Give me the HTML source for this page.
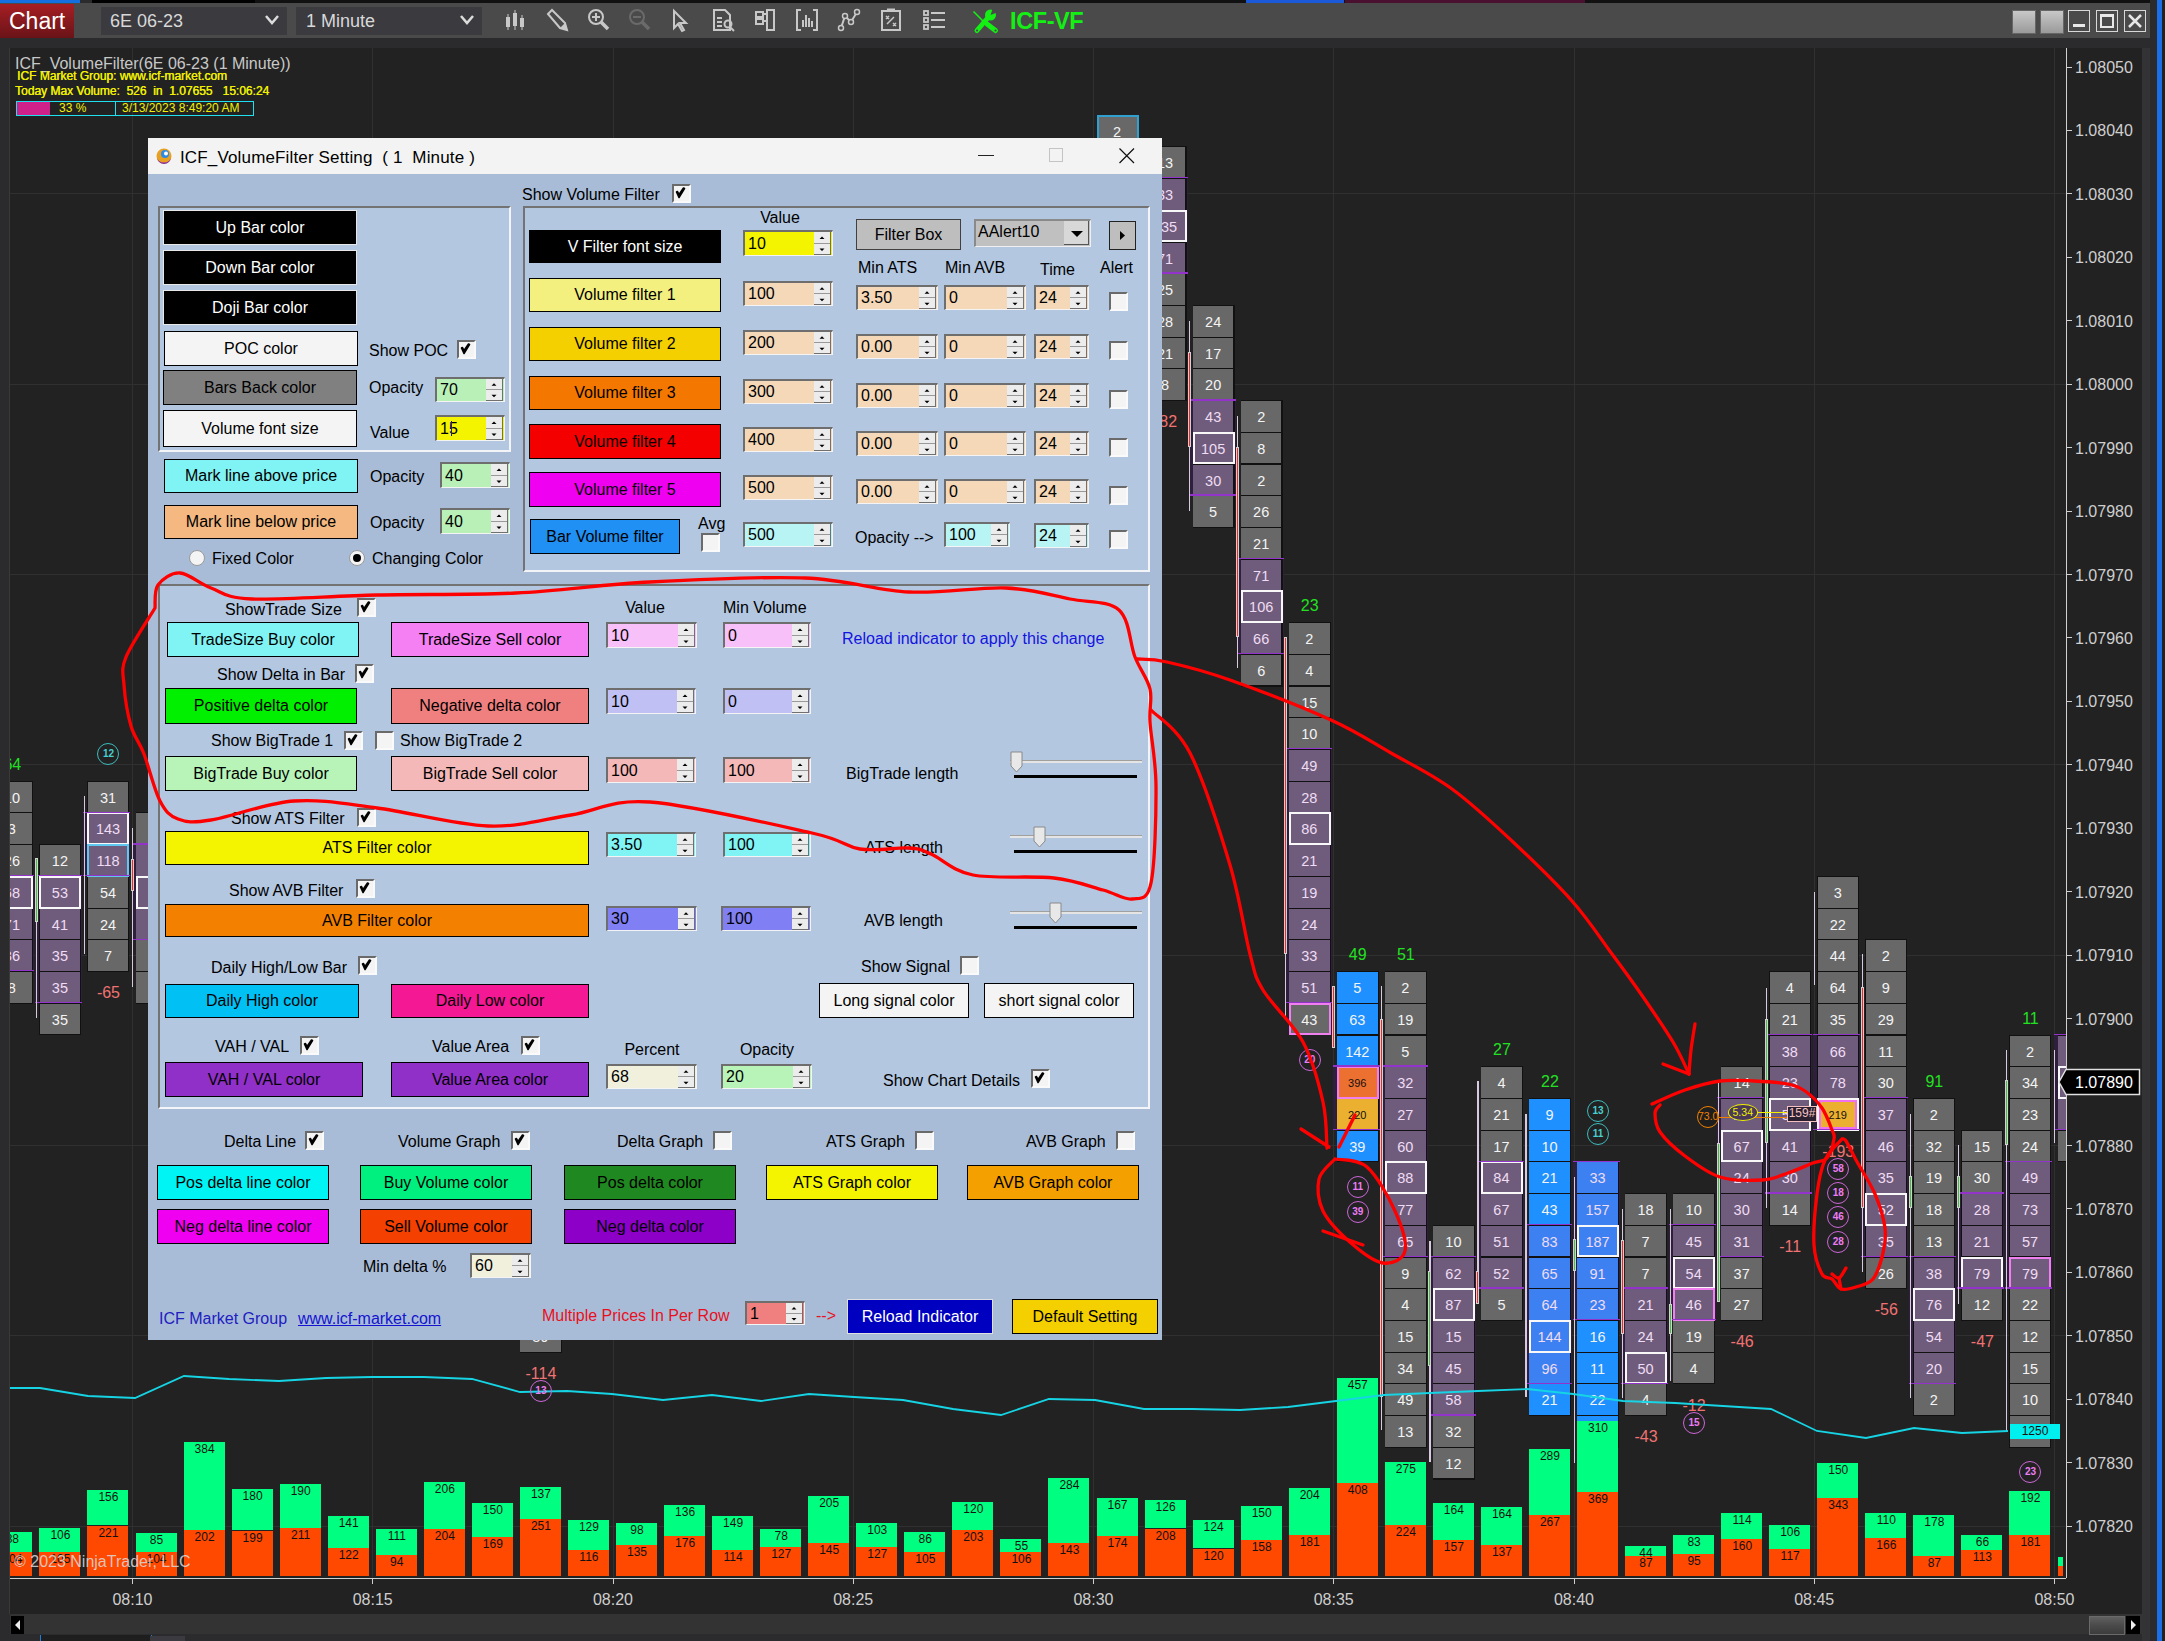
<!DOCTYPE html>
<html><head><meta charset="utf-8"><style>
html,body{margin:0;padding:0;width:2165px;height:1641px;overflow:hidden;background:#2b2b2d}
body{position:relative;font-family:"Liberation Sans", sans-serif}
div,svg{font-family:"Liberation Sans", sans-serif}
</style></head><body>
<div style="position:absolute;left:0px;top:0px;width:2165px;height:1641px;background:#2b2b2d"></div>
<div style="position:absolute;left:0px;top:0px;width:80px;height:3px;background:#1470e0"></div>
<div style="position:absolute;left:92px;top:0px;width:163px;height:3px;background:#000"></div>
<div style="position:absolute;left:255px;top:0px;width:1900px;height:3px;background:#111"></div>
<div style="position:absolute;left:1246px;top:0px;width:98px;height:3px;background:#1a5ad8"></div>
<div style="position:absolute;left:1345px;top:0px;width:240px;height:3px;background:#4a1030"></div>
<div style="position:absolute;left:0px;top:3px;width:2165px;height:35px;background:#4a4a4a"></div>
<div style="position:absolute;left:0px;top:4px;width:74px;height:34px;background:linear-gradient(#a61e24,#6a1418)"></div>
<div style="position:absolute;left:9px;top:6.5px;line-height:29px;font-size:23px;color:#fff;white-space:pre;">Chart</div>
<div style="position:absolute;left:101px;top:7px;width:186px;height:28px;background:#3a3a3f"></div>
<div style="position:absolute;left:110px;top:10.0px;line-height:22px;font-size:18px;color:#d8d8d8;white-space:pre;">6E 06-23</div>
<div style="position:absolute;left:296px;top:7px;width:186px;height:28px;background:#3a3a3f"></div>
<div style="position:absolute;left:306px;top:10.0px;line-height:22px;font-size:18px;color:#d8d8d8;white-space:pre;">1 Minute</div>
<svg style="position:absolute;left:264px;top:14px" width="16" height="12"><polyline points="2,2 8,9 14,2" fill="none" stroke="#dcdcdc" stroke-width="2.5"/></svg>
<svg style="position:absolute;left:459px;top:14px" width="16" height="12"><polyline points="2,2 8,9 14,2" fill="none" stroke="#dcdcdc" stroke-width="2.5"/></svg>
<svg style="position:absolute;left:503px;top:8px" width="25" height="25" viewBox="0 0 25 25"><rect x="3" y="9" width="4" height="10" fill="#c8c8c8"/><rect x="4.5" y="6" width="1" height="16" fill="#c8c8c8"/><rect x="10" y="5" width="4" height="13" fill="#c8c8c8"/><rect x="11.5" y="2" width="1" height="20" fill="#c8c8c8"/><rect x="17" y="10" width="4" height="9" fill="#c8c8c8"/><rect x="18.5" y="7" width="1" height="15" fill="#c8c8c8"/></svg>
<svg style="position:absolute;left:544px;top:8px" width="25" height="25" viewBox="0 0 25 25"><path d="M4 6 L8 2 L21 15 L23 22 L16 20 Z" fill="none" stroke="#c8c8c8" stroke-width="2"/><path d="M16 20 L23 22 L21 15 Z" fill="#c8c8c8"/></svg>
<svg style="position:absolute;left:586px;top:8px" width="25" height="25" viewBox="0 0 25 25"><circle cx="10" cy="9" r="7" fill="none" stroke="#c8c8c8" stroke-width="2"/><path d="M10 5 V13 M6 9 H14" stroke="#c8c8c8" stroke-width="2"/><path d="M15 14 L22 21" stroke="#c8c8c8" stroke-width="3.5"/></svg>
<svg style="position:absolute;left:627px;top:8px" width="25" height="25" viewBox="0 0 25 25"><circle cx="10" cy="9" r="7" fill="none" stroke="#6a6a6a" stroke-width="2"/><path d="M6 9 H14" stroke="#6a6a6a" stroke-width="2"/><path d="M15 14 L22 21" stroke="#6a6a6a" stroke-width="3.5"/></svg>
<svg style="position:absolute;left:668px;top:8px" width="25" height="25" viewBox="0 0 25 25"><path d="M6 3 L6 20 L10 16 L14 23 L16 22 L12 15 L18 15 Z" fill="none" stroke="#c8c8c8" stroke-width="2"/></svg>
<svg style="position:absolute;left:711px;top:8px" width="25" height="25" viewBox="0 0 25 25"><path d="M3 2 H14 L19 7 V22 H3 Z" fill="none" stroke="#c8c8c8" stroke-width="2"/><path d="M6 10 H11 M6 14 H11 M6 18 H11" stroke="#c8c8c8" stroke-width="2"/><circle cx="17" cy="16" r="3.5" fill="none" stroke="#c8c8c8" stroke-width="2"/><path d="M19 19 L23 23" stroke="#c8c8c8" stroke-width="2"/></svg>
<svg style="position:absolute;left:754px;top:8px" width="25" height="25" viewBox="0 0 25 25"><rect x="13" y="2" width="7" height="20" fill="none" stroke="#c8c8c8" stroke-width="2"/><rect x="2" y="4" width="7" height="5" fill="none" stroke="#c8c8c8" stroke-width="2"/><rect x="2" y="11" width="7" height="5" fill="none" stroke="#c8c8c8" stroke-width="2"/><path d="M9 6 H13 M9 13 H13" stroke="#c8c8c8" stroke-width="2"/></svg>
<svg style="position:absolute;left:795px;top:8px" width="25" height="25" viewBox="0 0 25 25"><path d="M6 2 H2 V22 H6 M18 2 H22 V22 H18" fill="none" stroke="#c8c8c8" stroke-width="2"/><path d="M8 12 V19 M11 7 V19 M14 10 V19 M17 13 V19" stroke="#c8c8c8" stroke-width="2"/></svg>
<svg style="position:absolute;left:837px;top:8px" width="25" height="25" viewBox="0 0 25 25"><path d="M4 20 L8 8 L14 14 L20 4" fill="none" stroke="#c8c8c8" stroke-width="2"/><circle cx="4" cy="20" r="2.5" fill="#4a4a4a" stroke="#c8c8c8" stroke-width="1.5"/><circle cx="8" cy="8" r="2.5" fill="#4a4a4a" stroke="#c8c8c8" stroke-width="1.5"/><circle cx="14" cy="14" r="2.5" fill="#4a4a4a" stroke="#c8c8c8" stroke-width="1.5"/><circle cx="20" cy="4" r="2.5" fill="#4a4a4a" stroke="#c8c8c8" stroke-width="1.5"/></svg>
<svg style="position:absolute;left:879px;top:8px" width="25" height="25" viewBox="0 0 25 25"><rect x="3" y="3" width="18" height="19" fill="none" stroke="#c8c8c8" stroke-width="2"/><path d="M8 2 H16" stroke="#c8c8c8" stroke-width="3"/><path d="M7 8 L10 11 M10 8 L7 11 M14 15 L17 18 M17 15 L14 18 M8 16 L15 9" stroke="#c8c8c8" stroke-width="1.5"/></svg>
<svg style="position:absolute;left:922px;top:8px" width="25" height="25" viewBox="0 0 25 25"><rect x="2" y="3" width="4" height="4" fill="none" stroke="#c8c8c8" stroke-width="1.8"/><rect x="2" y="10" width="4" height="4" fill="none" stroke="#c8c8c8" stroke-width="1.8"/><rect x="2" y="17" width="4" height="4" fill="none" stroke="#c8c8c8" stroke-width="1.8"/><path d="M9 5 H23 M9 12 H23 M9 19 H23" stroke="#c8c8c8" stroke-width="2"/></svg>
<svg style="position:absolute;left:970px;top:8px" width="30" height="28" viewBox="0 0 30 28"><path d="M3.5 3.5 L13 13" stroke="#14f014" stroke-width="1.6"/><path d="M17 16 L25.5 22.5" stroke="#14f014" stroke-width="5" stroke-linecap="round"/><path d="M7 22.5 L18.5 9" stroke="#14f014" stroke-width="5" stroke-linecap="round"/><circle cx="20.5" cy="7" r="5.5" fill="#14f014"/><path d="M20.5 7 L23 0 L28.5 4 Z" fill="#4a4a4a"/><circle cx="7" cy="22.5" r="1.1" fill="#4a4a4a"/><circle cx="25.5" cy="22.5" r="1.1" fill="#4a4a4a"/></svg>
<div style="position:absolute;left:1010px;top:6.5px;line-height:29px;font-size:23.5px;color:#14f014;white-space:pre;font-weight:bold;letter-spacing:-0.4px">ICF-VF</div>
<div style="position:absolute;left:2012px;top:10px;width:22px;height:22px;background:linear-gradient(#c8c8c8,#9a9a9a);border:1px solid #666"></div>
<div style="position:absolute;left:2040px;top:10px;width:22px;height:22px;background:linear-gradient(#c8c8c8,#9a9a9a);border:1px solid #666"></div>
<div style="position:absolute;left:2068px;top:10px;width:22px;height:22px;border:1.5px solid #d8d8d8;box-sizing:border-box"></div>
<div style="position:absolute;left:2096px;top:10px;width:22px;height:22px;border:1.5px solid #d8d8d8;box-sizing:border-box"></div>
<div style="position:absolute;left:2124px;top:10px;width:22px;height:22px;border:1.5px solid #d8d8d8;box-sizing:border-box"></div>
<div style="position:absolute;left:2073px;top:24px;width:12px;height:2.5px;background:#e8e8e8"></div>
<div style="position:absolute;left:2100px;top:14px;width:14px;height:14px;border:2px solid #e8e8e8;border-top-width:3px;box-sizing:border-box"></div>
<svg style="position:absolute;left:2124px;top:10px" width="22" height="22"><path d="M5 5 L17 17 M17 5 L5 17" stroke="#e8e8e8" stroke-width="2.5"/></svg>
<div style="position:absolute;left:10px;top:48px;width:2132px;height:1566px;background:#222222"></div>
<div style="position:absolute;left:9px;top:48px;width:1px;height:1566px;background:#3a3a3a"></div>
<div style="position:absolute;left:2142px;top:48px;width:8px;height:1593px;background:#333335"></div>
<div style="position:absolute;left:2157px;top:0px;width:5px;height:1641px;background:#1a6ee8"></div>
<div style="position:absolute;left:2150px;top:0px;width:7px;height:1641px;background:#2b2b2d"></div>
<div style="position:absolute;left:2162px;top:0px;width:3px;height:1641px;background:#222"></div>
<div style="position:absolute;left:0;top:0;width:2165px;height:1641px;clip-path:inset(48px 99px 63px 10px)">
<div style="position:absolute;left:10px;top:193.4px;width:2056px;height:1px;background:#303030"></div>
<div style="position:absolute;left:10px;top:383.7px;width:2056px;height:1px;background:#303030"></div>
<div style="position:absolute;left:10px;top:574.0px;width:2056px;height:1px;background:#303030"></div>
<div style="position:absolute;left:10px;top:764.3px;width:2056px;height:1px;background:#303030"></div>
<div style="position:absolute;left:10px;top:954.7px;width:2056px;height:1px;background:#303030"></div>
<div style="position:absolute;left:10px;top:1145.0px;width:2056px;height:1px;background:#303030"></div>
<div style="position:absolute;left:10px;top:1335.3px;width:2056px;height:1px;background:#303030"></div>
<div style="position:absolute;left:10px;top:1525.6px;width:2056px;height:1px;background:#303030"></div>
<div style="position:absolute;left:132.0px;top:48px;width:1px;height:1530px;background:#303030"></div>
<div style="position:absolute;left:372.25px;top:48px;width:1px;height:1530px;background:#303030"></div>
<div style="position:absolute;left:612.5px;top:48px;width:1px;height:1530px;background:#303030"></div>
<div style="position:absolute;left:852.75px;top:48px;width:1px;height:1530px;background:#303030"></div>
<div style="position:absolute;left:1093.0px;top:48px;width:1px;height:1530px;background:#303030"></div>
<div style="position:absolute;left:1333.25px;top:48px;width:1px;height:1530px;background:#303030"></div>
<div style="position:absolute;left:1573.5px;top:48px;width:1px;height:1530px;background:#303030"></div>
<div style="position:absolute;left:1813.75px;top:48px;width:1px;height:1530px;background:#303030"></div>
<div style="position:absolute;left:2054.0px;top:48px;width:1px;height:1530px;background:#303030"></div>
<div style="position:absolute;left:-12.65px;top:875.9px;width:47px;height:95.2px;background:#2e1f3c"></div>
<div style="position:absolute;left:-8.65px;top:780.7px;width:42px;height:223.0px;background:#111"></div>
<div style="position:absolute;left:-8.35px;top:781.7px;width:40.5px;height:30.7px;background:#686868;color:#f4f4f4;font-size:14.5px;line-height:32.7px;text-align:center">10</div>
<div style="position:absolute;left:-8.35px;top:813.4px;width:40.5px;height:30.7px;background:#686868;color:#f4f4f4;font-size:14.5px;line-height:32.7px;text-align:center">3</div>
<div style="position:absolute;left:-8.35px;top:845.1px;width:40.5px;height:30.7px;background:#686868;color:#f4f4f4;font-size:14.5px;line-height:32.7px;text-align:center">26</div>
<div style="position:absolute;left:-8.35px;top:876.9px;width:40.5px;height:30.7px;background:#6f5c7c;color:#f0dcf4;font-size:14.5px;line-height:32.7px;text-align:center">68</div>
<div style="position:absolute;left:-8.65px;top:875.9px;width:42px;height:32.7px;border:2px solid #f8f8f8;box-sizing:border-box"></div>
<div style="position:absolute;left:-8.35px;top:908.6px;width:40.5px;height:30.7px;background:#6f5c7c;color:#f0dcf4;font-size:14.5px;line-height:32.7px;text-align:center">71</div>
<div style="position:absolute;left:-8.35px;top:940.3px;width:40.5px;height:30.7px;background:#6f5c7c;color:#f0dcf4;font-size:14.5px;line-height:32.7px;text-align:center">36</div>
<div style="position:absolute;left:-8.35px;top:972.0px;width:40.5px;height:30.7px;background:#686868;color:#f4f4f4;font-size:14.5px;line-height:32.7px;text-align:center">8</div>
<div style="position:absolute;left:-12.65px;top:875.1px;width:47px;height:1.3px;background:#9432cc"></div>
<div style="position:absolute;left:-12.65px;top:970.2px;width:47px;height:1.3px;background:#9432cc"></div>
<div style="position:absolute;left:-7.65px;top:754.8px;width:40px;height:20px;line-height:20px;text-align:center;font-size:16px;color:#22e022">64</div>
<div style="position:absolute;left:35.4px;top:875.9px;width:47px;height:126.9px;background:#2e1f3c"></div>
<div style="position:absolute;left:39.4px;top:844.1px;width:42px;height:191.3px;background:#111"></div>
<div style="position:absolute;left:39.70px;top:845.1px;width:40.5px;height:30.7px;background:#686868;color:#f4f4f4;font-size:14.5px;line-height:32.7px;text-align:center">12</div>
<div style="position:absolute;left:39.70px;top:876.9px;width:40.5px;height:30.7px;background:#6f5c7c;color:#f0dcf4;font-size:14.5px;line-height:32.7px;text-align:center">53</div>
<div style="position:absolute;left:39.4px;top:875.9px;width:42px;height:32.7px;border:2px solid #f8f8f8;box-sizing:border-box"></div>
<div style="position:absolute;left:39.70px;top:908.6px;width:40.5px;height:30.7px;background:#6f5c7c;color:#f0dcf4;font-size:14.5px;line-height:32.7px;text-align:center">41</div>
<div style="position:absolute;left:39.70px;top:940.3px;width:40.5px;height:30.7px;background:#6f5c7c;color:#f0dcf4;font-size:14.5px;line-height:32.7px;text-align:center">35</div>
<div style="position:absolute;left:39.70px;top:972.0px;width:40.5px;height:30.7px;background:#6f5c7c;color:#f0dcf4;font-size:14.5px;line-height:32.7px;text-align:center">35</div>
<div style="position:absolute;left:39.70px;top:1003.7px;width:40.5px;height:30.7px;background:#686868;color:#f4f4f4;font-size:14.5px;line-height:32.7px;text-align:center">35</div>
<div style="position:absolute;left:35.4px;top:875.1px;width:47px;height:1.3px;background:#9432cc"></div>
<div style="position:absolute;left:35.4px;top:1001.9px;width:47px;height:1.3px;background:#9432cc"></div>
<div style="position:absolute;left:35.9px;top:858px;width:1.2px;height:160px;background:#d8c8e0"></div>
<div style="position:absolute;left:34.9px;top:858px;width:3px;height:64px;background:#d4d0d4"></div>
<div style="position:absolute;left:35.9px;top:859px;width:1px;height:62px;background:#40c040"></div>
<div style="position:absolute;left:83.45px;top:812.4px;width:47px;height:63.4px;background:#2e1f3c"></div>
<div style="position:absolute;left:87.45px;top:780.7px;width:42px;height:191.3px;background:#111"></div>
<div style="position:absolute;left:87.75px;top:781.7px;width:40.5px;height:30.7px;background:#686868;color:#f4f4f4;font-size:14.5px;line-height:32.7px;text-align:center">31</div>
<div style="position:absolute;left:87.75px;top:813.4px;width:40.5px;height:30.7px;background:#6f5c7c;color:#f0dcf4;font-size:14.5px;line-height:32.7px;text-align:center">143</div>
<div style="position:absolute;left:87.45px;top:812.4px;width:42px;height:32.7px;border:2px solid #f8f8f8;box-sizing:border-box"></div>
<div style="position:absolute;left:87.75px;top:845.1px;width:40.5px;height:30.7px;background:#6f5c7c;color:#f0dcf4;font-size:14.5px;line-height:32.7px;text-align:center">118</div>
<div style="position:absolute;left:87.45px;top:844.1px;width:42px;height:32.7px;border:2px solid #60c8f0;box-sizing:border-box"></div>
<div style="position:absolute;left:87.75px;top:876.9px;width:40.5px;height:30.7px;background:#686868;color:#f4f4f4;font-size:14.5px;line-height:32.7px;text-align:center">54</div>
<div style="position:absolute;left:87.75px;top:908.6px;width:40.5px;height:30.7px;background:#686868;color:#f4f4f4;font-size:14.5px;line-height:32.7px;text-align:center">24</div>
<div style="position:absolute;left:87.75px;top:940.3px;width:40.5px;height:30.7px;background:#686868;color:#f4f4f4;font-size:14.5px;line-height:32.7px;text-align:center">7</div>
<div style="position:absolute;left:83.45px;top:811.6px;width:47px;height:1.3px;background:#9432cc"></div>
<div style="position:absolute;left:83.45px;top:875.1px;width:47px;height:1.3px;background:#9432cc"></div>
<div style="position:absolute;left:83.95px;top:796px;width:1.2px;height:158px;background:#d8c8e0"></div>
<div style="position:absolute;left:88.45px;top:983.2px;width:40px;height:20px;line-height:20px;text-align:center;font-size:16px;color:#f07272">-65</div>
<div style="position:absolute;left:131.5px;top:844.1px;width:47px;height:95.2px;background:#2e1f3c"></div>
<div style="position:absolute;left:135.5px;top:812.4px;width:42px;height:191.3px;background:#111"></div>
<div style="position:absolute;left:135.80px;top:813.4px;width:40.5px;height:30.7px;background:#686868;color:#f4f4f4;font-size:14.5px;line-height:32.7px;text-align:center">75</div>
<div style="position:absolute;left:135.80px;top:845.1px;width:40.5px;height:30.7px;background:#6f5c7c;color:#f0dcf4;font-size:14.5px;line-height:32.7px;text-align:center">35</div>
<div style="position:absolute;left:135.80px;top:876.9px;width:40.5px;height:30.7px;background:#6f5c7c;color:#f0dcf4;font-size:14.5px;line-height:32.7px;text-align:center">65</div>
<div style="position:absolute;left:135.5px;top:875.9px;width:42px;height:32.7px;border:2px solid #f8f8f8;box-sizing:border-box"></div>
<div style="position:absolute;left:135.80px;top:908.6px;width:40.5px;height:30.7px;background:#6f5c7c;color:#f0dcf4;font-size:14.5px;line-height:32.7px;text-align:center">55</div>
<div style="position:absolute;left:135.80px;top:940.3px;width:40.5px;height:30.7px;background:#686868;color:#f4f4f4;font-size:14.5px;line-height:32.7px;text-align:center">24</div>
<div style="position:absolute;left:135.80px;top:972.0px;width:40.5px;height:30.7px;background:#686868;color:#f4f4f4;font-size:14.5px;line-height:32.7px;text-align:center">9</div>
<div style="position:absolute;left:131.5px;top:843.3px;width:47px;height:1.3px;background:#9432cc"></div>
<div style="position:absolute;left:131.5px;top:938.5px;width:47px;height:1.3px;background:#9432cc"></div>
<div style="position:absolute;left:132.0px;top:828px;width:1.2px;height:159px;background:#d8c8e0"></div>
<div style="position:absolute;left:131.0px;top:859px;width:3px;height:32px;background:#d4d0d4"></div>
<div style="position:absolute;left:132.0px;top:860px;width:1px;height:30px;background:#f02828"></div>
<div style="position:absolute;left:519.9px;top:1319.9px;width:42px;height:32.7px;background:#111"></div>
<div style="position:absolute;left:520.20px;top:1320.9px;width:40.5px;height:30.7px;background:#686868;color:#f4f4f4;font-size:14.5px;line-height:32.7px;text-align:center">39</div>
<div style="position:absolute;left:520.9px;top:1363.9px;width:40px;height:20px;line-height:20px;text-align:center;font-size:16px;color:#f07272">-114</div>
<div style="position:absolute;left:1096.5px;top:114.6px;width:42px;height:159.6px;background:#111"></div>
<div style="position:absolute;left:1096.80px;top:115.6px;width:40.5px;height:30.7px;background:#686868;color:#f4f4f4;font-size:14.5px;line-height:32.7px;text-align:center">2</div>
<div style="position:absolute;left:1096.5px;top:114.6px;width:42px;height:32.7px;border:2px solid #30a0d0;box-sizing:border-box"></div>
<div style="position:absolute;left:1096.80px;top:147.3px;width:40.5px;height:30.7px;background:#686868;color:#f4f4f4;font-size:14.5px;line-height:32.7px;text-align:center">44</div>
<div style="position:absolute;left:1096.80px;top:179.0px;width:40.5px;height:30.7px;background:#686868;color:#f4f4f4;font-size:14.5px;line-height:32.7px;text-align:center">74</div>
<div style="position:absolute;left:1096.80px;top:210.7px;width:40.5px;height:30.7px;background:#686868;color:#f4f4f4;font-size:14.5px;line-height:32.7px;text-align:center">75</div>
<div style="position:absolute;left:1096.80px;top:242.5px;width:40.5px;height:30.7px;background:#686868;color:#f4f4f4;font-size:14.5px;line-height:32.7px;text-align:center">90</div>
<div style="position:absolute;left:1140.55px;top:178.0px;width:47px;height:95.2px;background:#2e1f3c"></div>
<div style="position:absolute;left:1144.55px;top:146.3px;width:42px;height:254.8px;background:#111"></div>
<div style="position:absolute;left:1144.85px;top:147.3px;width:40.5px;height:30.7px;background:#686868;color:#f4f4f4;font-size:14.5px;line-height:32.7px;text-align:center">13</div>
<div style="position:absolute;left:1144.85px;top:179.0px;width:40.5px;height:30.7px;background:#6f5c7c;color:#f0dcf4;font-size:14.5px;line-height:32.7px;text-align:center">33</div>
<div style="position:absolute;left:1144.85px;top:210.7px;width:40.5px;height:30.7px;background:#6f5c7c;color:#f0dcf4;font-size:14.5px;line-height:32.7px;text-align:center">135</div>
<div style="position:absolute;left:1144.55px;top:209.7px;width:42px;height:32.7px;border:2px solid #f8f8f8;box-sizing:border-box"></div>
<div style="position:absolute;left:1144.85px;top:242.5px;width:40.5px;height:30.7px;background:#6f5c7c;color:#f0dcf4;font-size:14.5px;line-height:32.7px;text-align:center">71</div>
<div style="position:absolute;left:1144.85px;top:274.2px;width:40.5px;height:30.7px;background:#686868;color:#f4f4f4;font-size:14.5px;line-height:32.7px;text-align:center">25</div>
<div style="position:absolute;left:1144.85px;top:305.9px;width:40.5px;height:30.7px;background:#686868;color:#f4f4f4;font-size:14.5px;line-height:32.7px;text-align:center">28</div>
<div style="position:absolute;left:1144.85px;top:337.6px;width:40.5px;height:30.7px;background:#686868;color:#f4f4f4;font-size:14.5px;line-height:32.7px;text-align:center">21</div>
<div style="position:absolute;left:1144.85px;top:369.3px;width:40.5px;height:30.7px;background:#686868;color:#f4f4f4;font-size:14.5px;line-height:32.7px;text-align:center">8</div>
<div style="position:absolute;left:1140.55px;top:177.2px;width:47px;height:1.3px;background:#9432cc"></div>
<div style="position:absolute;left:1140.55px;top:272.4px;width:47px;height:1.3px;background:#9432cc"></div>
<div style="position:absolute;left:1145.55px;top:412.3px;width:40px;height:20px;line-height:20px;text-align:center;font-size:16px;color:#f07272">-82</div>
<div style="position:absolute;left:1188.6px;top:400.1px;width:47px;height:95.2px;background:#2e1f3c"></div>
<div style="position:absolute;left:1192.6px;top:304.9px;width:42px;height:223.0px;background:#111"></div>
<div style="position:absolute;left:1192.90px;top:305.9px;width:40.5px;height:30.7px;background:#686868;color:#f4f4f4;font-size:14.5px;line-height:32.7px;text-align:center">24</div>
<div style="position:absolute;left:1192.90px;top:337.6px;width:40.5px;height:30.7px;background:#686868;color:#f4f4f4;font-size:14.5px;line-height:32.7px;text-align:center">17</div>
<div style="position:absolute;left:1192.90px;top:369.3px;width:40.5px;height:30.7px;background:#686868;color:#f4f4f4;font-size:14.5px;line-height:32.7px;text-align:center">20</div>
<div style="position:absolute;left:1192.90px;top:401.1px;width:40.5px;height:30.7px;background:#6f5c7c;color:#f0dcf4;font-size:14.5px;line-height:32.7px;text-align:center">43</div>
<div style="position:absolute;left:1192.90px;top:432.8px;width:40.5px;height:30.7px;background:#6f5c7c;color:#f0dcf4;font-size:14.5px;line-height:32.7px;text-align:center">105</div>
<div style="position:absolute;left:1192.6px;top:431.8px;width:42px;height:32.7px;border:2px solid #f8f8f8;box-sizing:border-box"></div>
<div style="position:absolute;left:1192.90px;top:464.5px;width:40.5px;height:30.7px;background:#6f5c7c;color:#f0dcf4;font-size:14.5px;line-height:32.7px;text-align:center">30</div>
<div style="position:absolute;left:1192.90px;top:496.2px;width:40.5px;height:30.7px;background:#686868;color:#f4f4f4;font-size:14.5px;line-height:32.7px;text-align:center">5</div>
<div style="position:absolute;left:1188.6px;top:399.3px;width:47px;height:1.3px;background:#9432cc"></div>
<div style="position:absolute;left:1188.6px;top:494.4px;width:47px;height:1.3px;background:#9432cc"></div>
<div style="position:absolute;left:1189.1px;top:321px;width:1.2px;height:190px;background:#d8c8e0"></div>
<div style="position:absolute;left:1188.1px;top:352px;width:3px;height:95px;background:#d4d0d4"></div>
<div style="position:absolute;left:1189.1px;top:353px;width:1px;height:93px;background:#f02828"></div>
<div style="position:absolute;left:1236.65px;top:558.7px;width:47px;height:95.2px;background:#2e1f3c"></div>
<div style="position:absolute;left:1240.65px;top:400.1px;width:42px;height:286.5px;background:#111"></div>
<div style="position:absolute;left:1240.95px;top:401.1px;width:40.5px;height:30.7px;background:#686868;color:#f4f4f4;font-size:14.5px;line-height:32.7px;text-align:center">2</div>
<div style="position:absolute;left:1240.95px;top:432.8px;width:40.5px;height:30.7px;background:#686868;color:#f4f4f4;font-size:14.5px;line-height:32.7px;text-align:center">8</div>
<div style="position:absolute;left:1240.95px;top:464.5px;width:40.5px;height:30.7px;background:#686868;color:#f4f4f4;font-size:14.5px;line-height:32.7px;text-align:center">2</div>
<div style="position:absolute;left:1240.95px;top:496.2px;width:40.5px;height:30.7px;background:#686868;color:#f4f4f4;font-size:14.5px;line-height:32.7px;text-align:center">26</div>
<div style="position:absolute;left:1240.95px;top:527.9px;width:40.5px;height:30.7px;background:#686868;color:#f4f4f4;font-size:14.5px;line-height:32.7px;text-align:center">21</div>
<div style="position:absolute;left:1240.95px;top:559.7px;width:40.5px;height:30.7px;background:#6f5c7c;color:#f0dcf4;font-size:14.5px;line-height:32.7px;text-align:center">71</div>
<div style="position:absolute;left:1240.95px;top:591.4px;width:40.5px;height:30.7px;background:#6f5c7c;color:#f0dcf4;font-size:14.5px;line-height:32.7px;text-align:center">106</div>
<div style="position:absolute;left:1240.65px;top:590.4px;width:42px;height:32.7px;border:2px solid #f8f8f8;box-sizing:border-box"></div>
<div style="position:absolute;left:1240.95px;top:623.1px;width:40.5px;height:30.7px;background:#6f5c7c;color:#f0dcf4;font-size:14.5px;line-height:32.7px;text-align:center">66</div>
<div style="position:absolute;left:1240.95px;top:654.8px;width:40.5px;height:30.7px;background:#686868;color:#f4f4f4;font-size:14.5px;line-height:32.7px;text-align:center">6</div>
<div style="position:absolute;left:1236.65px;top:557.9px;width:47px;height:1.3px;background:#9432cc"></div>
<div style="position:absolute;left:1236.65px;top:653.0px;width:47px;height:1.3px;background:#9432cc"></div>
<div style="position:absolute;left:1237.15px;top:416px;width:1.2px;height:252px;background:#d8c8e0"></div>
<div style="position:absolute;left:1236.15px;top:447px;width:3px;height:190px;background:#d4d0d4"></div>
<div style="position:absolute;left:1237.15px;top:448px;width:1px;height:188px;background:#f02828"></div>
<div style="position:absolute;left:1284.7px;top:749.0px;width:47px;height:253.8px;background:#2e1f3c"></div>
<div style="position:absolute;left:1288.7px;top:622.1px;width:42px;height:413.4px;background:#111"></div>
<div style="position:absolute;left:1289.00px;top:623.1px;width:40.5px;height:30.7px;background:#686868;color:#f4f4f4;font-size:14.5px;line-height:32.7px;text-align:center">2</div>
<div style="position:absolute;left:1289.00px;top:654.8px;width:40.5px;height:30.7px;background:#686868;color:#f4f4f4;font-size:14.5px;line-height:32.7px;text-align:center">4</div>
<div style="position:absolute;left:1289.00px;top:686.5px;width:40.5px;height:30.7px;background:#686868;color:#f4f4f4;font-size:14.5px;line-height:32.7px;text-align:center">15</div>
<div style="position:absolute;left:1289.00px;top:718.3px;width:40.5px;height:30.7px;background:#686868;color:#f4f4f4;font-size:14.5px;line-height:32.7px;text-align:center">10</div>
<div style="position:absolute;left:1289.00px;top:750.0px;width:40.5px;height:30.7px;background:#6f5c7c;color:#f0dcf4;font-size:14.5px;line-height:32.7px;text-align:center">49</div>
<div style="position:absolute;left:1289.00px;top:781.7px;width:40.5px;height:30.7px;background:#6f5c7c;color:#f0dcf4;font-size:14.5px;line-height:32.7px;text-align:center">28</div>
<div style="position:absolute;left:1289.00px;top:813.4px;width:40.5px;height:30.7px;background:#6f5c7c;color:#f0dcf4;font-size:14.5px;line-height:32.7px;text-align:center">86</div>
<div style="position:absolute;left:1288.7px;top:812.4px;width:42px;height:32.7px;border:2px solid #f8f8f8;box-sizing:border-box"></div>
<div style="position:absolute;left:1289.00px;top:845.1px;width:40.5px;height:30.7px;background:#6f5c7c;color:#f0dcf4;font-size:14.5px;line-height:32.7px;text-align:center">21</div>
<div style="position:absolute;left:1289.00px;top:876.9px;width:40.5px;height:30.7px;background:#6f5c7c;color:#f0dcf4;font-size:14.5px;line-height:32.7px;text-align:center">19</div>
<div style="position:absolute;left:1289.00px;top:908.6px;width:40.5px;height:30.7px;background:#6f5c7c;color:#f0dcf4;font-size:14.5px;line-height:32.7px;text-align:center">24</div>
<div style="position:absolute;left:1289.00px;top:940.3px;width:40.5px;height:30.7px;background:#6f5c7c;color:#f0dcf4;font-size:14.5px;line-height:32.7px;text-align:center">33</div>
<div style="position:absolute;left:1289.00px;top:972.0px;width:40.5px;height:30.7px;background:#6f5c7c;color:#f0dcf4;font-size:14.5px;line-height:32.7px;text-align:center">51</div>
<div style="position:absolute;left:1289.00px;top:1003.7px;width:40.5px;height:30.7px;background:#686868;color:#f4f4f4;font-size:14.5px;line-height:32.7px;text-align:center">43</div>
<div style="position:absolute;left:1288.7px;top:1002.7px;width:42px;height:32.7px;border:2px solid #f080f0;box-sizing:border-box"></div>
<div style="position:absolute;left:1284.7px;top:748.2px;width:47px;height:1.3px;background:#9432cc"></div>
<div style="position:absolute;left:1284.7px;top:1001.9px;width:47px;height:1.3px;background:#9432cc"></div>
<div style="position:absolute;left:1285.2px;top:637px;width:1.2px;height:380px;background:#d8c8e0"></div>
<div style="position:absolute;left:1284.2px;top:637px;width:3px;height:317px;background:#d4d0d4"></div>
<div style="position:absolute;left:1285.2px;top:638px;width:1px;height:315px;background:#f02828"></div>
<div style="position:absolute;left:1289.7px;top:596.2px;width:40px;height:20px;line-height:20px;text-align:center;font-size:16px;color:#22e022">23</div>
<div style="position:absolute;left:1332.75px;top:1066.2px;width:47px;height:63.4px;background:#2e1f3c"></div>
<div style="position:absolute;left:1336.75px;top:971.0px;width:42px;height:191.3px;background:#111"></div>
<div style="position:absolute;left:1337.05px;top:972.0px;width:40.5px;height:30.7px;background:#1e90ff;color:#f4f4f4;font-size:14.5px;line-height:32.7px;text-align:center">5</div>
<div style="position:absolute;left:1337.05px;top:1003.7px;width:40.5px;height:30.7px;background:#1e90ff;color:#f4f4f4;font-size:14.5px;line-height:32.7px;text-align:center">63</div>
<div style="position:absolute;left:1337.05px;top:1035.5px;width:40.5px;height:30.7px;background:#1e90ff;color:#f4f4f4;font-size:14.5px;line-height:32.7px;text-align:center">142</div>
<div style="position:absolute;left:1337.05px;top:1067.2px;width:40.5px;height:30.7px;background:#ec7030;color:#111;font-size:11px;line-height:32.7px;text-align:center">396</div>
<div style="position:absolute;left:1336.75px;top:1066.2px;width:42px;height:32.7px;border:2px solid #f080f0;box-sizing:border-box"></div>
<div style="position:absolute;left:1337.05px;top:1098.9px;width:40.5px;height:30.7px;background:#ecb030;color:#111;font-size:11px;line-height:32.7px;text-align:center">220</div>
<div style="position:absolute;left:1337.05px;top:1130.6px;width:40.5px;height:30.7px;background:#1e90ff;color:#f4f4f4;font-size:14.5px;line-height:32.7px;text-align:center">39</div>
<div style="position:absolute;left:1332.75px;top:1065.4px;width:47px;height:1.3px;background:#9432cc"></div>
<div style="position:absolute;left:1332.75px;top:1128.8px;width:47px;height:1.3px;background:#9432cc"></div>
<div style="position:absolute;left:1333.25px;top:986px;width:1.2px;height:62px;background:#d8c8e0"></div>
<div style="position:absolute;left:1332.25px;top:986px;width:3px;height:62px;background:#d4d0d4"></div>
<div style="position:absolute;left:1333.25px;top:987px;width:1px;height:60px;background:#f02828"></div>
<div style="position:absolute;left:1337.75px;top:945.2px;width:40px;height:20px;line-height:20px;text-align:center;font-size:16px;color:#22e022">49</div>
<div style="position:absolute;left:1380.8px;top:1066.2px;width:47px;height:190.3px;background:#2e1f3c"></div>
<div style="position:absolute;left:1384.8px;top:971.0px;width:42px;height:476.8px;background:#111"></div>
<div style="position:absolute;left:1385.10px;top:972.0px;width:40.5px;height:30.7px;background:#686868;color:#f4f4f4;font-size:14.5px;line-height:32.7px;text-align:center">2</div>
<div style="position:absolute;left:1385.10px;top:1003.7px;width:40.5px;height:30.7px;background:#686868;color:#f4f4f4;font-size:14.5px;line-height:32.7px;text-align:center">19</div>
<div style="position:absolute;left:1385.10px;top:1035.5px;width:40.5px;height:30.7px;background:#686868;color:#f4f4f4;font-size:14.5px;line-height:32.7px;text-align:center">5</div>
<div style="position:absolute;left:1385.10px;top:1067.2px;width:40.5px;height:30.7px;background:#6f5c7c;color:#f0dcf4;font-size:14.5px;line-height:32.7px;text-align:center">32</div>
<div style="position:absolute;left:1385.10px;top:1098.9px;width:40.5px;height:30.7px;background:#6f5c7c;color:#f0dcf4;font-size:14.5px;line-height:32.7px;text-align:center">27</div>
<div style="position:absolute;left:1385.10px;top:1130.6px;width:40.5px;height:30.7px;background:#6f5c7c;color:#f0dcf4;font-size:14.5px;line-height:32.7px;text-align:center">60</div>
<div style="position:absolute;left:1385.10px;top:1162.3px;width:40.5px;height:30.7px;background:#6f5c7c;color:#f0dcf4;font-size:14.5px;line-height:32.7px;text-align:center">88</div>
<div style="position:absolute;left:1384.8px;top:1161.3px;width:42px;height:32.7px;border:2px solid #f8f8f8;box-sizing:border-box"></div>
<div style="position:absolute;left:1385.10px;top:1194.1px;width:40.5px;height:30.7px;background:#6f5c7c;color:#f0dcf4;font-size:14.5px;line-height:32.7px;text-align:center">77</div>
<div style="position:absolute;left:1385.10px;top:1225.8px;width:40.5px;height:30.7px;background:#6f5c7c;color:#f0dcf4;font-size:14.5px;line-height:32.7px;text-align:center">65</div>
<div style="position:absolute;left:1385.10px;top:1257.5px;width:40.5px;height:30.7px;background:#686868;color:#f4f4f4;font-size:14.5px;line-height:32.7px;text-align:center">9</div>
<div style="position:absolute;left:1385.10px;top:1289.2px;width:40.5px;height:30.7px;background:#686868;color:#f4f4f4;font-size:14.5px;line-height:32.7px;text-align:center">4</div>
<div style="position:absolute;left:1385.10px;top:1320.9px;width:40.5px;height:30.7px;background:#686868;color:#f4f4f4;font-size:14.5px;line-height:32.7px;text-align:center">15</div>
<div style="position:absolute;left:1385.10px;top:1352.7px;width:40.5px;height:30.7px;background:#686868;color:#f4f4f4;font-size:14.5px;line-height:32.7px;text-align:center">34</div>
<div style="position:absolute;left:1385.10px;top:1384.4px;width:40.5px;height:30.7px;background:#686868;color:#f4f4f4;font-size:14.5px;line-height:32.7px;text-align:center">49</div>
<div style="position:absolute;left:1385.10px;top:1416.1px;width:40.5px;height:30.7px;background:#686868;color:#f4f4f4;font-size:14.5px;line-height:32.7px;text-align:center">13</div>
<div style="position:absolute;left:1380.8px;top:1065.4px;width:47px;height:1.3px;background:#9432cc"></div>
<div style="position:absolute;left:1380.8px;top:1255.7px;width:47px;height:1.3px;background:#9432cc"></div>
<div style="position:absolute;left:1381.3px;top:986px;width:1.2px;height:444px;background:#d8c8e0"></div>
<div style="position:absolute;left:1380.3px;top:1019px;width:3px;height:378px;background:#d4d0d4"></div>
<div style="position:absolute;left:1381.3px;top:1020px;width:1px;height:376px;background:#f02828"></div>
<div style="position:absolute;left:1385.8px;top:945.2px;width:40px;height:20px;line-height:20px;text-align:center;font-size:16px;color:#22e022">51</div>
<div style="position:absolute;left:1428.85px;top:1256.5px;width:47px;height:158.6px;background:#2e1f3c"></div>
<div style="position:absolute;left:1432.85px;top:1224.8px;width:42px;height:254.8px;background:#111"></div>
<div style="position:absolute;left:1433.15px;top:1225.8px;width:40.5px;height:30.7px;background:#686868;color:#f4f4f4;font-size:14.5px;line-height:32.7px;text-align:center">10</div>
<div style="position:absolute;left:1433.15px;top:1257.5px;width:40.5px;height:30.7px;background:#6f5c7c;color:#f0dcf4;font-size:14.5px;line-height:32.7px;text-align:center">62</div>
<div style="position:absolute;left:1433.15px;top:1289.2px;width:40.5px;height:30.7px;background:#6f5c7c;color:#f0dcf4;font-size:14.5px;line-height:32.7px;text-align:center">87</div>
<div style="position:absolute;left:1432.85px;top:1288.2px;width:42px;height:32.7px;border:2px solid #f8f8f8;box-sizing:border-box"></div>
<div style="position:absolute;left:1433.15px;top:1320.9px;width:40.5px;height:30.7px;background:#6f5c7c;color:#f0dcf4;font-size:14.5px;line-height:32.7px;text-align:center">15</div>
<div style="position:absolute;left:1433.15px;top:1352.7px;width:40.5px;height:30.7px;background:#6f5c7c;color:#f0dcf4;font-size:14.5px;line-height:32.7px;text-align:center">45</div>
<div style="position:absolute;left:1433.15px;top:1384.4px;width:40.5px;height:30.7px;background:#6f5c7c;color:#f0dcf4;font-size:14.5px;line-height:32.7px;text-align:center">58</div>
<div style="position:absolute;left:1433.15px;top:1416.1px;width:40.5px;height:30.7px;background:#686868;color:#f4f4f4;font-size:14.5px;line-height:32.7px;text-align:center">32</div>
<div style="position:absolute;left:1433.15px;top:1447.8px;width:40.5px;height:30.7px;background:#686868;color:#f4f4f4;font-size:14.5px;line-height:32.7px;text-align:center">12</div>
<div style="position:absolute;left:1428.85px;top:1255.7px;width:47px;height:1.3px;background:#9432cc"></div>
<div style="position:absolute;left:1428.85px;top:1414.3px;width:47px;height:1.3px;background:#9432cc"></div>
<div style="position:absolute;left:1429.35px;top:1241px;width:1.2px;height:221px;background:#d8c8e0"></div>
<div style="position:absolute;left:1428.35px;top:1271px;width:3px;height:95px;background:#d4d0d4"></div>
<div style="position:absolute;left:1429.35px;top:1272px;width:1px;height:93px;background:#40c040"></div>
<div style="position:absolute;left:1476.9px;top:1161.3px;width:47px;height:126.9px;background:#2e1f3c"></div>
<div style="position:absolute;left:1480.9px;top:1066.2px;width:42px;height:254.8px;background:#111"></div>
<div style="position:absolute;left:1481.20px;top:1067.2px;width:40.5px;height:30.7px;background:#686868;color:#f4f4f4;font-size:14.5px;line-height:32.7px;text-align:center">4</div>
<div style="position:absolute;left:1481.20px;top:1098.9px;width:40.5px;height:30.7px;background:#686868;color:#f4f4f4;font-size:14.5px;line-height:32.7px;text-align:center">21</div>
<div style="position:absolute;left:1481.20px;top:1130.6px;width:40.5px;height:30.7px;background:#686868;color:#f4f4f4;font-size:14.5px;line-height:32.7px;text-align:center">17</div>
<div style="position:absolute;left:1481.20px;top:1162.3px;width:40.5px;height:30.7px;background:#6f5c7c;color:#f0dcf4;font-size:14.5px;line-height:32.7px;text-align:center">84</div>
<div style="position:absolute;left:1480.9px;top:1161.3px;width:42px;height:32.7px;border:2px solid #f8f8f8;box-sizing:border-box"></div>
<div style="position:absolute;left:1481.20px;top:1194.1px;width:40.5px;height:30.7px;background:#6f5c7c;color:#f0dcf4;font-size:14.5px;line-height:32.7px;text-align:center">67</div>
<div style="position:absolute;left:1481.20px;top:1225.8px;width:40.5px;height:30.7px;background:#6f5c7c;color:#f0dcf4;font-size:14.5px;line-height:32.7px;text-align:center">51</div>
<div style="position:absolute;left:1481.20px;top:1257.5px;width:40.5px;height:30.7px;background:#6f5c7c;color:#f0dcf4;font-size:14.5px;line-height:32.7px;text-align:center">52</div>
<div style="position:absolute;left:1481.20px;top:1289.2px;width:40.5px;height:30.7px;background:#686868;color:#f4f4f4;font-size:14.5px;line-height:32.7px;text-align:center">5</div>
<div style="position:absolute;left:1476.9px;top:1160.5px;width:47px;height:1.3px;background:#9432cc"></div>
<div style="position:absolute;left:1476.9px;top:1287.4px;width:47px;height:1.3px;background:#9432cc"></div>
<div style="position:absolute;left:1477.4px;top:1081px;width:1.2px;height:223px;background:#d8c8e0"></div>
<div style="position:absolute;left:1476.4px;top:1271px;width:3px;height:33px;background:#d4d0d4"></div>
<div style="position:absolute;left:1477.4px;top:1272px;width:1px;height:31px;background:#f02828"></div>
<div style="position:absolute;left:1481.9px;top:1040.3px;width:40px;height:20px;line-height:20px;text-align:center;font-size:16px;color:#22e022">27</div>
<div style="position:absolute;left:1524.95px;top:1224.8px;width:47px;height:158.6px;background:#2e1f3c"></div>
<div style="position:absolute;left:1528.95px;top:1097.9px;width:42px;height:318.2px;background:#111"></div>
<div style="position:absolute;left:1529.25px;top:1098.9px;width:40.5px;height:30.7px;background:#1e90ff;color:#f4f4f4;font-size:14.5px;line-height:32.7px;text-align:center">9</div>
<div style="position:absolute;left:1529.25px;top:1130.6px;width:40.5px;height:30.7px;background:#1e90ff;color:#f4f4f4;font-size:14.5px;line-height:32.7px;text-align:center">10</div>
<div style="position:absolute;left:1529.25px;top:1162.3px;width:40.5px;height:30.7px;background:#1e90ff;color:#f4f4f4;font-size:14.5px;line-height:32.7px;text-align:center">21</div>
<div style="position:absolute;left:1529.25px;top:1194.1px;width:40.5px;height:30.7px;background:#1e90ff;color:#f4f4f4;font-size:14.5px;line-height:32.7px;text-align:center">43</div>
<div style="position:absolute;left:1529.25px;top:1225.8px;width:40.5px;height:30.7px;background:#3c80f2;color:#f0dcf4;font-size:14.5px;line-height:32.7px;text-align:center">83</div>
<div style="position:absolute;left:1529.25px;top:1257.5px;width:40.5px;height:30.7px;background:#3c80f2;color:#f0dcf4;font-size:14.5px;line-height:32.7px;text-align:center">65</div>
<div style="position:absolute;left:1529.25px;top:1289.2px;width:40.5px;height:30.7px;background:#3c80f2;color:#f0dcf4;font-size:14.5px;line-height:32.7px;text-align:center">64</div>
<div style="position:absolute;left:1529.25px;top:1320.9px;width:40.5px;height:30.7px;background:#3c80f2;color:#f0dcf4;font-size:14.5px;line-height:32.7px;text-align:center">144</div>
<div style="position:absolute;left:1528.95px;top:1319.9px;width:42px;height:32.7px;border:2px solid #f8f8f8;box-sizing:border-box"></div>
<div style="position:absolute;left:1529.25px;top:1352.7px;width:40.5px;height:30.7px;background:#3c80f2;color:#f0dcf4;font-size:14.5px;line-height:32.7px;text-align:center">96</div>
<div style="position:absolute;left:1529.25px;top:1384.4px;width:40.5px;height:30.7px;background:#1e90ff;color:#f4f4f4;font-size:14.5px;line-height:32.7px;text-align:center">21</div>
<div style="position:absolute;left:1524.95px;top:1224.0px;width:47px;height:1.3px;background:#9432cc"></div>
<div style="position:absolute;left:1524.95px;top:1382.6px;width:47px;height:1.3px;background:#9432cc"></div>
<div style="position:absolute;left:1525.45px;top:1114px;width:1.2px;height:283px;background:#d8c8e0"></div>
<div style="position:absolute;left:1529.95px;top:1072.0px;width:40px;height:20px;line-height:20px;text-align:center;font-size:16px;color:#22e022">22</div>
<div style="position:absolute;left:1573.0px;top:1161.3px;width:47px;height:158.6px;background:#2e1f3c"></div>
<div style="position:absolute;left:1577.0px;top:1161.3px;width:42px;height:286.5px;background:#111"></div>
<div style="position:absolute;left:1577.30px;top:1162.3px;width:40.5px;height:30.7px;background:#3c80f2;color:#f0dcf4;font-size:14.5px;line-height:32.7px;text-align:center">33</div>
<div style="position:absolute;left:1577.30px;top:1194.1px;width:40.5px;height:30.7px;background:#3c80f2;color:#f0dcf4;font-size:14.5px;line-height:32.7px;text-align:center">157</div>
<div style="position:absolute;left:1577.30px;top:1225.8px;width:40.5px;height:30.7px;background:#3c80f2;color:#f0dcf4;font-size:14.5px;line-height:32.7px;text-align:center">187</div>
<div style="position:absolute;left:1577.0px;top:1224.8px;width:42px;height:32.7px;border:2px solid #f8f8f8;box-sizing:border-box"></div>
<div style="position:absolute;left:1577.30px;top:1257.5px;width:40.5px;height:30.7px;background:#3c80f2;color:#f0dcf4;font-size:14.5px;line-height:32.7px;text-align:center">91</div>
<div style="position:absolute;left:1577.30px;top:1289.2px;width:40.5px;height:30.7px;background:#3c80f2;color:#f0dcf4;font-size:14.5px;line-height:32.7px;text-align:center">23</div>
<div style="position:absolute;left:1577.30px;top:1320.9px;width:40.5px;height:30.7px;background:#1e90ff;color:#f4f4f4;font-size:14.5px;line-height:32.7px;text-align:center">16</div>
<div style="position:absolute;left:1577.30px;top:1352.7px;width:40.5px;height:30.7px;background:#1e90ff;color:#f4f4f4;font-size:14.5px;line-height:32.7px;text-align:center">11</div>
<div style="position:absolute;left:1577.30px;top:1384.4px;width:40.5px;height:30.7px;background:#1e90ff;color:#f4f4f4;font-size:14.5px;line-height:32.7px;text-align:center">22</div>
<div style="position:absolute;left:1577.30px;top:1416.1px;width:40.5px;height:30.7px;background:#1e90ff;color:#f4f4f4;font-size:14.5px;line-height:32.7px;text-align:center">5</div>
<div style="position:absolute;left:1573.0px;top:1160.5px;width:47px;height:1.3px;background:#9432cc"></div>
<div style="position:absolute;left:1573.0px;top:1319.1px;width:47px;height:1.3px;background:#9432cc"></div>
<div style="position:absolute;left:1573.5px;top:1177px;width:1.2px;height:286px;background:#d8c8e0"></div>
<div style="position:absolute;left:1572.5px;top:1239px;width:3px;height:32px;background:#d4d0d4"></div>
<div style="position:absolute;left:1573.5px;top:1240px;width:1px;height:30px;background:#40c040"></div>
<div style="position:absolute;left:1621.05px;top:1288.2px;width:47px;height:95.2px;background:#2e1f3c"></div>
<div style="position:absolute;left:1625.05px;top:1193.1px;width:42px;height:223.0px;background:#111"></div>
<div style="position:absolute;left:1625.35px;top:1194.1px;width:40.5px;height:30.7px;background:#686868;color:#f4f4f4;font-size:14.5px;line-height:32.7px;text-align:center">18</div>
<div style="position:absolute;left:1625.35px;top:1225.8px;width:40.5px;height:30.7px;background:#686868;color:#f4f4f4;font-size:14.5px;line-height:32.7px;text-align:center">7</div>
<div style="position:absolute;left:1625.35px;top:1257.5px;width:40.5px;height:30.7px;background:#686868;color:#f4f4f4;font-size:14.5px;line-height:32.7px;text-align:center">7</div>
<div style="position:absolute;left:1625.35px;top:1289.2px;width:40.5px;height:30.7px;background:#6f5c7c;color:#f0dcf4;font-size:14.5px;line-height:32.7px;text-align:center">21</div>
<div style="position:absolute;left:1625.35px;top:1320.9px;width:40.5px;height:30.7px;background:#6f5c7c;color:#f0dcf4;font-size:14.5px;line-height:32.7px;text-align:center">24</div>
<div style="position:absolute;left:1625.35px;top:1352.7px;width:40.5px;height:30.7px;background:#6f5c7c;color:#f0dcf4;font-size:14.5px;line-height:32.7px;text-align:center">50</div>
<div style="position:absolute;left:1625.05px;top:1351.7px;width:42px;height:32.7px;border:2px solid #f8f8f8;box-sizing:border-box"></div>
<div style="position:absolute;left:1625.35px;top:1384.4px;width:40.5px;height:30.7px;background:#686868;color:#f4f4f4;font-size:14.5px;line-height:32.7px;text-align:center">4</div>
<div style="position:absolute;left:1621.05px;top:1287.4px;width:47px;height:1.3px;background:#9432cc"></div>
<div style="position:absolute;left:1621.05px;top:1382.6px;width:47px;height:1.3px;background:#9432cc"></div>
<div style="position:absolute;left:1621.55px;top:1209px;width:1.2px;height:189px;background:#d8c8e0"></div>
<div style="position:absolute;left:1620.55px;top:1240px;width:3px;height:94px;background:#d4d0d4"></div>
<div style="position:absolute;left:1621.55px;top:1241px;width:1px;height:92px;background:#f02828"></div>
<div style="position:absolute;left:1626.05px;top:1427.3px;width:40px;height:20px;line-height:20px;text-align:center;font-size:16px;color:#f07272">-43</div>
<div style="position:absolute;left:1669.1px;top:1224.8px;width:47px;height:95.2px;background:#2e1f3c"></div>
<div style="position:absolute;left:1673.1px;top:1193.1px;width:42px;height:191.3px;background:#111"></div>
<div style="position:absolute;left:1673.40px;top:1194.1px;width:40.5px;height:30.7px;background:#686868;color:#f4f4f4;font-size:14.5px;line-height:32.7px;text-align:center">10</div>
<div style="position:absolute;left:1673.40px;top:1225.8px;width:40.5px;height:30.7px;background:#6f5c7c;color:#f0dcf4;font-size:14.5px;line-height:32.7px;text-align:center">45</div>
<div style="position:absolute;left:1673.40px;top:1257.5px;width:40.5px;height:30.7px;background:#6f5c7c;color:#f0dcf4;font-size:14.5px;line-height:32.7px;text-align:center">54</div>
<div style="position:absolute;left:1673.1px;top:1256.5px;width:42px;height:32.7px;border:2px solid #f8f8f8;box-sizing:border-box"></div>
<div style="position:absolute;left:1673.40px;top:1289.2px;width:40.5px;height:30.7px;background:#6f5c7c;color:#f0dcf4;font-size:14.5px;line-height:32.7px;text-align:center">46</div>
<div style="position:absolute;left:1673.1px;top:1288.2px;width:42px;height:32.7px;border:2px solid #f080f0;box-sizing:border-box"></div>
<div style="position:absolute;left:1673.40px;top:1320.9px;width:40.5px;height:30.7px;background:#686868;color:#f4f4f4;font-size:14.5px;line-height:32.7px;text-align:center">19</div>
<div style="position:absolute;left:1673.40px;top:1352.7px;width:40.5px;height:30.7px;background:#686868;color:#f4f4f4;font-size:14.5px;line-height:32.7px;text-align:center">4</div>
<div style="position:absolute;left:1669.1px;top:1224.0px;width:47px;height:1.3px;background:#9432cc"></div>
<div style="position:absolute;left:1669.1px;top:1319.1px;width:47px;height:1.3px;background:#9432cc"></div>
<div style="position:absolute;left:1669.6px;top:1209px;width:1.2px;height:172px;background:#d8c8e0"></div>
<div style="position:absolute;left:1668.6px;top:1304px;width:3px;height:30px;background:#d4d0d4"></div>
<div style="position:absolute;left:1669.6px;top:1305px;width:1px;height:28px;background:#40c040"></div>
<div style="position:absolute;left:1674.1px;top:1395.6px;width:40px;height:20px;line-height:20px;text-align:center;font-size:16px;color:#f07272">-12</div>
<div style="position:absolute;left:1717.15px;top:1097.9px;width:47px;height:158.6px;background:#2e1f3c"></div>
<div style="position:absolute;left:1721.15px;top:1066.2px;width:42px;height:254.8px;background:#111"></div>
<div style="position:absolute;left:1721.45px;top:1067.2px;width:40.5px;height:30.7px;background:#686868;color:#f4f4f4;font-size:14.5px;line-height:32.7px;text-align:center">14</div>
<div style="position:absolute;left:1721.45px;top:1098.9px;width:40.5px;height:30.7px;background:#6f5c7c;color:#f0dcf4;font-size:14.5px;line-height:32.7px;text-align:center">23</div>
<div style="position:absolute;left:1721.45px;top:1130.6px;width:40.5px;height:30.7px;background:#6f5c7c;color:#f0dcf4;font-size:14.5px;line-height:32.7px;text-align:center">67</div>
<div style="position:absolute;left:1721.15px;top:1129.6px;width:42px;height:32.7px;border:2px solid #f8f8f8;box-sizing:border-box"></div>
<div style="position:absolute;left:1721.45px;top:1162.3px;width:40.5px;height:30.7px;background:#6f5c7c;color:#f0dcf4;font-size:14.5px;line-height:32.7px;text-align:center">24</div>
<div style="position:absolute;left:1721.45px;top:1194.1px;width:40.5px;height:30.7px;background:#6f5c7c;color:#f0dcf4;font-size:14.5px;line-height:32.7px;text-align:center">30</div>
<div style="position:absolute;left:1721.45px;top:1225.8px;width:40.5px;height:30.7px;background:#6f5c7c;color:#f0dcf4;font-size:14.5px;line-height:32.7px;text-align:center">31</div>
<div style="position:absolute;left:1721.45px;top:1257.5px;width:40.5px;height:30.7px;background:#686868;color:#f4f4f4;font-size:14.5px;line-height:32.7px;text-align:center">37</div>
<div style="position:absolute;left:1721.45px;top:1289.2px;width:40.5px;height:30.7px;background:#686868;color:#f4f4f4;font-size:14.5px;line-height:32.7px;text-align:center">27</div>
<div style="position:absolute;left:1717.15px;top:1097.1px;width:47px;height:1.3px;background:#9432cc"></div>
<div style="position:absolute;left:1717.15px;top:1255.7px;width:47px;height:1.3px;background:#9432cc"></div>
<div style="position:absolute;left:1717.65px;top:1083px;width:1.2px;height:219px;background:#d8c8e0"></div>
<div style="position:absolute;left:1716.65px;top:1143px;width:3px;height:159px;background:#d4d0d4"></div>
<div style="position:absolute;left:1717.65px;top:1144px;width:1px;height:157px;background:#40c040"></div>
<div style="position:absolute;left:1722.15px;top:1332.1px;width:40px;height:20px;line-height:20px;text-align:center;font-size:16px;color:#f07272">-46</div>
<div style="position:absolute;left:1765.2px;top:1034.5px;width:47px;height:158.6px;background:#2e1f3c"></div>
<div style="position:absolute;left:1769.2px;top:971.0px;width:42px;height:254.8px;background:#111"></div>
<div style="position:absolute;left:1769.50px;top:972.0px;width:40.5px;height:30.7px;background:#686868;color:#f4f4f4;font-size:14.5px;line-height:32.7px;text-align:center">4</div>
<div style="position:absolute;left:1769.50px;top:1003.7px;width:40.5px;height:30.7px;background:#686868;color:#f4f4f4;font-size:14.5px;line-height:32.7px;text-align:center">21</div>
<div style="position:absolute;left:1769.50px;top:1035.5px;width:40.5px;height:30.7px;background:#6f5c7c;color:#f0dcf4;font-size:14.5px;line-height:32.7px;text-align:center">38</div>
<div style="position:absolute;left:1769.50px;top:1067.2px;width:40.5px;height:30.7px;background:#6f5c7c;color:#f0dcf4;font-size:14.5px;line-height:32.7px;text-align:center">23</div>
<div style="position:absolute;left:1769.50px;top:1098.9px;width:40.5px;height:30.7px;background:#6f5c7c;color:#f0dcf4;font-size:14.5px;line-height:32.7px;text-align:center">50</div>
<div style="position:absolute;left:1769.2px;top:1097.9px;width:42px;height:32.7px;border:2px solid #f8f8f8;box-sizing:border-box"></div>
<div style="position:absolute;left:1769.50px;top:1130.6px;width:40.5px;height:30.7px;background:#6f5c7c;color:#f0dcf4;font-size:14.5px;line-height:32.7px;text-align:center">41</div>
<div style="position:absolute;left:1769.50px;top:1162.3px;width:40.5px;height:30.7px;background:#6f5c7c;color:#f0dcf4;font-size:14.5px;line-height:32.7px;text-align:center">30</div>
<div style="position:absolute;left:1769.50px;top:1194.1px;width:40.5px;height:30.7px;background:#686868;color:#f4f4f4;font-size:14.5px;line-height:32.7px;text-align:center">14</div>
<div style="position:absolute;left:1765.2px;top:1033.7px;width:47px;height:1.3px;background:#9432cc"></div>
<div style="position:absolute;left:1765.2px;top:1192.3px;width:47px;height:1.3px;background:#9432cc"></div>
<div style="position:absolute;left:1765.7px;top:988px;width:1.2px;height:220px;background:#d8c8e0"></div>
<div style="position:absolute;left:1764.7px;top:1019px;width:3px;height:124px;background:#d4d0d4"></div>
<div style="position:absolute;left:1765.7px;top:1020px;width:1px;height:122px;background:#40c040"></div>
<div style="position:absolute;left:1770.2px;top:1237.0px;width:40px;height:20px;line-height:20px;text-align:center;font-size:16px;color:#f07272">-11</div>
<div style="position:absolute;left:1813.25px;top:1034.5px;width:47px;height:95.2px;background:#2e1f3c"></div>
<div style="position:absolute;left:1817.25px;top:875.9px;width:42px;height:254.8px;background:#111"></div>
<div style="position:absolute;left:1817.55px;top:876.9px;width:40.5px;height:30.7px;background:#686868;color:#f4f4f4;font-size:14.5px;line-height:32.7px;text-align:center">3</div>
<div style="position:absolute;left:1817.55px;top:908.6px;width:40.5px;height:30.7px;background:#686868;color:#f4f4f4;font-size:14.5px;line-height:32.7px;text-align:center">22</div>
<div style="position:absolute;left:1817.55px;top:940.3px;width:40.5px;height:30.7px;background:#686868;color:#f4f4f4;font-size:14.5px;line-height:32.7px;text-align:center">44</div>
<div style="position:absolute;left:1817.55px;top:972.0px;width:40.5px;height:30.7px;background:#686868;color:#f4f4f4;font-size:14.5px;line-height:32.7px;text-align:center">64</div>
<div style="position:absolute;left:1817.55px;top:1003.7px;width:40.5px;height:30.7px;background:#686868;color:#f4f4f4;font-size:14.5px;line-height:32.7px;text-align:center">35</div>
<div style="position:absolute;left:1817.55px;top:1035.5px;width:40.5px;height:30.7px;background:#6f5c7c;color:#f0dcf4;font-size:14.5px;line-height:32.7px;text-align:center">66</div>
<div style="position:absolute;left:1817.55px;top:1067.2px;width:40.5px;height:30.7px;background:#6f5c7c;color:#f0dcf4;font-size:14.5px;line-height:32.7px;text-align:center">78</div>
<div style="position:absolute;left:1817.55px;top:1098.9px;width:40.5px;height:30.7px;background:#ecb030;color:#111;font-size:11px;line-height:32.7px;text-align:center">219</div>
<div style="position:absolute;left:1817.25px;top:1097.9px;width:42px;height:32.7px;border:2px solid #f8f8f8;box-sizing:border-box"></div>
<div style="position:absolute;left:1819.25px;top:1099.9px;width:38px;height:28.7px;border:2px solid #f070f0;box-sizing:border-box"></div>
<div style="position:absolute;left:1813.25px;top:1033.7px;width:47px;height:1.3px;background:#9432cc"></div>
<div style="position:absolute;left:1813.25px;top:1128.8px;width:47px;height:1.3px;background:#9432cc"></div>
<div style="position:absolute;left:1813.75px;top:892px;width:1.2px;height:93px;background:#d8c8e0"></div>
<div style="position:absolute;left:1818.25px;top:1141.8px;width:40px;height:20px;line-height:20px;text-align:center;font-size:16px;color:#f07272">-193</div>
<div style="position:absolute;left:1861.3px;top:1097.9px;width:47px;height:158.6px;background:#2e1f3c"></div>
<div style="position:absolute;left:1865.3px;top:939.3px;width:42px;height:349.9px;background:#111"></div>
<div style="position:absolute;left:1865.60px;top:940.3px;width:40.5px;height:30.7px;background:#686868;color:#f4f4f4;font-size:14.5px;line-height:32.7px;text-align:center">2</div>
<div style="position:absolute;left:1865.60px;top:972.0px;width:40.5px;height:30.7px;background:#686868;color:#f4f4f4;font-size:14.5px;line-height:32.7px;text-align:center">9</div>
<div style="position:absolute;left:1865.60px;top:1003.7px;width:40.5px;height:30.7px;background:#686868;color:#f4f4f4;font-size:14.5px;line-height:32.7px;text-align:center">29</div>
<div style="position:absolute;left:1865.60px;top:1035.5px;width:40.5px;height:30.7px;background:#686868;color:#f4f4f4;font-size:14.5px;line-height:32.7px;text-align:center">11</div>
<div style="position:absolute;left:1865.60px;top:1067.2px;width:40.5px;height:30.7px;background:#686868;color:#f4f4f4;font-size:14.5px;line-height:32.7px;text-align:center">30</div>
<div style="position:absolute;left:1865.60px;top:1098.9px;width:40.5px;height:30.7px;background:#6f5c7c;color:#f0dcf4;font-size:14.5px;line-height:32.7px;text-align:center">37</div>
<div style="position:absolute;left:1865.60px;top:1130.6px;width:40.5px;height:30.7px;background:#6f5c7c;color:#f0dcf4;font-size:14.5px;line-height:32.7px;text-align:center">46</div>
<div style="position:absolute;left:1865.60px;top:1162.3px;width:40.5px;height:30.7px;background:#6f5c7c;color:#f0dcf4;font-size:14.5px;line-height:32.7px;text-align:center">35</div>
<div style="position:absolute;left:1865.60px;top:1194.1px;width:40.5px;height:30.7px;background:#6f5c7c;color:#f0dcf4;font-size:14.5px;line-height:32.7px;text-align:center">52</div>
<div style="position:absolute;left:1865.3px;top:1193.1px;width:42px;height:32.7px;border:2px solid #f8f8f8;box-sizing:border-box"></div>
<div style="position:absolute;left:1865.60px;top:1225.8px;width:40.5px;height:30.7px;background:#6f5c7c;color:#f0dcf4;font-size:14.5px;line-height:32.7px;text-align:center">35</div>
<div style="position:absolute;left:1865.60px;top:1257.5px;width:40.5px;height:30.7px;background:#686868;color:#f4f4f4;font-size:14.5px;line-height:32.7px;text-align:center">26</div>
<div style="position:absolute;left:1861.3px;top:1097.1px;width:47px;height:1.3px;background:#9432cc"></div>
<div style="position:absolute;left:1861.3px;top:1255.7px;width:47px;height:1.3px;background:#9432cc"></div>
<div style="position:absolute;left:1861.8px;top:954px;width:1.2px;height:318px;background:#d8c8e0"></div>
<div style="position:absolute;left:1860.8px;top:987px;width:3px;height:221px;background:#d4d0d4"></div>
<div style="position:absolute;left:1861.8px;top:988px;width:1px;height:219px;background:#f02828"></div>
<div style="position:absolute;left:1866.3px;top:1300.4px;width:40px;height:20px;line-height:20px;text-align:center;font-size:16px;color:#f07272">-56</div>
<div style="position:absolute;left:1909.35px;top:1256.5px;width:47px;height:126.9px;background:#2e1f3c"></div>
<div style="position:absolute;left:1913.35px;top:1097.9px;width:42px;height:318.2px;background:#111"></div>
<div style="position:absolute;left:1913.65px;top:1098.9px;width:40.5px;height:30.7px;background:#686868;color:#f4f4f4;font-size:14.5px;line-height:32.7px;text-align:center">2</div>
<div style="position:absolute;left:1913.65px;top:1130.6px;width:40.5px;height:30.7px;background:#686868;color:#f4f4f4;font-size:14.5px;line-height:32.7px;text-align:center">32</div>
<div style="position:absolute;left:1913.65px;top:1162.3px;width:40.5px;height:30.7px;background:#686868;color:#f4f4f4;font-size:14.5px;line-height:32.7px;text-align:center">19</div>
<div style="position:absolute;left:1913.65px;top:1194.1px;width:40.5px;height:30.7px;background:#686868;color:#f4f4f4;font-size:14.5px;line-height:32.7px;text-align:center">18</div>
<div style="position:absolute;left:1913.65px;top:1225.8px;width:40.5px;height:30.7px;background:#686868;color:#f4f4f4;font-size:14.5px;line-height:32.7px;text-align:center">13</div>
<div style="position:absolute;left:1913.65px;top:1257.5px;width:40.5px;height:30.7px;background:#6f5c7c;color:#f0dcf4;font-size:14.5px;line-height:32.7px;text-align:center">38</div>
<div style="position:absolute;left:1913.65px;top:1289.2px;width:40.5px;height:30.7px;background:#6f5c7c;color:#f0dcf4;font-size:14.5px;line-height:32.7px;text-align:center">76</div>
<div style="position:absolute;left:1913.35px;top:1288.2px;width:42px;height:32.7px;border:2px solid #f8f8f8;box-sizing:border-box"></div>
<div style="position:absolute;left:1913.65px;top:1320.9px;width:40.5px;height:30.7px;background:#6f5c7c;color:#f0dcf4;font-size:14.5px;line-height:32.7px;text-align:center">54</div>
<div style="position:absolute;left:1913.65px;top:1352.7px;width:40.5px;height:30.7px;background:#6f5c7c;color:#f0dcf4;font-size:14.5px;line-height:32.7px;text-align:center">20</div>
<div style="position:absolute;left:1913.65px;top:1384.4px;width:40.5px;height:30.7px;background:#686868;color:#f4f4f4;font-size:14.5px;line-height:32.7px;text-align:center">2</div>
<div style="position:absolute;left:1909.35px;top:1255.7px;width:47px;height:1.3px;background:#9432cc"></div>
<div style="position:absolute;left:1909.35px;top:1382.6px;width:47px;height:1.3px;background:#9432cc"></div>
<div style="position:absolute;left:1909.85px;top:1114px;width:1.2px;height:284px;background:#d8c8e0"></div>
<div style="position:absolute;left:1908.85px;top:1176px;width:3px;height:32px;background:#d4d0d4"></div>
<div style="position:absolute;left:1909.85px;top:1177px;width:1px;height:30px;background:#40c040"></div>
<div style="position:absolute;left:1914.35px;top:1072.0px;width:40px;height:20px;line-height:20px;text-align:center;font-size:16px;color:#22e022">91</div>
<div style="position:absolute;left:1957.4px;top:1193.1px;width:47px;height:95.2px;background:#2e1f3c"></div>
<div style="position:absolute;left:1961.4px;top:1129.6px;width:42px;height:191.3px;background:#111"></div>
<div style="position:absolute;left:1961.70px;top:1130.6px;width:40.5px;height:30.7px;background:#686868;color:#f4f4f4;font-size:14.5px;line-height:32.7px;text-align:center">15</div>
<div style="position:absolute;left:1961.70px;top:1162.3px;width:40.5px;height:30.7px;background:#686868;color:#f4f4f4;font-size:14.5px;line-height:32.7px;text-align:center">30</div>
<div style="position:absolute;left:1961.70px;top:1194.1px;width:40.5px;height:30.7px;background:#6f5c7c;color:#f0dcf4;font-size:14.5px;line-height:32.7px;text-align:center">28</div>
<div style="position:absolute;left:1961.70px;top:1225.8px;width:40.5px;height:30.7px;background:#6f5c7c;color:#f0dcf4;font-size:14.5px;line-height:32.7px;text-align:center">21</div>
<div style="position:absolute;left:1961.70px;top:1257.5px;width:40.5px;height:30.7px;background:#6f5c7c;color:#f0dcf4;font-size:14.5px;line-height:32.7px;text-align:center">79</div>
<div style="position:absolute;left:1961.4px;top:1256.5px;width:42px;height:32.7px;border:2px solid #f8f8f8;box-sizing:border-box"></div>
<div style="position:absolute;left:1961.70px;top:1289.2px;width:40.5px;height:30.7px;background:#686868;color:#f4f4f4;font-size:14.5px;line-height:32.7px;text-align:center">12</div>
<div style="position:absolute;left:1957.4px;top:1192.3px;width:47px;height:1.3px;background:#9432cc"></div>
<div style="position:absolute;left:1957.4px;top:1287.4px;width:47px;height:1.3px;background:#9432cc"></div>
<div style="position:absolute;left:1957.9px;top:1145px;width:1.2px;height:159px;background:#d8c8e0"></div>
<div style="position:absolute;left:1956.9px;top:1176px;width:3px;height:32px;background:#d4d0d4"></div>
<div style="position:absolute;left:1957.9px;top:1177px;width:1px;height:30px;background:#40c040"></div>
<div style="position:absolute;left:1962.4px;top:1332.1px;width:40px;height:20px;line-height:20px;text-align:center;font-size:16px;color:#f07272">-47</div>
<div style="position:absolute;left:2005.45px;top:1161.3px;width:47px;height:126.9px;background:#2e1f3c"></div>
<div style="position:absolute;left:2009.45px;top:1034.5px;width:42px;height:413.4px;background:#111"></div>
<div style="position:absolute;left:2009.75px;top:1035.5px;width:40.5px;height:30.7px;background:#686868;color:#f4f4f4;font-size:14.5px;line-height:32.7px;text-align:center">2</div>
<div style="position:absolute;left:2009.75px;top:1067.2px;width:40.5px;height:30.7px;background:#686868;color:#f4f4f4;font-size:14.5px;line-height:32.7px;text-align:center">34</div>
<div style="position:absolute;left:2009.75px;top:1098.9px;width:40.5px;height:30.7px;background:#686868;color:#f4f4f4;font-size:14.5px;line-height:32.7px;text-align:center">23</div>
<div style="position:absolute;left:2009.75px;top:1130.6px;width:40.5px;height:30.7px;background:#686868;color:#f4f4f4;font-size:14.5px;line-height:32.7px;text-align:center">24</div>
<div style="position:absolute;left:2009.75px;top:1162.3px;width:40.5px;height:30.7px;background:#6f5c7c;color:#f0dcf4;font-size:14.5px;line-height:32.7px;text-align:center">49</div>
<div style="position:absolute;left:2009.75px;top:1194.1px;width:40.5px;height:30.7px;background:#6f5c7c;color:#f0dcf4;font-size:14.5px;line-height:32.7px;text-align:center">73</div>
<div style="position:absolute;left:2009.75px;top:1225.8px;width:40.5px;height:30.7px;background:#6f5c7c;color:#f0dcf4;font-size:14.5px;line-height:32.7px;text-align:center">57</div>
<div style="position:absolute;left:2009.75px;top:1257.5px;width:40.5px;height:30.7px;background:#6f5c7c;color:#f0dcf4;font-size:14.5px;line-height:32.7px;text-align:center">79</div>
<div style="position:absolute;left:2009.45px;top:1256.5px;width:42px;height:32.7px;border:2px solid #f080f0;box-sizing:border-box"></div>
<div style="position:absolute;left:2009.75px;top:1289.2px;width:40.5px;height:30.7px;background:#686868;color:#f4f4f4;font-size:14.5px;line-height:32.7px;text-align:center">22</div>
<div style="position:absolute;left:2009.75px;top:1320.9px;width:40.5px;height:30.7px;background:#686868;color:#f4f4f4;font-size:14.5px;line-height:32.7px;text-align:center">12</div>
<div style="position:absolute;left:2009.75px;top:1352.7px;width:40.5px;height:30.7px;background:#686868;color:#f4f4f4;font-size:14.5px;line-height:32.7px;text-align:center">15</div>
<div style="position:absolute;left:2009.75px;top:1384.4px;width:40.5px;height:30.7px;background:#686868;color:#f4f4f4;font-size:14.5px;line-height:32.7px;text-align:center">10</div>
<div style="position:absolute;left:2009.75px;top:1416.1px;width:40.5px;height:30.7px;background:#686868;color:#f4f4f4;font-size:14.5px;line-height:32.7px;text-align:center">8</div>
<div style="position:absolute;left:2005.45px;top:1160.5px;width:47px;height:1.3px;background:#9432cc"></div>
<div style="position:absolute;left:2005.45px;top:1287.4px;width:47px;height:1.3px;background:#9432cc"></div>
<div style="position:absolute;left:2005.95px;top:1050px;width:1.2px;height:382px;background:#d8c8e0"></div>
<div style="position:absolute;left:2004.95px;top:1080px;width:3px;height:65px;background:#d4d0d4"></div>
<div style="position:absolute;left:2005.95px;top:1081px;width:1px;height:63px;background:#40c040"></div>
<div style="position:absolute;left:2010.45px;top:1008.6px;width:40px;height:20px;line-height:20px;text-align:center;font-size:16px;color:#22e022">11</div>
<div style="position:absolute;left:2053.5px;top:1034.5px;width:47px;height:95.2px;background:#2e1f3c"></div>
<div style="position:absolute;left:2057.5px;top:1034.5px;width:42px;height:127.9px;background:#111"></div>
<div style="position:absolute;left:2057.80px;top:1035.5px;width:40.5px;height:30.7px;background:#6f5c7c;color:#f0dcf4;font-size:14.5px;line-height:32.7px;text-align:center">5</div>
<div style="position:absolute;left:2057.80px;top:1067.2px;width:40.5px;height:30.7px;background:#6f5c7c;color:#f0dcf4;font-size:14.5px;line-height:32.7px;text-align:center">8</div>
<div style="position:absolute;left:2057.5px;top:1066.2px;width:42px;height:32.7px;border:2px solid #f8f8f8;box-sizing:border-box"></div>
<div style="position:absolute;left:2057.80px;top:1098.9px;width:40.5px;height:30.7px;background:#6f5c7c;color:#f0dcf4;font-size:14.5px;line-height:32.7px;text-align:center">3</div>
<div style="position:absolute;left:2057.80px;top:1130.6px;width:40.5px;height:30.7px;background:#686868;color:#f4f4f4;font-size:14.5px;line-height:32.7px;text-align:center">1</div>
<div style="position:absolute;left:2053.5px;top:1033.7px;width:47px;height:1.3px;background:#9432cc"></div>
<div style="position:absolute;left:2053.5px;top:1128.8px;width:47px;height:1.3px;background:#9432cc"></div>
<div style="position:absolute;left:2054.0px;top:1050px;width:1.2px;height:93px;background:#d8c8e0"></div>
<div style="position:absolute;left:1718px;top:1116.5px;width:99px;height:1.3px;background:#f08000"></div>
<div style="position:absolute;left:1758px;top:1111.7px;width:59px;height:1.3px;background:#f0f000"></div>
<div style="position:absolute;left:1697px;top:1106px;width:22px;height:22px;border:1.5px solid #f08000;border-radius:50%;box-sizing:border-box;background:#1e1e1e;color:#f08000;font-size:10.5px;line-height:19px;text-align:center">73.0</div>
<div style="position:absolute;left:1727.5px;top:1104.3px;width:30.5px;height:16.6px;border:1.5px solid #f0f000;border-radius:50%;box-sizing:border-box;background:#4a3a58;color:#f0f000;font-size:10.5px;line-height:14px;text-align:center">5.34</div>
<div style="position:absolute;left:1787px;top:1106px;width:30px;height:15.5px;border:1px solid #f4c0c0;box-sizing:border-box;background:#2a2030;color:#f4c4c4;font-size:12px;line-height:13.5px;text-align:center">159#</div>
<div style="position:absolute;left:-8.65px;top:1552.2px;width:41px;height:23.8px;background:#ff4800"></div>
<div style="position:absolute;left:-8.65px;top:1532.1px;width:41px;height:20.1px;background:#00ff80"></div>
<div style="position:absolute;left:-7.65px;top:1531.1px;width:40px;height:16px;line-height:16px;text-align:center;font-size:12px;color:#111">88</div>
<div style="position:absolute;left:-7.65px;top:1551.2px;width:40px;height:16px;line-height:16px;text-align:center;font-size:12px;color:#111">104</div>
<div style="position:absolute;left:39.4px;top:1552.0px;width:41px;height:24.0px;background:#ff4800"></div>
<div style="position:absolute;left:39.4px;top:1527.8px;width:41px;height:24.2px;background:#00ff80"></div>
<div style="position:absolute;left:40.4px;top:1526.8px;width:40px;height:16px;line-height:16px;text-align:center;font-size:12px;color:#111">106</div>
<div style="position:absolute;left:40.4px;top:1551.0px;width:40px;height:16px;line-height:16px;text-align:center;font-size:12px;color:#111">105</div>
<div style="position:absolute;left:87.45px;top:1525.5px;width:41px;height:50.5px;background:#ff4800"></div>
<div style="position:absolute;left:87.45px;top:1489.9px;width:41px;height:35.6px;background:#00ff80"></div>
<div style="position:absolute;left:88.45px;top:1488.9px;width:40px;height:16px;line-height:16px;text-align:center;font-size:12px;color:#111">156</div>
<div style="position:absolute;left:88.45px;top:1524.5px;width:40px;height:16px;line-height:16px;text-align:center;font-size:12px;color:#111">221</div>
<div style="position:absolute;left:135.5px;top:1552.2px;width:41px;height:23.8px;background:#ff4800"></div>
<div style="position:absolute;left:135.5px;top:1532.8px;width:41px;height:19.4px;background:#00ff80"></div>
<div style="position:absolute;left:136.5px;top:1531.8px;width:40px;height:16px;line-height:16px;text-align:center;font-size:12px;color:#111">85</div>
<div style="position:absolute;left:136.5px;top:1551.2px;width:40px;height:16px;line-height:16px;text-align:center;font-size:12px;color:#111">104</div>
<div style="position:absolute;left:183.55px;top:1529.8px;width:41px;height:46.2px;background:#ff4800"></div>
<div style="position:absolute;left:183.55px;top:1442.1px;width:41px;height:87.7px;background:#00ff80"></div>
<div style="position:absolute;left:184.55px;top:1441.1px;width:40px;height:16px;line-height:16px;text-align:center;font-size:12px;color:#111">384</div>
<div style="position:absolute;left:184.55px;top:1528.8px;width:40px;height:16px;line-height:16px;text-align:center;font-size:12px;color:#111">202</div>
<div style="position:absolute;left:231.6px;top:1530.5px;width:41px;height:45.5px;background:#ff4800"></div>
<div style="position:absolute;left:231.6px;top:1489.4px;width:41px;height:41.1px;background:#00ff80"></div>
<div style="position:absolute;left:232.6px;top:1488.4px;width:40px;height:16px;line-height:16px;text-align:center;font-size:12px;color:#111">180</div>
<div style="position:absolute;left:232.6px;top:1529.5px;width:40px;height:16px;line-height:16px;text-align:center;font-size:12px;color:#111">199</div>
<div style="position:absolute;left:279.65px;top:1527.8px;width:41px;height:48.2px;background:#ff4800"></div>
<div style="position:absolute;left:279.65px;top:1484.4px;width:41px;height:43.4px;background:#00ff80"></div>
<div style="position:absolute;left:280.65px;top:1483.4px;width:40px;height:16px;line-height:16px;text-align:center;font-size:12px;color:#111">190</div>
<div style="position:absolute;left:280.65px;top:1526.8px;width:40px;height:16px;line-height:16px;text-align:center;font-size:12px;color:#111">211</div>
<div style="position:absolute;left:327.7px;top:1548.1px;width:41px;height:27.9px;background:#ff4800"></div>
<div style="position:absolute;left:327.7px;top:1515.9px;width:41px;height:32.2px;background:#00ff80"></div>
<div style="position:absolute;left:328.7px;top:1514.9px;width:40px;height:16px;line-height:16px;text-align:center;font-size:12px;color:#111">141</div>
<div style="position:absolute;left:328.7px;top:1547.1px;width:40px;height:16px;line-height:16px;text-align:center;font-size:12px;color:#111">122</div>
<div style="position:absolute;left:375.75px;top:1554.5px;width:41px;height:21.5px;background:#ff4800"></div>
<div style="position:absolute;left:375.75px;top:1529.2px;width:41px;height:25.4px;background:#00ff80"></div>
<div style="position:absolute;left:376.75px;top:1528.2px;width:40px;height:16px;line-height:16px;text-align:center;font-size:12px;color:#111">111</div>
<div style="position:absolute;left:376.75px;top:1553.5px;width:40px;height:16px;line-height:16px;text-align:center;font-size:12px;color:#111">94</div>
<div style="position:absolute;left:423.8px;top:1529.4px;width:41px;height:46.6px;background:#ff4800"></div>
<div style="position:absolute;left:423.8px;top:1482.3px;width:41px;height:47.1px;background:#00ff80"></div>
<div style="position:absolute;left:424.8px;top:1481.3px;width:40px;height:16px;line-height:16px;text-align:center;font-size:12px;color:#111">206</div>
<div style="position:absolute;left:424.8px;top:1528.4px;width:40px;height:16px;line-height:16px;text-align:center;font-size:12px;color:#111">204</div>
<div style="position:absolute;left:471.85px;top:1537.4px;width:41px;height:38.6px;background:#ff4800"></div>
<div style="position:absolute;left:471.85px;top:1503.1px;width:41px;height:34.3px;background:#00ff80"></div>
<div style="position:absolute;left:472.85px;top:1502.1px;width:40px;height:16px;line-height:16px;text-align:center;font-size:12px;color:#111">150</div>
<div style="position:absolute;left:472.85px;top:1536.4px;width:40px;height:16px;line-height:16px;text-align:center;font-size:12px;color:#111">169</div>
<div style="position:absolute;left:519.9px;top:1518.6px;width:41px;height:57.4px;background:#ff4800"></div>
<div style="position:absolute;left:519.9px;top:1487.3px;width:41px;height:31.3px;background:#00ff80"></div>
<div style="position:absolute;left:520.9px;top:1486.3px;width:40px;height:16px;line-height:16px;text-align:center;font-size:12px;color:#111">137</div>
<div style="position:absolute;left:520.9px;top:1517.6px;width:40px;height:16px;line-height:16px;text-align:center;font-size:12px;color:#111">251</div>
<div style="position:absolute;left:567.95px;top:1549.5px;width:41px;height:26.5px;background:#ff4800"></div>
<div style="position:absolute;left:567.95px;top:1520.0px;width:41px;height:29.5px;background:#00ff80"></div>
<div style="position:absolute;left:568.95px;top:1519.0px;width:40px;height:16px;line-height:16px;text-align:center;font-size:12px;color:#111">129</div>
<div style="position:absolute;left:568.95px;top:1548.5px;width:40px;height:16px;line-height:16px;text-align:center;font-size:12px;color:#111">116</div>
<div style="position:absolute;left:616.0px;top:1545.2px;width:41px;height:30.8px;background:#ff4800"></div>
<div style="position:absolute;left:616.0px;top:1522.8px;width:41px;height:22.4px;background:#00ff80"></div>
<div style="position:absolute;left:617.0px;top:1521.8px;width:40px;height:16px;line-height:16px;text-align:center;font-size:12px;color:#111">98</div>
<div style="position:absolute;left:617.0px;top:1544.2px;width:40px;height:16px;line-height:16px;text-align:center;font-size:12px;color:#111">135</div>
<div style="position:absolute;left:664.05px;top:1535.8px;width:41px;height:40.2px;background:#ff4800"></div>
<div style="position:absolute;left:664.05px;top:1504.7px;width:41px;height:31.1px;background:#00ff80"></div>
<div style="position:absolute;left:665.05px;top:1503.7px;width:40px;height:16px;line-height:16px;text-align:center;font-size:12px;color:#111">136</div>
<div style="position:absolute;left:665.05px;top:1534.8px;width:40px;height:16px;line-height:16px;text-align:center;font-size:12px;color:#111">176</div>
<div style="position:absolute;left:712.1px;top:1550.0px;width:41px;height:26.0px;background:#ff4800"></div>
<div style="position:absolute;left:712.1px;top:1515.9px;width:41px;height:34.0px;background:#00ff80"></div>
<div style="position:absolute;left:713.1px;top:1514.9px;width:40px;height:16px;line-height:16px;text-align:center;font-size:12px;color:#111">149</div>
<div style="position:absolute;left:713.1px;top:1549.0px;width:40px;height:16px;line-height:16px;text-align:center;font-size:12px;color:#111">114</div>
<div style="position:absolute;left:760.15px;top:1547.0px;width:41px;height:29.0px;background:#ff4800"></div>
<div style="position:absolute;left:760.15px;top:1529.2px;width:41px;height:17.8px;background:#00ff80"></div>
<div style="position:absolute;left:761.15px;top:1528.2px;width:40px;height:16px;line-height:16px;text-align:center;font-size:12px;color:#111">78</div>
<div style="position:absolute;left:761.15px;top:1546.0px;width:40px;height:16px;line-height:16px;text-align:center;font-size:12px;color:#111">127</div>
<div style="position:absolute;left:808.2px;top:1542.9px;width:41px;height:33.1px;background:#ff4800"></div>
<div style="position:absolute;left:808.2px;top:1496.0px;width:41px;height:46.8px;background:#00ff80"></div>
<div style="position:absolute;left:809.2px;top:1495.0px;width:40px;height:16px;line-height:16px;text-align:center;font-size:12px;color:#111">205</div>
<div style="position:absolute;left:809.2px;top:1541.9px;width:40px;height:16px;line-height:16px;text-align:center;font-size:12px;color:#111">145</div>
<div style="position:absolute;left:856.25px;top:1547.0px;width:41px;height:29.0px;background:#ff4800"></div>
<div style="position:absolute;left:856.25px;top:1523.4px;width:41px;height:23.5px;background:#00ff80"></div>
<div style="position:absolute;left:857.25px;top:1522.4px;width:40px;height:16px;line-height:16px;text-align:center;font-size:12px;color:#111">103</div>
<div style="position:absolute;left:857.25px;top:1546.0px;width:40px;height:16px;line-height:16px;text-align:center;font-size:12px;color:#111">127</div>
<div style="position:absolute;left:904.3px;top:1552.0px;width:41px;height:24.0px;background:#ff4800"></div>
<div style="position:absolute;left:904.3px;top:1532.4px;width:41px;height:19.7px;background:#00ff80"></div>
<div style="position:absolute;left:905.3px;top:1531.4px;width:40px;height:16px;line-height:16px;text-align:center;font-size:12px;color:#111">86</div>
<div style="position:absolute;left:905.3px;top:1551.0px;width:40px;height:16px;line-height:16px;text-align:center;font-size:12px;color:#111">105</div>
<div style="position:absolute;left:952.35px;top:1529.6px;width:41px;height:46.4px;background:#ff4800"></div>
<div style="position:absolute;left:952.35px;top:1502.2px;width:41px;height:27.4px;background:#00ff80"></div>
<div style="position:absolute;left:953.35px;top:1501.2px;width:40px;height:16px;line-height:16px;text-align:center;font-size:12px;color:#111">120</div>
<div style="position:absolute;left:953.35px;top:1528.6px;width:40px;height:16px;line-height:16px;text-align:center;font-size:12px;color:#111">203</div>
<div style="position:absolute;left:1000.4px;top:1551.8px;width:41px;height:24.2px;background:#ff4800"></div>
<div style="position:absolute;left:1000.4px;top:1539.2px;width:41px;height:12.6px;background:#00ff80"></div>
<div style="position:absolute;left:1001.4px;top:1538.2px;width:40px;height:16px;line-height:16px;text-align:center;font-size:12px;color:#111">55</div>
<div style="position:absolute;left:1001.4px;top:1550.8px;width:40px;height:16px;line-height:16px;text-align:center;font-size:12px;color:#111">106</div>
<div style="position:absolute;left:1048.45px;top:1543.3px;width:41px;height:32.7px;background:#ff4800"></div>
<div style="position:absolute;left:1048.45px;top:1478.4px;width:41px;height:64.9px;background:#00ff80"></div>
<div style="position:absolute;left:1049.45px;top:1477.4px;width:40px;height:16px;line-height:16px;text-align:center;font-size:12px;color:#111">284</div>
<div style="position:absolute;left:1049.45px;top:1542.3px;width:40px;height:16px;line-height:16px;text-align:center;font-size:12px;color:#111">143</div>
<div style="position:absolute;left:1096.5px;top:1536.2px;width:41px;height:39.8px;background:#ff4800"></div>
<div style="position:absolute;left:1096.5px;top:1498.1px;width:41px;height:38.2px;background:#00ff80"></div>
<div style="position:absolute;left:1097.5px;top:1497.1px;width:40px;height:16px;line-height:16px;text-align:center;font-size:12px;color:#111">167</div>
<div style="position:absolute;left:1097.5px;top:1535.2px;width:40px;height:16px;line-height:16px;text-align:center;font-size:12px;color:#111">174</div>
<div style="position:absolute;left:1144.55px;top:1528.5px;width:41px;height:47.5px;background:#ff4800"></div>
<div style="position:absolute;left:1144.55px;top:1499.7px;width:41px;height:28.8px;background:#00ff80"></div>
<div style="position:absolute;left:1145.55px;top:1498.7px;width:40px;height:16px;line-height:16px;text-align:center;font-size:12px;color:#111">126</div>
<div style="position:absolute;left:1145.55px;top:1527.5px;width:40px;height:16px;line-height:16px;text-align:center;font-size:12px;color:#111">208</div>
<div style="position:absolute;left:1192.6px;top:1548.6px;width:41px;height:27.4px;background:#ff4800"></div>
<div style="position:absolute;left:1192.6px;top:1520.2px;width:41px;height:28.3px;background:#00ff80"></div>
<div style="position:absolute;left:1193.6px;top:1519.2px;width:40px;height:16px;line-height:16px;text-align:center;font-size:12px;color:#111">124</div>
<div style="position:absolute;left:1193.6px;top:1547.6px;width:40px;height:16px;line-height:16px;text-align:center;font-size:12px;color:#111">120</div>
<div style="position:absolute;left:1240.65px;top:1539.9px;width:41px;height:36.1px;background:#ff4800"></div>
<div style="position:absolute;left:1240.65px;top:1505.6px;width:41px;height:34.3px;background:#00ff80"></div>
<div style="position:absolute;left:1241.65px;top:1504.6px;width:40px;height:16px;line-height:16px;text-align:center;font-size:12px;color:#111">150</div>
<div style="position:absolute;left:1241.65px;top:1538.9px;width:40px;height:16px;line-height:16px;text-align:center;font-size:12px;color:#111">158</div>
<div style="position:absolute;left:1288.7px;top:1534.6px;width:41px;height:41.4px;background:#ff4800"></div>
<div style="position:absolute;left:1288.7px;top:1488.0px;width:41px;height:46.6px;background:#00ff80"></div>
<div style="position:absolute;left:1289.7px;top:1487.0px;width:40px;height:16px;line-height:16px;text-align:center;font-size:12px;color:#111">204</div>
<div style="position:absolute;left:1289.7px;top:1533.6px;width:40px;height:16px;line-height:16px;text-align:center;font-size:12px;color:#111">181</div>
<div style="position:absolute;left:1336.75px;top:1482.8px;width:41px;height:93.2px;background:#ff4800"></div>
<div style="position:absolute;left:1336.75px;top:1378.3px;width:41px;height:104.4px;background:#00ff80"></div>
<div style="position:absolute;left:1337.75px;top:1377.3px;width:40px;height:16px;line-height:16px;text-align:center;font-size:12px;color:#111">457</div>
<div style="position:absolute;left:1337.75px;top:1481.8px;width:40px;height:16px;line-height:16px;text-align:center;font-size:12px;color:#111">408</div>
<div style="position:absolute;left:1384.8px;top:1524.8px;width:41px;height:51.2px;background:#ff4800"></div>
<div style="position:absolute;left:1384.8px;top:1462.0px;width:41px;height:62.8px;background:#00ff80"></div>
<div style="position:absolute;left:1385.8px;top:1461.0px;width:40px;height:16px;line-height:16px;text-align:center;font-size:12px;color:#111">275</div>
<div style="position:absolute;left:1385.8px;top:1523.8px;width:40px;height:16px;line-height:16px;text-align:center;font-size:12px;color:#111">224</div>
<div style="position:absolute;left:1432.85px;top:1540.1px;width:41px;height:35.9px;background:#ff4800"></div>
<div style="position:absolute;left:1432.85px;top:1502.7px;width:41px;height:37.5px;background:#00ff80"></div>
<div style="position:absolute;left:1433.85px;top:1501.7px;width:40px;height:16px;line-height:16px;text-align:center;font-size:12px;color:#111">164</div>
<div style="position:absolute;left:1433.85px;top:1539.1px;width:40px;height:16px;line-height:16px;text-align:center;font-size:12px;color:#111">157</div>
<div style="position:absolute;left:1480.9px;top:1544.7px;width:41px;height:31.3px;background:#ff4800"></div>
<div style="position:absolute;left:1480.9px;top:1507.2px;width:41px;height:37.5px;background:#00ff80"></div>
<div style="position:absolute;left:1481.9px;top:1506.2px;width:40px;height:16px;line-height:16px;text-align:center;font-size:12px;color:#111">164</div>
<div style="position:absolute;left:1481.9px;top:1543.7px;width:40px;height:16px;line-height:16px;text-align:center;font-size:12px;color:#111">137</div>
<div style="position:absolute;left:1528.95px;top:1515.0px;width:41px;height:61.0px;background:#ff4800"></div>
<div style="position:absolute;left:1528.95px;top:1449.0px;width:41px;height:66.0px;background:#00ff80"></div>
<div style="position:absolute;left:1529.95px;top:1448.0px;width:40px;height:16px;line-height:16px;text-align:center;font-size:12px;color:#111">289</div>
<div style="position:absolute;left:1529.95px;top:1514.0px;width:40px;height:16px;line-height:16px;text-align:center;font-size:12px;color:#111">267</div>
<div style="position:absolute;left:1577.0px;top:1491.7px;width:41px;height:84.3px;background:#ff4800"></div>
<div style="position:absolute;left:1577.0px;top:1420.8px;width:41px;height:70.8px;background:#00ff80"></div>
<div style="position:absolute;left:1578.0px;top:1419.8px;width:40px;height:16px;line-height:16px;text-align:center;font-size:12px;color:#111">310</div>
<div style="position:absolute;left:1578.0px;top:1490.7px;width:40px;height:16px;line-height:16px;text-align:center;font-size:12px;color:#111">369</div>
<div style="position:absolute;left:1625.05px;top:1556.1px;width:41px;height:19.9px;background:#ff4800"></div>
<div style="position:absolute;left:1625.05px;top:1546.1px;width:41px;height:10.1px;background:#00ff80"></div>
<div style="position:absolute;left:1626.05px;top:1545.1px;width:40px;height:16px;line-height:16px;text-align:center;font-size:12px;color:#111">44</div>
<div style="position:absolute;left:1626.05px;top:1555.1px;width:40px;height:16px;line-height:16px;text-align:center;font-size:12px;color:#111">87</div>
<div style="position:absolute;left:1673.1px;top:1554.3px;width:41px;height:21.7px;background:#ff4800"></div>
<div style="position:absolute;left:1673.1px;top:1535.3px;width:41px;height:19.0px;background:#00ff80"></div>
<div style="position:absolute;left:1674.1px;top:1534.3px;width:40px;height:16px;line-height:16px;text-align:center;font-size:12px;color:#111">83</div>
<div style="position:absolute;left:1674.1px;top:1553.3px;width:40px;height:16px;line-height:16px;text-align:center;font-size:12px;color:#111">95</div>
<div style="position:absolute;left:1721.15px;top:1539.4px;width:41px;height:36.6px;background:#ff4800"></div>
<div style="position:absolute;left:1721.15px;top:1513.4px;width:41px;height:26.0px;background:#00ff80"></div>
<div style="position:absolute;left:1722.15px;top:1512.4px;width:40px;height:16px;line-height:16px;text-align:center;font-size:12px;color:#111">114</div>
<div style="position:absolute;left:1722.15px;top:1538.4px;width:40px;height:16px;line-height:16px;text-align:center;font-size:12px;color:#111">160</div>
<div style="position:absolute;left:1769.2px;top:1549.3px;width:41px;height:26.7px;background:#ff4800"></div>
<div style="position:absolute;left:1769.2px;top:1525.0px;width:41px;height:24.2px;background:#00ff80"></div>
<div style="position:absolute;left:1770.2px;top:1524.0px;width:40px;height:16px;line-height:16px;text-align:center;font-size:12px;color:#111">106</div>
<div style="position:absolute;left:1770.2px;top:1548.3px;width:40px;height:16px;line-height:16px;text-align:center;font-size:12px;color:#111">117</div>
<div style="position:absolute;left:1817.25px;top:1497.6px;width:41px;height:78.4px;background:#ff4800"></div>
<div style="position:absolute;left:1817.25px;top:1463.3px;width:41px;height:34.3px;background:#00ff80"></div>
<div style="position:absolute;left:1818.25px;top:1462.3px;width:40px;height:16px;line-height:16px;text-align:center;font-size:12px;color:#111">150</div>
<div style="position:absolute;left:1818.25px;top:1496.6px;width:40px;height:16px;line-height:16px;text-align:center;font-size:12px;color:#111">343</div>
<div style="position:absolute;left:1865.3px;top:1538.1px;width:41px;height:37.9px;background:#ff4800"></div>
<div style="position:absolute;left:1865.3px;top:1512.9px;width:41px;height:25.1px;background:#00ff80"></div>
<div style="position:absolute;left:1866.3px;top:1511.9px;width:40px;height:16px;line-height:16px;text-align:center;font-size:12px;color:#111">110</div>
<div style="position:absolute;left:1866.3px;top:1537.1px;width:40px;height:16px;line-height:16px;text-align:center;font-size:12px;color:#111">166</div>
<div style="position:absolute;left:1913.35px;top:1556.1px;width:41px;height:19.9px;background:#ff4800"></div>
<div style="position:absolute;left:1913.35px;top:1515.4px;width:41px;height:40.7px;background:#00ff80"></div>
<div style="position:absolute;left:1914.35px;top:1514.4px;width:40px;height:16px;line-height:16px;text-align:center;font-size:12px;color:#111">178</div>
<div style="position:absolute;left:1914.35px;top:1555.1px;width:40px;height:16px;line-height:16px;text-align:center;font-size:12px;color:#111">87</div>
<div style="position:absolute;left:1961.4px;top:1550.2px;width:41px;height:25.8px;background:#ff4800"></div>
<div style="position:absolute;left:1961.4px;top:1535.1px;width:41px;height:15.1px;background:#00ff80"></div>
<div style="position:absolute;left:1962.4px;top:1534.1px;width:40px;height:16px;line-height:16px;text-align:center;font-size:12px;color:#111">66</div>
<div style="position:absolute;left:1962.4px;top:1549.2px;width:40px;height:16px;line-height:16px;text-align:center;font-size:12px;color:#111">113</div>
<div style="position:absolute;left:2009.45px;top:1534.6px;width:41px;height:41.4px;background:#ff4800"></div>
<div style="position:absolute;left:2009.45px;top:1490.8px;width:41px;height:43.9px;background:#00ff80"></div>
<div style="position:absolute;left:2010.45px;top:1489.8px;width:40px;height:16px;line-height:16px;text-align:center;font-size:12px;color:#111">192</div>
<div style="position:absolute;left:2010.45px;top:1533.6px;width:40px;height:16px;line-height:16px;text-align:center;font-size:12px;color:#111">181</div>
<div style="position:absolute;left:2058px;top:1557px;width:5px;height:9px;background:#00ff80"></div>
<div style="position:absolute;left:2058px;top:1566px;width:5px;height:10px;background:#ff4800"></div>
<div style="position:absolute;left:2010px;top:1424px;width:50px;height:15px;background:#00f0f0;color:#111;font-size:12px;line-height:15px;text-align:center">1250</div>
<svg style="position:absolute;left:0;top:0" width="2165" height="1641"><polyline points="10,1388 40,1388 88,1396 135,1398 184,1376 229,1379 279,1381 326,1378 372,1377 424,1377 472,1379 520,1392 567,1391 612,1394 663,1400 712,1395 761,1401 809,1394 854,1397 903,1400 953,1409 1001,1415 1049,1399 1095,1400 1144,1409 1192,1409 1240,1410 1288,1407 1336,1401 1384,1395 1430,1393 1478,1391 1527,1389 1573,1394 1623,1401 1675,1403 1723,1406 1771,1409 1817,1431 1866,1438 1914,1428 1962,1433 2008,1431" fill="none" stroke="#16d4e4" stroke-width="1.8"/></svg>
<div style="position:absolute;left:97.45px;top:743.4px;width:22px;height:22px;border:1.5px solid #3cbcbc;border-radius:50%;box-sizing:border-box;color:#48d0d0;font-size:10px;font-weight:bold;line-height:19px;text-align:center">12</div>
<div style="position:absolute;left:529.9px;top:1380.3px;width:22px;height:22px;border:1.5px solid #cc66d8;border-radius:50%;box-sizing:border-box;color:#ec7cf4;font-size:10px;font-weight:bold;line-height:19px;text-align:center">13</div>
<div style="position:absolute;left:1298.7px;top:1048.8px;width:22px;height:22px;border:1.5px solid #cc66d8;border-radius:50%;box-sizing:border-box;color:#ec7cf4;font-size:10px;font-weight:bold;line-height:19px;text-align:center">20</div>
<div style="position:absolute;left:1346.75px;top:1175.7px;width:22px;height:22px;border:1.5px solid #cc66d8;border-radius:50%;box-sizing:border-box;color:#ec7cf4;font-size:10px;font-weight:bold;line-height:19px;text-align:center">11</div>
<div style="position:absolute;left:1346.75px;top:1200.5px;width:22px;height:22px;border:1.5px solid #cc66d8;border-radius:50%;box-sizing:border-box;color:#ec7cf4;font-size:10px;font-weight:bold;line-height:19px;text-align:center">39</div>
<div style="position:absolute;left:1587.0px;top:1099.6px;width:22px;height:22px;border:1.5px solid #3cbcbc;border-radius:50%;box-sizing:border-box;color:#48d0d0;font-size:10px;font-weight:bold;line-height:19px;text-align:center">13</div>
<div style="position:absolute;left:1587.0px;top:1123.4px;width:22px;height:22px;border:1.5px solid #3cbcbc;border-radius:50%;box-sizing:border-box;color:#48d0d0;font-size:10px;font-weight:bold;line-height:19px;text-align:center">11</div>
<div style="position:absolute;left:1683.1px;top:1412.0px;width:22px;height:22px;border:1.5px solid #cc66d8;border-radius:50%;box-sizing:border-box;color:#ec7cf4;font-size:10px;font-weight:bold;line-height:19px;text-align:center">15</div>
<div style="position:absolute;left:1827.25px;top:1158.3px;width:22px;height:22px;border:1.5px solid #cc66d8;border-radius:50%;box-sizing:border-box;color:#ec7cf4;font-size:10px;font-weight:bold;line-height:19px;text-align:center">58</div>
<div style="position:absolute;left:1827.25px;top:1182.1px;width:22px;height:22px;border:1.5px solid #cc66d8;border-radius:50%;box-sizing:border-box;color:#ec7cf4;font-size:10px;font-weight:bold;line-height:19px;text-align:center">18</div>
<div style="position:absolute;left:1827.25px;top:1205.8px;width:22px;height:22px;border:1.5px solid #cc66d8;border-radius:50%;box-sizing:border-box;color:#ec7cf4;font-size:10px;font-weight:bold;line-height:19px;text-align:center">46</div>
<div style="position:absolute;left:1827.25px;top:1230.6px;width:22px;height:22px;border:1.5px solid #cc66d8;border-radius:50%;box-sizing:border-box;color:#ec7cf4;font-size:10px;font-weight:bold;line-height:19px;text-align:center">28</div>
<div style="position:absolute;left:2019.45px;top:1461.2px;width:22px;height:22px;border:1.5px solid #cc66d8;border-radius:50%;box-sizing:border-box;color:#ec7cf4;font-size:10px;font-weight:bold;line-height:19px;text-align:center">23</div>
</div>
<div style="position:absolute;left:2066px;top:48px;width:1px;height:1530px;background:#d0d0d0"></div>
<div style="position:absolute;left:2066px;top:66.5px;width:6px;height:1px;background:#d0d0d0"></div>
<div style="position:absolute;left:2075px;top:58.0px;line-height:20px;font-size:16px;color:#cfcfcf;white-space:pre;">1.08050</div>
<div style="position:absolute;left:2066px;top:129.94px;width:6px;height:1px;background:#d0d0d0"></div>
<div style="position:absolute;left:2075px;top:121.4px;line-height:20px;font-size:16px;color:#cfcfcf;white-space:pre;">1.08040</div>
<div style="position:absolute;left:2066px;top:193.38px;width:6px;height:1px;background:#d0d0d0"></div>
<div style="position:absolute;left:2075px;top:184.9px;line-height:20px;font-size:16px;color:#cfcfcf;white-space:pre;">1.08030</div>
<div style="position:absolute;left:2066px;top:256.82px;width:6px;height:1px;background:#d0d0d0"></div>
<div style="position:absolute;left:2075px;top:248.3px;line-height:20px;font-size:16px;color:#cfcfcf;white-space:pre;">1.08020</div>
<div style="position:absolute;left:2066px;top:320.26px;width:6px;height:1px;background:#d0d0d0"></div>
<div style="position:absolute;left:2075px;top:311.8px;line-height:20px;font-size:16px;color:#cfcfcf;white-space:pre;">1.08010</div>
<div style="position:absolute;left:2066px;top:383.7px;width:6px;height:1px;background:#d0d0d0"></div>
<div style="position:absolute;left:2075px;top:375.2px;line-height:20px;font-size:16px;color:#cfcfcf;white-space:pre;">1.08000</div>
<div style="position:absolute;left:2066px;top:447.14px;width:6px;height:1px;background:#d0d0d0"></div>
<div style="position:absolute;left:2075px;top:438.6px;line-height:20px;font-size:16px;color:#cfcfcf;white-space:pre;">1.07990</div>
<div style="position:absolute;left:2066px;top:510.58px;width:6px;height:1px;background:#d0d0d0"></div>
<div style="position:absolute;left:2075px;top:502.1px;line-height:20px;font-size:16px;color:#cfcfcf;white-space:pre;">1.07980</div>
<div style="position:absolute;left:2066px;top:574.02px;width:6px;height:1px;background:#d0d0d0"></div>
<div style="position:absolute;left:2075px;top:565.5px;line-height:20px;font-size:16px;color:#cfcfcf;white-space:pre;">1.07970</div>
<div style="position:absolute;left:2066px;top:637.46px;width:6px;height:1px;background:#d0d0d0"></div>
<div style="position:absolute;left:2075px;top:629.0px;line-height:20px;font-size:16px;color:#cfcfcf;white-space:pre;">1.07960</div>
<div style="position:absolute;left:2066px;top:700.9px;width:6px;height:1px;background:#d0d0d0"></div>
<div style="position:absolute;left:2075px;top:692.4px;line-height:20px;font-size:16px;color:#cfcfcf;white-space:pre;">1.07950</div>
<div style="position:absolute;left:2066px;top:764.3399999999999px;width:6px;height:1px;background:#d0d0d0"></div>
<div style="position:absolute;left:2075px;top:755.8px;line-height:20px;font-size:16px;color:#cfcfcf;white-space:pre;">1.07940</div>
<div style="position:absolute;left:2066px;top:827.78px;width:6px;height:1px;background:#d0d0d0"></div>
<div style="position:absolute;left:2075px;top:819.3px;line-height:20px;font-size:16px;color:#cfcfcf;white-space:pre;">1.07930</div>
<div style="position:absolute;left:2066px;top:891.22px;width:6px;height:1px;background:#d0d0d0"></div>
<div style="position:absolute;left:2075px;top:882.7px;line-height:20px;font-size:16px;color:#cfcfcf;white-space:pre;">1.07920</div>
<div style="position:absolute;left:2066px;top:954.66px;width:6px;height:1px;background:#d0d0d0"></div>
<div style="position:absolute;left:2075px;top:946.2px;line-height:20px;font-size:16px;color:#cfcfcf;white-space:pre;">1.07910</div>
<div style="position:absolute;left:2066px;top:1018.0999999999999px;width:6px;height:1px;background:#d0d0d0"></div>
<div style="position:absolute;left:2075px;top:1009.6px;line-height:20px;font-size:16px;color:#cfcfcf;white-space:pre;">1.07900</div>
<div style="position:absolute;left:2066px;top:1081.54px;width:6px;height:1px;background:#d0d0d0"></div>
<div style="position:absolute;left:2066px;top:1144.98px;width:6px;height:1px;background:#d0d0d0"></div>
<div style="position:absolute;left:2075px;top:1136.5px;line-height:20px;font-size:16px;color:#cfcfcf;white-space:pre;">1.07880</div>
<div style="position:absolute;left:2066px;top:1208.42px;width:6px;height:1px;background:#d0d0d0"></div>
<div style="position:absolute;left:2075px;top:1199.9px;line-height:20px;font-size:16px;color:#cfcfcf;white-space:pre;">1.07870</div>
<div style="position:absolute;left:2066px;top:1271.86px;width:6px;height:1px;background:#d0d0d0"></div>
<div style="position:absolute;left:2075px;top:1263.4px;line-height:20px;font-size:16px;color:#cfcfcf;white-space:pre;">1.07860</div>
<div style="position:absolute;left:2066px;top:1335.3px;width:6px;height:1px;background:#d0d0d0"></div>
<div style="position:absolute;left:2075px;top:1326.8px;line-height:20px;font-size:16px;color:#cfcfcf;white-space:pre;">1.07850</div>
<div style="position:absolute;left:2066px;top:1398.74px;width:6px;height:1px;background:#d0d0d0"></div>
<div style="position:absolute;left:2075px;top:1390.2px;line-height:20px;font-size:16px;color:#cfcfcf;white-space:pre;">1.07840</div>
<div style="position:absolute;left:2066px;top:1462.1799999999998px;width:6px;height:1px;background:#d0d0d0"></div>
<div style="position:absolute;left:2075px;top:1453.7px;line-height:20px;font-size:16px;color:#cfcfcf;white-space:pre;">1.07830</div>
<div style="position:absolute;left:2066px;top:1525.62px;width:6px;height:1px;background:#d0d0d0"></div>
<div style="position:absolute;left:2075px;top:1517.1px;line-height:20px;font-size:16px;color:#cfcfcf;white-space:pre;">1.07820</div>
<svg style="position:absolute;left:2055px;top:1068px" width="90" height="28"><path d="M11 1.5 H84.5 V26.5 H11 L4 14 Z" fill="#000" stroke="#e0e0e0" stroke-width="1.5"/></svg>
<div style="position:absolute;left:2075px;top:1073.0px;line-height:20px;font-size:16px;color:#fff;white-space:pre;">1.07890</div>
<div style="position:absolute;left:10px;top:1578px;width:2056px;height:1px;background:#d0d0d0"></div>
<div style="position:absolute;left:132.0px;top:1578px;width:1px;height:6px;background:#d0d0d0"></div>
<div style="position:absolute;left:-67.5px;width:400px;text-align:center;top:1590.0px;line-height:20px;font-size:16px;color:#cfcfcf;white-space:pre;">08:10</div>
<div style="position:absolute;left:372.25px;top:1578px;width:1px;height:6px;background:#d0d0d0"></div>
<div style="position:absolute;left:172.75px;width:400px;text-align:center;top:1590.0px;line-height:20px;font-size:16px;color:#cfcfcf;white-space:pre;">08:15</div>
<div style="position:absolute;left:612.5px;top:1578px;width:1px;height:6px;background:#d0d0d0"></div>
<div style="position:absolute;left:413.0px;width:400px;text-align:center;top:1590.0px;line-height:20px;font-size:16px;color:#cfcfcf;white-space:pre;">08:20</div>
<div style="position:absolute;left:852.75px;top:1578px;width:1px;height:6px;background:#d0d0d0"></div>
<div style="position:absolute;left:653.25px;width:400px;text-align:center;top:1590.0px;line-height:20px;font-size:16px;color:#cfcfcf;white-space:pre;">08:25</div>
<div style="position:absolute;left:1093.0px;top:1578px;width:1px;height:6px;background:#d0d0d0"></div>
<div style="position:absolute;left:893.5px;width:400px;text-align:center;top:1590.0px;line-height:20px;font-size:16px;color:#cfcfcf;white-space:pre;">08:30</div>
<div style="position:absolute;left:1333.25px;top:1578px;width:1px;height:6px;background:#d0d0d0"></div>
<div style="position:absolute;left:1133.75px;width:400px;text-align:center;top:1590.0px;line-height:20px;font-size:16px;color:#cfcfcf;white-space:pre;">08:35</div>
<div style="position:absolute;left:1573.5px;top:1578px;width:1px;height:6px;background:#d0d0d0"></div>
<div style="position:absolute;left:1374.0px;width:400px;text-align:center;top:1590.0px;line-height:20px;font-size:16px;color:#cfcfcf;white-space:pre;">08:40</div>
<div style="position:absolute;left:1813.75px;top:1578px;width:1px;height:6px;background:#d0d0d0"></div>
<div style="position:absolute;left:1614.25px;width:400px;text-align:center;top:1590.0px;line-height:20px;font-size:16px;color:#cfcfcf;white-space:pre;">08:45</div>
<div style="position:absolute;left:2054.0px;top:1578px;width:1px;height:6px;background:#d0d0d0"></div>
<div style="position:absolute;left:1854.5px;width:400px;text-align:center;top:1590.0px;line-height:20px;font-size:16px;color:#cfcfcf;white-space:pre;">08:50</div>
<div style="position:absolute;left:10px;top:1614px;width:2132px;height:20px;background:#333333"></div>
<div style="position:absolute;left:11px;top:1616px;width:13px;height:18px;background:#000"></div>
<svg style="position:absolute;left:11px;top:1616px" width="13" height="18"><path d="M9 4 L4 9 L9 14 Z" fill="#eee"/></svg>
<div style="position:absolute;left:2089px;top:1616px;width:36px;height:19px;background:linear-gradient(#606060,#4a4a4a 50%,#3c3c3c);border:1px solid #6a6a6a;box-sizing:border-box"></div>
<div style="position:absolute;left:2126px;top:1616px;width:14px;height:18px;background:#000"></div>
<svg style="position:absolute;left:2126px;top:1616px" width="14" height="18"><path d="M5 4 L10 9 L5 14 Z" fill="#eee"/></svg>
<div style="position:absolute;left:40px;top:1635px;width:110px;height:6px;background:#1e1e1e;border-left:1px solid #1a80e0;border-right:1px solid #1a80e0"></div>
<div style="position:absolute;left:150px;top:1636px;width:35px;height:5px;background:#3a3a40"></div>
<div style="position:absolute;left:14px;top:1552.0px;line-height:20px;font-size:16px;color:rgba(220,220,220,0.85);white-space:pre;">© 2023 NinjaTrader, LLC</div>
<div style="position:absolute;left:15px;top:54.0px;line-height:20px;font-size:16px;color:#c8c8c8;white-space:pre;">ICF_VolumeFilter(6E 06-23 (1 Minute))</div>
<div style="position:absolute;left:17px;top:68.5px;line-height:15px;font-size:12px;color:#f0f000;white-space:pre;text-shadow:0.3px 0 0 #f0f000">ICF Market Group: www.icf-market.com</div>
<div style="position:absolute;left:15px;top:83.5px;line-height:15px;font-size:12px;color:#f0f000;white-space:pre;text-shadow:0.3px 0 0 #f0f000">Today Max Volume:  526  in  1.07655   15:06:24</div>
<div style="position:absolute;left:16px;top:101px;width:238px;height:15px;border:1px solid #20e0f0;box-sizing:border-box"></div>
<div style="position:absolute;left:17px;top:102px;width:33px;height:13px;background:#d0208a"></div>
<div style="position:absolute;left:115px;top:101px;width:1px;height:15px;background:#20e0f0"></div>
<div style="position:absolute;left:59px;top:101.0px;line-height:15px;font-size:12px;color:#f0f000;white-space:pre;">33 %</div>
<div style="position:absolute;left:122px;top:101.0px;line-height:15px;font-size:12px;color:#f0f000;white-space:pre;">3/13/2023 8:49:20 AM</div>
<div style="position:absolute;left:148px;top:138px;width:1014px;height:1202px;background:#a9bcd7"></div>
<div style="position:absolute;left:148px;top:138px;width:1014px;height:36px;background:#f3f3f3"></div>
<svg style="position:absolute;left:155px;top:147px" width="18" height="18"><circle cx="9" cy="9" r="7.5" fill="#e8a020"/><path d="M2 10 A7 7 0 0 0 16 10 A5 4 0 0 1 2 10 Z" fill="#8a2aa0"/><circle cx="10" cy="7" r="4" fill="#2a8ae8"/><circle cx="11" cy="6.5" r="2" fill="#fff"/></svg>
<div style="position:absolute;left:180px;top:146.5px;line-height:21px;font-size:17px;color:#000;white-space:pre;letter-spacing:0.15px">ICF_VolumeFilter Setting  ( 1  Minute )</div>
<div style="position:absolute;left:978px;top:155px;width:16px;height:1.3px;background:#222"></div>
<div style="position:absolute;left:1049px;top:148px;width:14px;height:14px;border:1px solid #c4c4c4;box-sizing:border-box"></div>
<svg style="position:absolute;left:1117px;top:146px" width="20" height="20"><path d="M2.5 2.5 L17 17 M17 2.5 L2.5 17" stroke="#111" stroke-width="1.2"/></svg>
<div style="position:absolute;left:158px;top:206px;width:353px;height:246px;box-sizing:border-box;background:#b3c7e1;border-top:2px solid #737373;border-left:2px solid #737373;border-bottom:2px solid #f2f4f8;border-right:2px solid #f2f4f8"></div>
<div style="position:absolute;left:163px;top:210px;width:194px;height:35px;background:#000;border:1px solid #e8e8e8;box-sizing:border-box;color:#fff;font-size:16px;display:flex;align-items:center;justify-content:center;white-space:pre">Up Bar color</div>
<div style="position:absolute;left:163px;top:250px;width:194px;height:35px;background:#000;border:1px solid #e8e8e8;box-sizing:border-box;color:#fff;font-size:16px;display:flex;align-items:center;justify-content:center;white-space:pre">Down Bar color</div>
<div style="position:absolute;left:163px;top:290px;width:194px;height:35px;background:#000;border:1px solid #e8e8e8;box-sizing:border-box;color:#fff;font-size:16px;display:flex;align-items:center;justify-content:center;white-space:pre">Doji Bar color</div>
<div style="position:absolute;left:164px;top:331px;width:194px;height:35px;background:#f4f4f4;border:1px solid #000;box-sizing:border-box;color:#000;font-size:16px;display:flex;align-items:center;justify-content:center;white-space:pre">POC color</div>
<div style="position:absolute;left:369px;top:341.0px;line-height:20px;font-size:16px;color:#000;white-space:pre;">Show POC</div>
<div style="position:absolute;left:457px;top:340px;width:19px;height:19px;box-sizing:border-box;background:#f4f4f4;border-top:2px solid #6a6a6a;border-left:2px solid #6a6a6a;border-bottom:2px solid #fafafa;border-right:2px solid #fafafa"></div><svg style="position:absolute;left:457px;top:340px" width="19" height="19"><path d="M4.5 8 L7 13.5 L12.5 4.5 L11.5 4 L7 10.5 L5.5 7.5 Z" fill="#000" stroke="#000" stroke-width="1.6" stroke-linejoin="round"/></svg>
<div style="position:absolute;left:163px;top:370px;width:194px;height:35px;background:#808080;border:1px solid #000;box-sizing:border-box;color:#000;font-size:16px;display:flex;align-items:center;justify-content:center;white-space:pre">Bars Back color</div>
<div style="position:absolute;left:369px;top:378.0px;line-height:20px;font-size:16px;color:#000;white-space:pre;">Opacity</div>
<div style="position:absolute;left:435px;top:377px;width:70px;height:25px;box-sizing:border-box;border-top:2px solid #6e6e6e;border-left:2px solid #6e6e6e;border-bottom:1.5px solid #f4f4f4;border-right:1.5px solid #f4f4f4;background:#b8f0b8"><div style="position:absolute;left:3px;top:0;bottom:0;display:flex;align-items:center;font-size:16px;color:#000">70</div><div style="position:absolute;right:1px;top:0px;width:17px;bottom:0;background:#707070"><div style="position:absolute;left:0;top:0;right:1px;height:calc(50% - 1px);background:#ececec;border-bottom:1px solid #999"></div><div style="position:absolute;left:0;bottom:1px;right:1px;height:calc(50% - 1px);background:#ececec"></div><svg style="position:absolute;left:0;top:0" width="16" height="21"><path d="M5.5 6.8 L8 4.2 L10.5 6.8 Z M5.5 15.8 L8 18.2 L10.5 15.8 Z" fill="#000"/></svg></div></div>
<div style="position:absolute;left:163px;top:410px;width:194px;height:37px;background:#f4f4f4;border:1px solid #000;box-sizing:border-box;color:#000;font-size:16px;display:flex;align-items:center;justify-content:center;white-space:pre">Volume font size</div>
<div style="position:absolute;left:370px;top:423.0px;line-height:20px;font-size:16px;color:#000;white-space:pre;">Value</div>
<div style="position:absolute;left:435px;top:415px;width:70px;height:26px;box-sizing:border-box;border-top:2px solid #6e6e6e;border-left:2px solid #6e6e6e;border-bottom:1.5px solid #f4f4f4;border-right:1.5px solid #f4f4f4;background:#f4f400"><div style="position:absolute;left:3px;top:0;bottom:0;display:flex;align-items:center;font-size:16px;color:#000">15</div><div style="position:absolute;right:1px;top:0px;width:17px;bottom:0;background:#707070"><div style="position:absolute;left:0;top:0;right:1px;height:calc(50% - 1px);background:#ececec;border-bottom:1px solid #999"></div><div style="position:absolute;left:0;bottom:1px;right:1px;height:calc(50% - 1px);background:#ececec"></div><svg style="position:absolute;left:0;top:0" width="16" height="22"><path d="M5.5 7.0 L8 4.5 L10.5 7.0 Z M5.5 16.4 L8 18.9 L10.5 16.4 Z" fill="#000"/></svg></div></div>
<div style="position:absolute;left:451px;top:421px;width:1.2px;height:15px;background:#1020c0"></div>
<div style="position:absolute;left:164px;top:459px;width:194px;height:34px;background:#80f4f4;border:1px solid #000;box-sizing:border-box;color:#000;font-size:16px;display:flex;align-items:center;justify-content:center;white-space:pre">Mark line above price</div>
<div style="position:absolute;left:370px;top:467.0px;line-height:20px;font-size:16px;color:#000;white-space:pre;">Opacity</div>
<div style="position:absolute;left:440px;top:462px;width:70px;height:26px;box-sizing:border-box;border-top:2px solid #6e6e6e;border-left:2px solid #6e6e6e;border-bottom:1.5px solid #f4f4f4;border-right:1.5px solid #f4f4f4;background:#b8f0b8"><div style="position:absolute;left:3px;top:0;bottom:0;display:flex;align-items:center;font-size:16px;color:#000">40</div><div style="position:absolute;right:1px;top:0px;width:17px;bottom:0;background:#707070"><div style="position:absolute;left:0;top:0;right:1px;height:calc(50% - 1px);background:#ececec;border-bottom:1px solid #999"></div><div style="position:absolute;left:0;bottom:1px;right:1px;height:calc(50% - 1px);background:#ececec"></div><svg style="position:absolute;left:0;top:0" width="16" height="22"><path d="M5.5 7.0 L8 4.5 L10.5 7.0 Z M5.5 16.4 L8 18.9 L10.5 16.4 Z" fill="#000"/></svg></div></div>
<div style="position:absolute;left:164px;top:505px;width:194px;height:34px;background:#f4b880;border:1px solid #000;box-sizing:border-box;color:#000;font-size:16px;display:flex;align-items:center;justify-content:center;white-space:pre">Mark line below price</div>
<div style="position:absolute;left:370px;top:513.0px;line-height:20px;font-size:16px;color:#000;white-space:pre;">Opacity</div>
<div style="position:absolute;left:440px;top:508px;width:70px;height:26px;box-sizing:border-box;border-top:2px solid #6e6e6e;border-left:2px solid #6e6e6e;border-bottom:1.5px solid #f4f4f4;border-right:1.5px solid #f4f4f4;background:#b8f0b8"><div style="position:absolute;left:3px;top:0;bottom:0;display:flex;align-items:center;font-size:16px;color:#000">40</div><div style="position:absolute;right:1px;top:0px;width:17px;bottom:0;background:#707070"><div style="position:absolute;left:0;top:0;right:1px;height:calc(50% - 1px);background:#ececec;border-bottom:1px solid #999"></div><div style="position:absolute;left:0;bottom:1px;right:1px;height:calc(50% - 1px);background:#ececec"></div><svg style="position:absolute;left:0;top:0" width="16" height="22"><path d="M5.5 7.0 L8 4.5 L10.5 7.0 Z M5.5 16.4 L8 18.9 L10.5 16.4 Z" fill="#000"/></svg></div></div>
<svg style="position:absolute;left:188px;top:549px" width="18" height="18"><circle cx="9" cy="9" r="7.5" fill="#f4f4f4" stroke="#9a9a9a" stroke-width="1"/></svg>
<div style="position:absolute;left:212px;top:549.0px;line-height:20px;font-size:16px;color:#000;white-space:pre;">Fixed Color</div>
<svg style="position:absolute;left:348px;top:549px" width="18" height="18"><circle cx="9" cy="9" r="7.5" fill="#f4f4f4" stroke="#9a9a9a" stroke-width="1"/><circle cx="9" cy="9" r="4" fill="#000"/></svg>
<div style="position:absolute;left:372px;top:549.0px;line-height:20px;font-size:16px;color:#000;white-space:pre;">Changing Color</div>
<div style="position:absolute;left:522px;top:185.0px;line-height:20px;font-size:16px;color:#000;white-space:pre;">Show Volume Filter</div>
<div style="position:absolute;left:672px;top:184px;width:19px;height:19px;box-sizing:border-box;background:#f4f4f4;border-top:2px solid #6a6a6a;border-left:2px solid #6a6a6a;border-bottom:2px solid #fafafa;border-right:2px solid #fafafa"></div><svg style="position:absolute;left:672px;top:184px" width="19" height="19"><path d="M4.5 8 L7 13.5 L12.5 4.5 L11.5 4 L7 10.5 L5.5 7.5 Z" fill="#000" stroke="#000" stroke-width="1.6" stroke-linejoin="round"/></svg>
<div style="position:absolute;left:523px;top:206px;width:627px;height:366px;box-sizing:border-box;background:#b3c7e1;border-top:2px solid #737373;border-left:2px solid #737373;border-bottom:2px solid #f2f4f8;border-right:2px solid #f2f4f8"></div>
<div style="position:absolute;left:580px;width:400px;text-align:center;top:208.0px;line-height:20px;font-size:16px;color:#000;white-space:pre;">Value</div>
<div style="position:absolute;left:529px;top:230px;width:192px;height:33px;background:#000;border:1px solid #000;box-sizing:border-box;color:#fff;font-size:16px;display:flex;align-items:center;justify-content:center;white-space:pre">V Filter font size</div>
<div style="position:absolute;left:743px;top:230px;width:90px;height:26px;box-sizing:border-box;border-top:2px solid #6e6e6e;border-left:2px solid #6e6e6e;border-bottom:1.5px solid #f4f4f4;border-right:1.5px solid #f4f4f4;background:#f4f400"><div style="position:absolute;left:3px;top:0;bottom:0;display:flex;align-items:center;font-size:16px;color:#000">10</div><div style="position:absolute;right:1px;top:0px;width:17px;bottom:0;background:#707070"><div style="position:absolute;left:0;top:0;right:1px;height:calc(50% - 1px);background:#ececec;border-bottom:1px solid #999"></div><div style="position:absolute;left:0;bottom:1px;right:1px;height:calc(50% - 1px);background:#ececec"></div><svg style="position:absolute;left:0;top:0" width="16" height="22"><path d="M5.5 7.0 L8 4.5 L10.5 7.0 Z M5.5 16.4 L8 18.9 L10.5 16.4 Z" fill="#000"/></svg></div></div>
<div style="position:absolute;left:856px;top:219px;width:105px;height:31px;background:#bebebe;border:1px solid #404040;box-sizing:border-box;color:#000;font-size:16px;display:flex;align-items:center;justify-content:center;white-space:pre">Filter Box</div>
<div style="position:absolute;left:974px;top:219px;width:117px;height:28px;box-sizing:border-box;background:#c0c0c0;border-top:2px solid #8a8a8a;border-left:2px solid #8a8a8a;border-bottom:1px solid #f0f0f0;border-right:1px solid #f0f0f0"></div>
<div style="position:absolute;left:978px;top:222.0px;line-height:20px;font-size:16px;color:#000;white-space:pre;">AAlert10</div>
<div style="position:absolute;left:1064px;top:221px;width:25px;height:24px;background:#d8d8d8;border-right:1px solid #555;border-bottom:1px solid #555;box-sizing:border-box"></div>
<svg style="position:absolute;left:1064px;top:221px" width="25" height="24"><path d="M7 10 L13 16 L19 10 Z" fill="#000"/></svg>
<div style="position:absolute;left:1109px;top:221px;width:27px;height:29px;background:#bebebe;border:1px solid #222;box-sizing:border-box"></div>
<svg style="position:absolute;left:1109px;top:221px" width="27" height="29"><path d="M11 10 L16 14.5 L11 19 Z" fill="#000"/></svg>
<div style="position:absolute;left:858px;top:258.0px;line-height:20px;font-size:16px;color:#000;white-space:pre;">Min ATS</div>
<div style="position:absolute;left:945px;top:258.0px;line-height:20px;font-size:16px;color:#000;white-space:pre;">Min AVB</div>
<div style="position:absolute;left:1040px;top:260.0px;line-height:20px;font-size:16px;color:#000;white-space:pre;">Time</div>
<div style="position:absolute;left:1100px;top:258.0px;line-height:20px;font-size:16px;color:#000;white-space:pre;">Alert</div>
<div style="position:absolute;left:529px;top:278px;width:192px;height:34px;background:#f4f080;border:1px solid #000;box-sizing:border-box;color:#000;font-size:16px;display:flex;align-items:center;justify-content:center;white-space:pre">Volume filter 1</div>
<div style="position:absolute;left:743px;top:281px;width:90px;height:25px;box-sizing:border-box;border-top:2px solid #6e6e6e;border-left:2px solid #6e6e6e;border-bottom:1.5px solid #f4f4f4;border-right:1.5px solid #f4f4f4;background:#f4d8b8"><div style="position:absolute;left:3px;top:0;bottom:0;display:flex;align-items:center;font-size:16px;color:#000">100</div><div style="position:absolute;right:1px;top:0px;width:17px;bottom:0;background:#707070"><div style="position:absolute;left:0;top:0;right:1px;height:calc(50% - 1px);background:#ececec;border-bottom:1px solid #999"></div><div style="position:absolute;left:0;bottom:1px;right:1px;height:calc(50% - 1px);background:#ececec"></div><svg style="position:absolute;left:0;top:0" width="16" height="21"><path d="M5.5 6.8 L8 4.2 L10.5 6.8 Z M5.5 15.8 L8 18.2 L10.5 15.8 Z" fill="#000"/></svg></div></div>
<div style="position:absolute;left:856px;top:285px;width:82px;height:25px;box-sizing:border-box;border-top:2px solid #6e6e6e;border-left:2px solid #6e6e6e;border-bottom:1.5px solid #f4f4f4;border-right:1.5px solid #f4f4f4;background:#f4d8b8"><div style="position:absolute;left:3px;top:0;bottom:0;display:flex;align-items:center;font-size:16px;color:#000">3.50</div><div style="position:absolute;right:1px;top:0px;width:17px;bottom:0;background:#707070"><div style="position:absolute;left:0;top:0;right:1px;height:calc(50% - 1px);background:#ececec;border-bottom:1px solid #999"></div><div style="position:absolute;left:0;bottom:1px;right:1px;height:calc(50% - 1px);background:#ececec"></div><svg style="position:absolute;left:0;top:0" width="16" height="21"><path d="M5.5 6.8 L8 4.2 L10.5 6.8 Z M5.5 15.8 L8 18.2 L10.5 15.8 Z" fill="#000"/></svg></div></div>
<div style="position:absolute;left:944px;top:285px;width:82px;height:25px;box-sizing:border-box;border-top:2px solid #6e6e6e;border-left:2px solid #6e6e6e;border-bottom:1.5px solid #f4f4f4;border-right:1.5px solid #f4f4f4;background:#f4d8b8"><div style="position:absolute;left:3px;top:0;bottom:0;display:flex;align-items:center;font-size:16px;color:#000">0</div><div style="position:absolute;right:1px;top:0px;width:17px;bottom:0;background:#707070"><div style="position:absolute;left:0;top:0;right:1px;height:calc(50% - 1px);background:#ececec;border-bottom:1px solid #999"></div><div style="position:absolute;left:0;bottom:1px;right:1px;height:calc(50% - 1px);background:#ececec"></div><svg style="position:absolute;left:0;top:0" width="16" height="21"><path d="M5.5 6.8 L8 4.2 L10.5 6.8 Z M5.5 15.8 L8 18.2 L10.5 15.8 Z" fill="#000"/></svg></div></div>
<div style="position:absolute;left:1034px;top:285px;width:55px;height:25px;box-sizing:border-box;border-top:2px solid #6e6e6e;border-left:2px solid #6e6e6e;border-bottom:1.5px solid #f4f4f4;border-right:1.5px solid #f4f4f4;background:#f4d8b8"><div style="position:absolute;left:3px;top:0;bottom:0;display:flex;align-items:center;font-size:16px;color:#000">24</div><div style="position:absolute;right:1px;top:0px;width:17px;bottom:0;background:#707070"><div style="position:absolute;left:0;top:0;right:1px;height:calc(50% - 1px);background:#ececec;border-bottom:1px solid #999"></div><div style="position:absolute;left:0;bottom:1px;right:1px;height:calc(50% - 1px);background:#ececec"></div><svg style="position:absolute;left:0;top:0" width="16" height="21"><path d="M5.5 6.8 L8 4.2 L10.5 6.8 Z M5.5 15.8 L8 18.2 L10.5 15.8 Z" fill="#000"/></svg></div></div>
<div style="position:absolute;left:1109px;top:292px;width:19px;height:19px;box-sizing:border-box;background:#f4f4f4;border-top:2px solid #6a6a6a;border-left:2px solid #6a6a6a;border-bottom:2px solid #fafafa;border-right:2px solid #fafafa"></div>
<div style="position:absolute;left:529px;top:327px;width:192px;height:34px;background:#f4d000;border:1px solid #000;box-sizing:border-box;color:#000;font-size:16px;display:flex;align-items:center;justify-content:center;white-space:pre">Volume filter 2</div>
<div style="position:absolute;left:743px;top:330px;width:90px;height:25px;box-sizing:border-box;border-top:2px solid #6e6e6e;border-left:2px solid #6e6e6e;border-bottom:1.5px solid #f4f4f4;border-right:1.5px solid #f4f4f4;background:#f4d8b8"><div style="position:absolute;left:3px;top:0;bottom:0;display:flex;align-items:center;font-size:16px;color:#000">200</div><div style="position:absolute;right:1px;top:0px;width:17px;bottom:0;background:#707070"><div style="position:absolute;left:0;top:0;right:1px;height:calc(50% - 1px);background:#ececec;border-bottom:1px solid #999"></div><div style="position:absolute;left:0;bottom:1px;right:1px;height:calc(50% - 1px);background:#ececec"></div><svg style="position:absolute;left:0;top:0" width="16" height="21"><path d="M5.5 6.8 L8 4.2 L10.5 6.8 Z M5.5 15.8 L8 18.2 L10.5 15.8 Z" fill="#000"/></svg></div></div>
<div style="position:absolute;left:856px;top:334px;width:82px;height:25px;box-sizing:border-box;border-top:2px solid #6e6e6e;border-left:2px solid #6e6e6e;border-bottom:1.5px solid #f4f4f4;border-right:1.5px solid #f4f4f4;background:#f4d8b8"><div style="position:absolute;left:3px;top:0;bottom:0;display:flex;align-items:center;font-size:16px;color:#000">0.00</div><div style="position:absolute;right:1px;top:0px;width:17px;bottom:0;background:#707070"><div style="position:absolute;left:0;top:0;right:1px;height:calc(50% - 1px);background:#ececec;border-bottom:1px solid #999"></div><div style="position:absolute;left:0;bottom:1px;right:1px;height:calc(50% - 1px);background:#ececec"></div><svg style="position:absolute;left:0;top:0" width="16" height="21"><path d="M5.5 6.8 L8 4.2 L10.5 6.8 Z M5.5 15.8 L8 18.2 L10.5 15.8 Z" fill="#000"/></svg></div></div>
<div style="position:absolute;left:944px;top:334px;width:82px;height:25px;box-sizing:border-box;border-top:2px solid #6e6e6e;border-left:2px solid #6e6e6e;border-bottom:1.5px solid #f4f4f4;border-right:1.5px solid #f4f4f4;background:#f4d8b8"><div style="position:absolute;left:3px;top:0;bottom:0;display:flex;align-items:center;font-size:16px;color:#000">0</div><div style="position:absolute;right:1px;top:0px;width:17px;bottom:0;background:#707070"><div style="position:absolute;left:0;top:0;right:1px;height:calc(50% - 1px);background:#ececec;border-bottom:1px solid #999"></div><div style="position:absolute;left:0;bottom:1px;right:1px;height:calc(50% - 1px);background:#ececec"></div><svg style="position:absolute;left:0;top:0" width="16" height="21"><path d="M5.5 6.8 L8 4.2 L10.5 6.8 Z M5.5 15.8 L8 18.2 L10.5 15.8 Z" fill="#000"/></svg></div></div>
<div style="position:absolute;left:1034px;top:334px;width:55px;height:25px;box-sizing:border-box;border-top:2px solid #6e6e6e;border-left:2px solid #6e6e6e;border-bottom:1.5px solid #f4f4f4;border-right:1.5px solid #f4f4f4;background:#f4d8b8"><div style="position:absolute;left:3px;top:0;bottom:0;display:flex;align-items:center;font-size:16px;color:#000">24</div><div style="position:absolute;right:1px;top:0px;width:17px;bottom:0;background:#707070"><div style="position:absolute;left:0;top:0;right:1px;height:calc(50% - 1px);background:#ececec;border-bottom:1px solid #999"></div><div style="position:absolute;left:0;bottom:1px;right:1px;height:calc(50% - 1px);background:#ececec"></div><svg style="position:absolute;left:0;top:0" width="16" height="21"><path d="M5.5 6.8 L8 4.2 L10.5 6.8 Z M5.5 15.8 L8 18.2 L10.5 15.8 Z" fill="#000"/></svg></div></div>
<div style="position:absolute;left:1109px;top:341px;width:19px;height:19px;box-sizing:border-box;background:#f4f4f4;border-top:2px solid #6a6a6a;border-left:2px solid #6a6a6a;border-bottom:2px solid #fafafa;border-right:2px solid #fafafa"></div>
<div style="position:absolute;left:529px;top:376px;width:192px;height:34px;background:#f47800;border:1px solid #000;box-sizing:border-box;color:#000;font-size:16px;display:flex;align-items:center;justify-content:center;white-space:pre">Volume filter 3</div>
<div style="position:absolute;left:743px;top:379px;width:90px;height:25px;box-sizing:border-box;border-top:2px solid #6e6e6e;border-left:2px solid #6e6e6e;border-bottom:1.5px solid #f4f4f4;border-right:1.5px solid #f4f4f4;background:#f4d8b8"><div style="position:absolute;left:3px;top:0;bottom:0;display:flex;align-items:center;font-size:16px;color:#000">300</div><div style="position:absolute;right:1px;top:0px;width:17px;bottom:0;background:#707070"><div style="position:absolute;left:0;top:0;right:1px;height:calc(50% - 1px);background:#ececec;border-bottom:1px solid #999"></div><div style="position:absolute;left:0;bottom:1px;right:1px;height:calc(50% - 1px);background:#ececec"></div><svg style="position:absolute;left:0;top:0" width="16" height="21"><path d="M5.5 6.8 L8 4.2 L10.5 6.8 Z M5.5 15.8 L8 18.2 L10.5 15.8 Z" fill="#000"/></svg></div></div>
<div style="position:absolute;left:856px;top:383px;width:82px;height:25px;box-sizing:border-box;border-top:2px solid #6e6e6e;border-left:2px solid #6e6e6e;border-bottom:1.5px solid #f4f4f4;border-right:1.5px solid #f4f4f4;background:#f4d8b8"><div style="position:absolute;left:3px;top:0;bottom:0;display:flex;align-items:center;font-size:16px;color:#000">0.00</div><div style="position:absolute;right:1px;top:0px;width:17px;bottom:0;background:#707070"><div style="position:absolute;left:0;top:0;right:1px;height:calc(50% - 1px);background:#ececec;border-bottom:1px solid #999"></div><div style="position:absolute;left:0;bottom:1px;right:1px;height:calc(50% - 1px);background:#ececec"></div><svg style="position:absolute;left:0;top:0" width="16" height="21"><path d="M5.5 6.8 L8 4.2 L10.5 6.8 Z M5.5 15.8 L8 18.2 L10.5 15.8 Z" fill="#000"/></svg></div></div>
<div style="position:absolute;left:944px;top:383px;width:82px;height:25px;box-sizing:border-box;border-top:2px solid #6e6e6e;border-left:2px solid #6e6e6e;border-bottom:1.5px solid #f4f4f4;border-right:1.5px solid #f4f4f4;background:#f4d8b8"><div style="position:absolute;left:3px;top:0;bottom:0;display:flex;align-items:center;font-size:16px;color:#000">0</div><div style="position:absolute;right:1px;top:0px;width:17px;bottom:0;background:#707070"><div style="position:absolute;left:0;top:0;right:1px;height:calc(50% - 1px);background:#ececec;border-bottom:1px solid #999"></div><div style="position:absolute;left:0;bottom:1px;right:1px;height:calc(50% - 1px);background:#ececec"></div><svg style="position:absolute;left:0;top:0" width="16" height="21"><path d="M5.5 6.8 L8 4.2 L10.5 6.8 Z M5.5 15.8 L8 18.2 L10.5 15.8 Z" fill="#000"/></svg></div></div>
<div style="position:absolute;left:1034px;top:383px;width:55px;height:25px;box-sizing:border-box;border-top:2px solid #6e6e6e;border-left:2px solid #6e6e6e;border-bottom:1.5px solid #f4f4f4;border-right:1.5px solid #f4f4f4;background:#f4d8b8"><div style="position:absolute;left:3px;top:0;bottom:0;display:flex;align-items:center;font-size:16px;color:#000">24</div><div style="position:absolute;right:1px;top:0px;width:17px;bottom:0;background:#707070"><div style="position:absolute;left:0;top:0;right:1px;height:calc(50% - 1px);background:#ececec;border-bottom:1px solid #999"></div><div style="position:absolute;left:0;bottom:1px;right:1px;height:calc(50% - 1px);background:#ececec"></div><svg style="position:absolute;left:0;top:0" width="16" height="21"><path d="M5.5 6.8 L8 4.2 L10.5 6.8 Z M5.5 15.8 L8 18.2 L10.5 15.8 Z" fill="#000"/></svg></div></div>
<div style="position:absolute;left:1109px;top:390px;width:19px;height:19px;box-sizing:border-box;background:#f4f4f4;border-top:2px solid #6a6a6a;border-left:2px solid #6a6a6a;border-bottom:2px solid #fafafa;border-right:2px solid #fafafa"></div>
<div style="position:absolute;left:529px;top:424px;width:192px;height:35px;background:#f40000;border:1px solid #000;box-sizing:border-box;color:#000;font-size:16px;display:flex;align-items:center;justify-content:center;white-space:pre">Volume filter 4</div>
<div style="position:absolute;left:743px;top:427px;width:90px;height:25px;box-sizing:border-box;border-top:2px solid #6e6e6e;border-left:2px solid #6e6e6e;border-bottom:1.5px solid #f4f4f4;border-right:1.5px solid #f4f4f4;background:#f4d8b8"><div style="position:absolute;left:3px;top:0;bottom:0;display:flex;align-items:center;font-size:16px;color:#000">400</div><div style="position:absolute;right:1px;top:0px;width:17px;bottom:0;background:#707070"><div style="position:absolute;left:0;top:0;right:1px;height:calc(50% - 1px);background:#ececec;border-bottom:1px solid #999"></div><div style="position:absolute;left:0;bottom:1px;right:1px;height:calc(50% - 1px);background:#ececec"></div><svg style="position:absolute;left:0;top:0" width="16" height="21"><path d="M5.5 6.8 L8 4.2 L10.5 6.8 Z M5.5 15.8 L8 18.2 L10.5 15.8 Z" fill="#000"/></svg></div></div>
<div style="position:absolute;left:856px;top:431px;width:82px;height:25px;box-sizing:border-box;border-top:2px solid #6e6e6e;border-left:2px solid #6e6e6e;border-bottom:1.5px solid #f4f4f4;border-right:1.5px solid #f4f4f4;background:#f4d8b8"><div style="position:absolute;left:3px;top:0;bottom:0;display:flex;align-items:center;font-size:16px;color:#000">0.00</div><div style="position:absolute;right:1px;top:0px;width:17px;bottom:0;background:#707070"><div style="position:absolute;left:0;top:0;right:1px;height:calc(50% - 1px);background:#ececec;border-bottom:1px solid #999"></div><div style="position:absolute;left:0;bottom:1px;right:1px;height:calc(50% - 1px);background:#ececec"></div><svg style="position:absolute;left:0;top:0" width="16" height="21"><path d="M5.5 6.8 L8 4.2 L10.5 6.8 Z M5.5 15.8 L8 18.2 L10.5 15.8 Z" fill="#000"/></svg></div></div>
<div style="position:absolute;left:944px;top:431px;width:82px;height:25px;box-sizing:border-box;border-top:2px solid #6e6e6e;border-left:2px solid #6e6e6e;border-bottom:1.5px solid #f4f4f4;border-right:1.5px solid #f4f4f4;background:#f4d8b8"><div style="position:absolute;left:3px;top:0;bottom:0;display:flex;align-items:center;font-size:16px;color:#000">0</div><div style="position:absolute;right:1px;top:0px;width:17px;bottom:0;background:#707070"><div style="position:absolute;left:0;top:0;right:1px;height:calc(50% - 1px);background:#ececec;border-bottom:1px solid #999"></div><div style="position:absolute;left:0;bottom:1px;right:1px;height:calc(50% - 1px);background:#ececec"></div><svg style="position:absolute;left:0;top:0" width="16" height="21"><path d="M5.5 6.8 L8 4.2 L10.5 6.8 Z M5.5 15.8 L8 18.2 L10.5 15.8 Z" fill="#000"/></svg></div></div>
<div style="position:absolute;left:1034px;top:431px;width:55px;height:25px;box-sizing:border-box;border-top:2px solid #6e6e6e;border-left:2px solid #6e6e6e;border-bottom:1.5px solid #f4f4f4;border-right:1.5px solid #f4f4f4;background:#f4d8b8"><div style="position:absolute;left:3px;top:0;bottom:0;display:flex;align-items:center;font-size:16px;color:#000">24</div><div style="position:absolute;right:1px;top:0px;width:17px;bottom:0;background:#707070"><div style="position:absolute;left:0;top:0;right:1px;height:calc(50% - 1px);background:#ececec;border-bottom:1px solid #999"></div><div style="position:absolute;left:0;bottom:1px;right:1px;height:calc(50% - 1px);background:#ececec"></div><svg style="position:absolute;left:0;top:0" width="16" height="21"><path d="M5.5 6.8 L8 4.2 L10.5 6.8 Z M5.5 15.8 L8 18.2 L10.5 15.8 Z" fill="#000"/></svg></div></div>
<div style="position:absolute;left:1109px;top:438px;width:19px;height:19px;box-sizing:border-box;background:#f4f4f4;border-top:2px solid #6a6a6a;border-left:2px solid #6a6a6a;border-bottom:2px solid #fafafa;border-right:2px solid #fafafa"></div>
<div style="position:absolute;left:529px;top:472px;width:192px;height:35px;background:#f000f0;border:1px solid #000;box-sizing:border-box;color:#000;font-size:16px;display:flex;align-items:center;justify-content:center;white-space:pre">Volume filter 5</div>
<div style="position:absolute;left:743px;top:475px;width:90px;height:25px;box-sizing:border-box;border-top:2px solid #6e6e6e;border-left:2px solid #6e6e6e;border-bottom:1.5px solid #f4f4f4;border-right:1.5px solid #f4f4f4;background:#f4d8b8"><div style="position:absolute;left:3px;top:0;bottom:0;display:flex;align-items:center;font-size:16px;color:#000">500</div><div style="position:absolute;right:1px;top:0px;width:17px;bottom:0;background:#707070"><div style="position:absolute;left:0;top:0;right:1px;height:calc(50% - 1px);background:#ececec;border-bottom:1px solid #999"></div><div style="position:absolute;left:0;bottom:1px;right:1px;height:calc(50% - 1px);background:#ececec"></div><svg style="position:absolute;left:0;top:0" width="16" height="21"><path d="M5.5 6.8 L8 4.2 L10.5 6.8 Z M5.5 15.8 L8 18.2 L10.5 15.8 Z" fill="#000"/></svg></div></div>
<div style="position:absolute;left:856px;top:479px;width:82px;height:25px;box-sizing:border-box;border-top:2px solid #6e6e6e;border-left:2px solid #6e6e6e;border-bottom:1.5px solid #f4f4f4;border-right:1.5px solid #f4f4f4;background:#f4d8b8"><div style="position:absolute;left:3px;top:0;bottom:0;display:flex;align-items:center;font-size:16px;color:#000">0.00</div><div style="position:absolute;right:1px;top:0px;width:17px;bottom:0;background:#707070"><div style="position:absolute;left:0;top:0;right:1px;height:calc(50% - 1px);background:#ececec;border-bottom:1px solid #999"></div><div style="position:absolute;left:0;bottom:1px;right:1px;height:calc(50% - 1px);background:#ececec"></div><svg style="position:absolute;left:0;top:0" width="16" height="21"><path d="M5.5 6.8 L8 4.2 L10.5 6.8 Z M5.5 15.8 L8 18.2 L10.5 15.8 Z" fill="#000"/></svg></div></div>
<div style="position:absolute;left:944px;top:479px;width:82px;height:25px;box-sizing:border-box;border-top:2px solid #6e6e6e;border-left:2px solid #6e6e6e;border-bottom:1.5px solid #f4f4f4;border-right:1.5px solid #f4f4f4;background:#f4d8b8"><div style="position:absolute;left:3px;top:0;bottom:0;display:flex;align-items:center;font-size:16px;color:#000">0</div><div style="position:absolute;right:1px;top:0px;width:17px;bottom:0;background:#707070"><div style="position:absolute;left:0;top:0;right:1px;height:calc(50% - 1px);background:#ececec;border-bottom:1px solid #999"></div><div style="position:absolute;left:0;bottom:1px;right:1px;height:calc(50% - 1px);background:#ececec"></div><svg style="position:absolute;left:0;top:0" width="16" height="21"><path d="M5.5 6.8 L8 4.2 L10.5 6.8 Z M5.5 15.8 L8 18.2 L10.5 15.8 Z" fill="#000"/></svg></div></div>
<div style="position:absolute;left:1034px;top:479px;width:55px;height:25px;box-sizing:border-box;border-top:2px solid #6e6e6e;border-left:2px solid #6e6e6e;border-bottom:1.5px solid #f4f4f4;border-right:1.5px solid #f4f4f4;background:#f4d8b8"><div style="position:absolute;left:3px;top:0;bottom:0;display:flex;align-items:center;font-size:16px;color:#000">24</div><div style="position:absolute;right:1px;top:0px;width:17px;bottom:0;background:#707070"><div style="position:absolute;left:0;top:0;right:1px;height:calc(50% - 1px);background:#ececec;border-bottom:1px solid #999"></div><div style="position:absolute;left:0;bottom:1px;right:1px;height:calc(50% - 1px);background:#ececec"></div><svg style="position:absolute;left:0;top:0" width="16" height="21"><path d="M5.5 6.8 L8 4.2 L10.5 6.8 Z M5.5 15.8 L8 18.2 L10.5 15.8 Z" fill="#000"/></svg></div></div>
<div style="position:absolute;left:1109px;top:486px;width:19px;height:19px;box-sizing:border-box;background:#f4f4f4;border-top:2px solid #6a6a6a;border-left:2px solid #6a6a6a;border-bottom:2px solid #fafafa;border-right:2px solid #fafafa"></div>
<div style="position:absolute;left:530px;top:519px;width:150px;height:35px;background:#2090f4;border:1px solid #000;box-sizing:border-box;color:#000;font-size:16px;display:flex;align-items:center;justify-content:center;white-space:pre">Bar Volume filter</div>
<div style="position:absolute;left:698px;top:514.0px;line-height:20px;font-size:16px;color:#000;white-space:pre;">Avg</div>
<div style="position:absolute;left:701px;top:533px;width:19px;height:19px;box-sizing:border-box;background:#f4f4f4;border-top:2px solid #6a6a6a;border-left:2px solid #6a6a6a;border-bottom:2px solid #fafafa;border-right:2px solid #fafafa"></div>
<div style="position:absolute;left:743px;top:522px;width:90px;height:25px;box-sizing:border-box;border-top:2px solid #6e6e6e;border-left:2px solid #6e6e6e;border-bottom:1.5px solid #f4f4f4;border-right:1.5px solid #f4f4f4;background:#b8f4f4"><div style="position:absolute;left:3px;top:0;bottom:0;display:flex;align-items:center;font-size:16px;color:#000">500</div><div style="position:absolute;right:1px;top:0px;width:17px;bottom:0;background:#707070"><div style="position:absolute;left:0;top:0;right:1px;height:calc(50% - 1px);background:#ececec;border-bottom:1px solid #999"></div><div style="position:absolute;left:0;bottom:1px;right:1px;height:calc(50% - 1px);background:#ececec"></div><svg style="position:absolute;left:0;top:0" width="16" height="21"><path d="M5.5 6.8 L8 4.2 L10.5 6.8 Z M5.5 15.8 L8 18.2 L10.5 15.8 Z" fill="#000"/></svg></div></div>
<div style="position:absolute;left:855px;top:528.0px;line-height:20px;font-size:16px;color:#000;white-space:pre;">Opacity --></div>
<div style="position:absolute;left:944px;top:522px;width:66px;height:25px;box-sizing:border-box;border-top:2px solid #6e6e6e;border-left:2px solid #6e6e6e;border-bottom:1.5px solid #f4f4f4;border-right:1.5px solid #f4f4f4;background:#b8f4f4"><div style="position:absolute;left:3px;top:0;bottom:0;display:flex;align-items:center;font-size:16px;color:#000">100</div><div style="position:absolute;right:1px;top:0px;width:17px;bottom:0;background:#707070"><div style="position:absolute;left:0;top:0;right:1px;height:calc(50% - 1px);background:#ececec;border-bottom:1px solid #999"></div><div style="position:absolute;left:0;bottom:1px;right:1px;height:calc(50% - 1px);background:#ececec"></div><svg style="position:absolute;left:0;top:0" width="16" height="21"><path d="M5.5 6.8 L8 4.2 L10.5 6.8 Z M5.5 15.8 L8 18.2 L10.5 15.8 Z" fill="#000"/></svg></div></div>
<div style="position:absolute;left:1034px;top:523px;width:55px;height:25px;box-sizing:border-box;border-top:2px solid #6e6e6e;border-left:2px solid #6e6e6e;border-bottom:1.5px solid #f4f4f4;border-right:1.5px solid #f4f4f4;background:#b8f4f4"><div style="position:absolute;left:3px;top:0;bottom:0;display:flex;align-items:center;font-size:16px;color:#000">24</div><div style="position:absolute;right:1px;top:0px;width:17px;bottom:0;background:#707070"><div style="position:absolute;left:0;top:0;right:1px;height:calc(50% - 1px);background:#ececec;border-bottom:1px solid #999"></div><div style="position:absolute;left:0;bottom:1px;right:1px;height:calc(50% - 1px);background:#ececec"></div><svg style="position:absolute;left:0;top:0" width="16" height="21"><path d="M5.5 6.8 L8 4.2 L10.5 6.8 Z M5.5 15.8 L8 18.2 L10.5 15.8 Z" fill="#000"/></svg></div></div>
<div style="position:absolute;left:1109px;top:530px;width:19px;height:19px;box-sizing:border-box;background:#f4f4f4;border-top:2px solid #6a6a6a;border-left:2px solid #6a6a6a;border-bottom:2px solid #fafafa;border-right:2px solid #fafafa"></div>
<div style="position:absolute;left:158px;top:584px;width:992px;height:525px;box-sizing:border-box;background:#b3c7e1;border-top:2px solid #737373;border-left:2px solid #737373;border-bottom:2px solid #f2f4f8;border-right:2px solid #f2f4f8"></div>
<div style="position:absolute;left:225px;top:600.0px;line-height:20px;font-size:16px;color:#000;white-space:pre;">ShowTrade Size</div>
<div style="position:absolute;left:357px;top:598px;width:19px;height:19px;box-sizing:border-box;background:#f4f4f4;border-top:2px solid #6a6a6a;border-left:2px solid #6a6a6a;border-bottom:2px solid #fafafa;border-right:2px solid #fafafa"></div><svg style="position:absolute;left:357px;top:598px" width="19" height="19"><path d="M4.5 8 L7 13.5 L12.5 4.5 L11.5 4 L7 10.5 L5.5 7.5 Z" fill="#000" stroke="#000" stroke-width="1.6" stroke-linejoin="round"/></svg>
<div style="position:absolute;left:167px;top:622px;width:192px;height:35px;background:#80f4f4;border:1px solid #000;box-sizing:border-box;color:#000;font-size:16px;display:flex;align-items:center;justify-content:center;white-space:pre">TradeSize Buy color</div>
<div style="position:absolute;left:391px;top:622px;width:198px;height:35px;background:#f480f4;border:1px solid #000;box-sizing:border-box;color:#000;font-size:16px;display:flex;align-items:center;justify-content:center;white-space:pre">TradeSize Sell color</div>
<div style="position:absolute;left:445px;width:400px;text-align:center;top:598.0px;line-height:20px;font-size:16px;color:#000;white-space:pre;">Value</div>
<div style="position:absolute;left:723px;top:598.0px;line-height:20px;font-size:16px;color:#000;white-space:pre;">Min Volume</div>
<div style="position:absolute;left:606px;top:622px;width:91px;height:26px;box-sizing:border-box;border-top:2px solid #6e6e6e;border-left:2px solid #6e6e6e;border-bottom:1.5px solid #f4f4f4;border-right:1.5px solid #f4f4f4;background:#f8c0f8"><div style="position:absolute;left:3px;top:0;bottom:0;display:flex;align-items:center;font-size:16px;color:#000">10</div><div style="position:absolute;right:1px;top:0px;width:17px;bottom:0;background:#707070"><div style="position:absolute;left:0;top:0;right:1px;height:calc(50% - 1px);background:#ececec;border-bottom:1px solid #999"></div><div style="position:absolute;left:0;bottom:1px;right:1px;height:calc(50% - 1px);background:#ececec"></div><svg style="position:absolute;left:0;top:0" width="16" height="22"><path d="M5.5 7.0 L8 4.5 L10.5 7.0 Z M5.5 16.4 L8 18.9 L10.5 16.4 Z" fill="#000"/></svg></div></div>
<div style="position:absolute;left:723px;top:622px;width:88px;height:26px;box-sizing:border-box;border-top:2px solid #6e6e6e;border-left:2px solid #6e6e6e;border-bottom:1.5px solid #f4f4f4;border-right:1.5px solid #f4f4f4;background:#f8c0f8"><div style="position:absolute;left:3px;top:0;bottom:0;display:flex;align-items:center;font-size:16px;color:#000">0</div><div style="position:absolute;right:1px;top:0px;width:17px;bottom:0;background:#707070"><div style="position:absolute;left:0;top:0;right:1px;height:calc(50% - 1px);background:#ececec;border-bottom:1px solid #999"></div><div style="position:absolute;left:0;bottom:1px;right:1px;height:calc(50% - 1px);background:#ececec"></div><svg style="position:absolute;left:0;top:0" width="16" height="22"><path d="M5.5 7.0 L8 4.5 L10.5 7.0 Z M5.5 16.4 L8 18.9 L10.5 16.4 Z" fill="#000"/></svg></div></div>
<div style="position:absolute;left:842px;top:629.0px;line-height:20px;font-size:16px;color:#1414e0;white-space:pre;">Reload indicator to apply this change</div>
<div style="position:absolute;left:217px;top:665.0px;line-height:20px;font-size:16px;color:#000;white-space:pre;">Show Delta in Bar</div>
<div style="position:absolute;left:355px;top:664px;width:19px;height:19px;box-sizing:border-box;background:#f4f4f4;border-top:2px solid #6a6a6a;border-left:2px solid #6a6a6a;border-bottom:2px solid #fafafa;border-right:2px solid #fafafa"></div><svg style="position:absolute;left:355px;top:664px" width="19" height="19"><path d="M4.5 8 L7 13.5 L12.5 4.5 L11.5 4 L7 10.5 L5.5 7.5 Z" fill="#000" stroke="#000" stroke-width="1.6" stroke-linejoin="round"/></svg>
<div style="position:absolute;left:165px;top:688px;width:192px;height:36px;background:#00f000;border:1px solid #000;box-sizing:border-box;color:#000;font-size:16px;display:flex;align-items:center;justify-content:center;white-space:pre">Positive delta color</div>
<div style="position:absolute;left:391px;top:688px;width:198px;height:36px;background:#f08080;border:1px solid #000;box-sizing:border-box;color:#000;font-size:16px;display:flex;align-items:center;justify-content:center;white-space:pre">Negative delta color</div>
<div style="position:absolute;left:606px;top:688px;width:90px;height:26px;box-sizing:border-box;border-top:2px solid #6e6e6e;border-left:2px solid #6e6e6e;border-bottom:1.5px solid #f4f4f4;border-right:1.5px solid #f4f4f4;background:#c0c0f4"><div style="position:absolute;left:3px;top:0;bottom:0;display:flex;align-items:center;font-size:16px;color:#000">10</div><div style="position:absolute;right:1px;top:0px;width:17px;bottom:0;background:#707070"><div style="position:absolute;left:0;top:0;right:1px;height:calc(50% - 1px);background:#ececec;border-bottom:1px solid #999"></div><div style="position:absolute;left:0;bottom:1px;right:1px;height:calc(50% - 1px);background:#ececec"></div><svg style="position:absolute;left:0;top:0" width="16" height="22"><path d="M5.5 7.0 L8 4.5 L10.5 7.0 Z M5.5 16.4 L8 18.9 L10.5 16.4 Z" fill="#000"/></svg></div></div>
<div style="position:absolute;left:723px;top:688px;width:88px;height:26px;box-sizing:border-box;border-top:2px solid #6e6e6e;border-left:2px solid #6e6e6e;border-bottom:1.5px solid #f4f4f4;border-right:1.5px solid #f4f4f4;background:#c0c0f4"><div style="position:absolute;left:3px;top:0;bottom:0;display:flex;align-items:center;font-size:16px;color:#000">0</div><div style="position:absolute;right:1px;top:0px;width:17px;bottom:0;background:#707070"><div style="position:absolute;left:0;top:0;right:1px;height:calc(50% - 1px);background:#ececec;border-bottom:1px solid #999"></div><div style="position:absolute;left:0;bottom:1px;right:1px;height:calc(50% - 1px);background:#ececec"></div><svg style="position:absolute;left:0;top:0" width="16" height="22"><path d="M5.5 7.0 L8 4.5 L10.5 7.0 Z M5.5 16.4 L8 18.9 L10.5 16.4 Z" fill="#000"/></svg></div></div>
<div style="position:absolute;left:211px;top:731.0px;line-height:20px;font-size:16px;color:#000;white-space:pre;">Show BigTrade 1</div>
<div style="position:absolute;left:344px;top:731px;width:19px;height:19px;box-sizing:border-box;background:#f4f4f4;border-top:2px solid #6a6a6a;border-left:2px solid #6a6a6a;border-bottom:2px solid #fafafa;border-right:2px solid #fafafa"></div><svg style="position:absolute;left:344px;top:731px" width="19" height="19"><path d="M4.5 8 L7 13.5 L12.5 4.5 L11.5 4 L7 10.5 L5.5 7.5 Z" fill="#000" stroke="#000" stroke-width="1.6" stroke-linejoin="round"/></svg>
<div style="position:absolute;left:375px;top:731px;width:19px;height:19px;box-sizing:border-box;background:#f4f4f4;border-top:2px solid #6a6a6a;border-left:2px solid #6a6a6a;border-bottom:2px solid #fafafa;border-right:2px solid #fafafa"></div>
<div style="position:absolute;left:400px;top:731.0px;line-height:20px;font-size:16px;color:#000;white-space:pre;">Show BigTrade 2</div>
<div style="position:absolute;left:165px;top:756px;width:192px;height:35px;background:#b8f4b8;border:1px solid #000;box-sizing:border-box;color:#000;font-size:16px;display:flex;align-items:center;justify-content:center;white-space:pre">BigTrade Buy color</div>
<div style="position:absolute;left:391px;top:756px;width:198px;height:35px;background:#f4b8b8;border:1px solid #000;box-sizing:border-box;color:#000;font-size:16px;display:flex;align-items:center;justify-content:center;white-space:pre">BigTrade Sell color</div>
<div style="position:absolute;left:606px;top:757px;width:90px;height:26px;box-sizing:border-box;border-top:2px solid #6e6e6e;border-left:2px solid #6e6e6e;border-bottom:1.5px solid #f4f4f4;border-right:1.5px solid #f4f4f4;background:#f4b8b8"><div style="position:absolute;left:3px;top:0;bottom:0;display:flex;align-items:center;font-size:16px;color:#000">100</div><div style="position:absolute;right:1px;top:0px;width:17px;bottom:0;background:#707070"><div style="position:absolute;left:0;top:0;right:1px;height:calc(50% - 1px);background:#ececec;border-bottom:1px solid #999"></div><div style="position:absolute;left:0;bottom:1px;right:1px;height:calc(50% - 1px);background:#ececec"></div><svg style="position:absolute;left:0;top:0" width="16" height="22"><path d="M5.5 7.0 L8 4.5 L10.5 7.0 Z M5.5 16.4 L8 18.9 L10.5 16.4 Z" fill="#000"/></svg></div></div>
<div style="position:absolute;left:723px;top:757px;width:88px;height:26px;box-sizing:border-box;border-top:2px solid #6e6e6e;border-left:2px solid #6e6e6e;border-bottom:1.5px solid #f4f4f4;border-right:1.5px solid #f4f4f4;background:#f4b8b8"><div style="position:absolute;left:3px;top:0;bottom:0;display:flex;align-items:center;font-size:16px;color:#000">100</div><div style="position:absolute;right:1px;top:0px;width:17px;bottom:0;background:#707070"><div style="position:absolute;left:0;top:0;right:1px;height:calc(50% - 1px);background:#ececec;border-bottom:1px solid #999"></div><div style="position:absolute;left:0;bottom:1px;right:1px;height:calc(50% - 1px);background:#ececec"></div><svg style="position:absolute;left:0;top:0" width="16" height="22"><path d="M5.5 7.0 L8 4.5 L10.5 7.0 Z M5.5 16.4 L8 18.9 L10.5 16.4 Z" fill="#000"/></svg></div></div>
<div style="position:absolute;left:846px;top:764.0px;line-height:20px;font-size:16px;color:#000;white-space:pre;">BigTrade length</div>
<div style="position:absolute;left:1010px;top:759.5px;width:132px;height:3px;background:#e4e4e4;border-top:1px solid #a0a0a0;box-sizing:border-box"></div><div style="position:absolute;left:1014px;top:774.5px;width:123px;height:3px;background:#000"></div><svg style="position:absolute;left:1010px;top:751px" width="13" height="22"><path d="M1 1 H12 V15 L6.5 21 L1 15 Z" fill="#e8e8e8" stroke="#8a8a8a" stroke-width="1"/></svg>
<div style="position:absolute;left:231px;top:809.0px;line-height:20px;font-size:16px;color:#000;white-space:pre;">Show ATS Filter</div>
<div style="position:absolute;left:357px;top:808px;width:19px;height:19px;box-sizing:border-box;background:#f4f4f4;border-top:2px solid #6a6a6a;border-left:2px solid #6a6a6a;border-bottom:2px solid #fafafa;border-right:2px solid #fafafa"></div><svg style="position:absolute;left:357px;top:808px" width="19" height="19"><path d="M4.5 8 L7 13.5 L12.5 4.5 L11.5 4 L7 10.5 L5.5 7.5 Z" fill="#000" stroke="#000" stroke-width="1.6" stroke-linejoin="round"/></svg>
<div style="position:absolute;left:165px;top:831px;width:424px;height:34px;background:#f4f400;border:1px solid #000;box-sizing:border-box;color:#000;font-size:16px;display:flex;align-items:center;justify-content:center;white-space:pre">ATS Filter color</div>
<div style="position:absolute;left:606px;top:832px;width:90px;height:25px;box-sizing:border-box;border-top:2px solid #6e6e6e;border-left:2px solid #6e6e6e;border-bottom:1.5px solid #f4f4f4;border-right:1.5px solid #f4f4f4;background:#80f4f4"><div style="position:absolute;left:3px;top:0;bottom:0;display:flex;align-items:center;font-size:16px;color:#000">3.50</div><div style="position:absolute;right:1px;top:0px;width:17px;bottom:0;background:#707070"><div style="position:absolute;left:0;top:0;right:1px;height:calc(50% - 1px);background:#ececec;border-bottom:1px solid #999"></div><div style="position:absolute;left:0;bottom:1px;right:1px;height:calc(50% - 1px);background:#ececec"></div><svg style="position:absolute;left:0;top:0" width="16" height="21"><path d="M5.5 6.8 L8 4.2 L10.5 6.8 Z M5.5 15.8 L8 18.2 L10.5 15.8 Z" fill="#000"/></svg></div></div>
<div style="position:absolute;left:723px;top:832px;width:88px;height:25px;box-sizing:border-box;border-top:2px solid #6e6e6e;border-left:2px solid #6e6e6e;border-bottom:1.5px solid #f4f4f4;border-right:1.5px solid #f4f4f4;background:#80f4f4"><div style="position:absolute;left:3px;top:0;bottom:0;display:flex;align-items:center;font-size:16px;color:#000">100</div><div style="position:absolute;right:1px;top:0px;width:17px;bottom:0;background:#707070"><div style="position:absolute;left:0;top:0;right:1px;height:calc(50% - 1px);background:#ececec;border-bottom:1px solid #999"></div><div style="position:absolute;left:0;bottom:1px;right:1px;height:calc(50% - 1px);background:#ececec"></div><svg style="position:absolute;left:0;top:0" width="16" height="21"><path d="M5.5 6.8 L8 4.2 L10.5 6.8 Z M5.5 15.8 L8 18.2 L10.5 15.8 Z" fill="#000"/></svg></div></div>
<div style="position:absolute;left:865px;top:838.0px;line-height:20px;font-size:16px;color:#000;white-space:pre;">ATS length</div>
<div style="position:absolute;left:1010px;top:834.5px;width:132px;height:3px;background:#e4e4e4;border-top:1px solid #a0a0a0;box-sizing:border-box"></div><div style="position:absolute;left:1014px;top:849.5px;width:123px;height:3px;background:#000"></div><svg style="position:absolute;left:1033px;top:826px" width="13" height="22"><path d="M1 1 H12 V15 L6.5 21 L1 15 Z" fill="#e8e8e8" stroke="#8a8a8a" stroke-width="1"/></svg>
<div style="position:absolute;left:229px;top:881.0px;line-height:20px;font-size:16px;color:#000;white-space:pre;">Show AVB Filter</div>
<div style="position:absolute;left:356px;top:879px;width:19px;height:19px;box-sizing:border-box;background:#f4f4f4;border-top:2px solid #6a6a6a;border-left:2px solid #6a6a6a;border-bottom:2px solid #fafafa;border-right:2px solid #fafafa"></div><svg style="position:absolute;left:356px;top:879px" width="19" height="19"><path d="M4.5 8 L7 13.5 L12.5 4.5 L11.5 4 L7 10.5 L5.5 7.5 Z" fill="#000" stroke="#000" stroke-width="1.6" stroke-linejoin="round"/></svg>
<div style="position:absolute;left:165px;top:904px;width:424px;height:33px;background:#f48000;border:1px solid #000;box-sizing:border-box;color:#000;font-size:16px;display:flex;align-items:center;justify-content:center;white-space:pre">AVB Filter color</div>
<div style="position:absolute;left:606px;top:906px;width:91px;height:25px;box-sizing:border-box;border-top:2px solid #6e6e6e;border-left:2px solid #6e6e6e;border-bottom:1.5px solid #f4f4f4;border-right:1.5px solid #f4f4f4;background:#8080f4"><div style="position:absolute;left:3px;top:0;bottom:0;display:flex;align-items:center;font-size:16px;color:#000">30</div><div style="position:absolute;right:1px;top:0px;width:17px;bottom:0;background:#707070"><div style="position:absolute;left:0;top:0;right:1px;height:calc(50% - 1px);background:#ececec;border-bottom:1px solid #999"></div><div style="position:absolute;left:0;bottom:1px;right:1px;height:calc(50% - 1px);background:#ececec"></div><svg style="position:absolute;left:0;top:0" width="16" height="21"><path d="M5.5 6.8 L8 4.2 L10.5 6.8 Z M5.5 15.8 L8 18.2 L10.5 15.8 Z" fill="#000"/></svg></div></div>
<div style="position:absolute;left:721px;top:906px;width:90px;height:25px;box-sizing:border-box;border-top:2px solid #6e6e6e;border-left:2px solid #6e6e6e;border-bottom:1.5px solid #f4f4f4;border-right:1.5px solid #f4f4f4;background:#8080f4"><div style="position:absolute;left:3px;top:0;bottom:0;display:flex;align-items:center;font-size:16px;color:#000">100</div><div style="position:absolute;right:1px;top:0px;width:17px;bottom:0;background:#707070"><div style="position:absolute;left:0;top:0;right:1px;height:calc(50% - 1px);background:#ececec;border-bottom:1px solid #999"></div><div style="position:absolute;left:0;bottom:1px;right:1px;height:calc(50% - 1px);background:#ececec"></div><svg style="position:absolute;left:0;top:0" width="16" height="21"><path d="M5.5 6.8 L8 4.2 L10.5 6.8 Z M5.5 15.8 L8 18.2 L10.5 15.8 Z" fill="#000"/></svg></div></div>
<div style="position:absolute;left:864px;top:911.0px;line-height:20px;font-size:16px;color:#000;white-space:pre;">AVB length</div>
<div style="position:absolute;left:1010px;top:910.5px;width:132px;height:3px;background:#e4e4e4;border-top:1px solid #a0a0a0;box-sizing:border-box"></div><div style="position:absolute;left:1014px;top:925.5px;width:123px;height:3px;background:#000"></div><svg style="position:absolute;left:1049px;top:902px" width="13" height="22"><path d="M1 1 H12 V15 L6.5 21 L1 15 Z" fill="#e8e8e8" stroke="#8a8a8a" stroke-width="1"/></svg>
<div style="position:absolute;left:211px;top:958.0px;line-height:20px;font-size:16px;color:#000;white-space:pre;">Daily High/Low Bar</div>
<div style="position:absolute;left:358px;top:956px;width:19px;height:19px;box-sizing:border-box;background:#f4f4f4;border-top:2px solid #6a6a6a;border-left:2px solid #6a6a6a;border-bottom:2px solid #fafafa;border-right:2px solid #fafafa"></div><svg style="position:absolute;left:358px;top:956px" width="19" height="19"><path d="M4.5 8 L7 13.5 L12.5 4.5 L11.5 4 L7 10.5 L5.5 7.5 Z" fill="#000" stroke="#000" stroke-width="1.6" stroke-linejoin="round"/></svg>
<div style="position:absolute;left:165px;top:984px;width:194px;height:34px;background:#00c0f4;border:1px solid #000;box-sizing:border-box;color:#000;font-size:16px;display:flex;align-items:center;justify-content:center;white-space:pre">Daily High color</div>
<div style="position:absolute;left:391px;top:984px;width:198px;height:34px;background:#f41894;border:1px solid #000;box-sizing:border-box;color:#000;font-size:16px;display:flex;align-items:center;justify-content:center;white-space:pre">Daily Low color</div>
<div style="position:absolute;left:861px;top:957.0px;line-height:20px;font-size:16px;color:#000;white-space:pre;">Show Signal</div>
<div style="position:absolute;left:960px;top:956px;width:19px;height:19px;box-sizing:border-box;background:#f4f4f4;border-top:2px solid #6a6a6a;border-left:2px solid #6a6a6a;border-bottom:2px solid #fafafa;border-right:2px solid #fafafa"></div>
<div style="position:absolute;left:819px;top:983px;width:150px;height:35px;background:#f4f4f4;border:1px solid #000;box-sizing:border-box;color:#000;font-size:16px;display:flex;align-items:center;justify-content:center;white-space:pre">Long signal color</div>
<div style="position:absolute;left:984px;top:983px;width:150px;height:35px;background:#f4f4f4;border:1px solid #000;box-sizing:border-box;color:#000;font-size:16px;display:flex;align-items:center;justify-content:center;white-space:pre">short signal color</div>
<div style="position:absolute;left:215px;top:1037.0px;line-height:20px;font-size:16px;color:#000;white-space:pre;">VAH / VAL</div>
<div style="position:absolute;left:300px;top:1036px;width:19px;height:19px;box-sizing:border-box;background:#f4f4f4;border-top:2px solid #6a6a6a;border-left:2px solid #6a6a6a;border-bottom:2px solid #fafafa;border-right:2px solid #fafafa"></div><svg style="position:absolute;left:300px;top:1036px" width="19" height="19"><path d="M4.5 8 L7 13.5 L12.5 4.5 L11.5 4 L7 10.5 L5.5 7.5 Z" fill="#000" stroke="#000" stroke-width="1.6" stroke-linejoin="round"/></svg>
<div style="position:absolute;left:432px;top:1037.0px;line-height:20px;font-size:16px;color:#000;white-space:pre;">Value Area</div>
<div style="position:absolute;left:521px;top:1036px;width:19px;height:19px;box-sizing:border-box;background:#f4f4f4;border-top:2px solid #6a6a6a;border-left:2px solid #6a6a6a;border-bottom:2px solid #fafafa;border-right:2px solid #fafafa"></div><svg style="position:absolute;left:521px;top:1036px" width="19" height="19"><path d="M4.5 8 L7 13.5 L12.5 4.5 L11.5 4 L7 10.5 L5.5 7.5 Z" fill="#000" stroke="#000" stroke-width="1.6" stroke-linejoin="round"/></svg>
<div style="position:absolute;left:452px;width:400px;text-align:center;top:1040.0px;line-height:20px;font-size:16px;color:#000;white-space:pre;">Percent</div>
<div style="position:absolute;left:567px;width:400px;text-align:center;top:1040.0px;line-height:20px;font-size:16px;color:#000;white-space:pre;">Opacity</div>
<div style="position:absolute;left:165px;top:1062px;width:198px;height:35px;background:#9030c8;border:1px solid #000;box-sizing:border-box;color:#000;font-size:16px;display:flex;align-items:center;justify-content:center;white-space:pre">VAH / VAL color</div>
<div style="position:absolute;left:391px;top:1062px;width:198px;height:35px;background:#9030c8;border:1px solid #000;box-sizing:border-box;color:#000;font-size:16px;display:flex;align-items:center;justify-content:center;white-space:pre">Value Area color</div>
<div style="position:absolute;left:606px;top:1064px;width:91px;height:25px;box-sizing:border-box;border-top:2px solid #6e6e6e;border-left:2px solid #6e6e6e;border-bottom:1.5px solid #f4f4f4;border-right:1.5px solid #f4f4f4;background:#f0f0dc"><div style="position:absolute;left:3px;top:0;bottom:0;display:flex;align-items:center;font-size:16px;color:#000">68</div><div style="position:absolute;right:1px;top:0px;width:17px;bottom:0;background:#707070"><div style="position:absolute;left:0;top:0;right:1px;height:calc(50% - 1px);background:#ececec;border-bottom:1px solid #999"></div><div style="position:absolute;left:0;bottom:1px;right:1px;height:calc(50% - 1px);background:#ececec"></div><svg style="position:absolute;left:0;top:0" width="16" height="21"><path d="M5.5 6.8 L8 4.2 L10.5 6.8 Z M5.5 15.8 L8 18.2 L10.5 15.8 Z" fill="#000"/></svg></div></div>
<div style="position:absolute;left:721px;top:1064px;width:91px;height:25px;box-sizing:border-box;border-top:2px solid #6e6e6e;border-left:2px solid #6e6e6e;border-bottom:1.5px solid #f4f4f4;border-right:1.5px solid #f4f4f4;background:#b8f4b8"><div style="position:absolute;left:3px;top:0;bottom:0;display:flex;align-items:center;font-size:16px;color:#000">20</div><div style="position:absolute;right:1px;top:0px;width:17px;bottom:0;background:#707070"><div style="position:absolute;left:0;top:0;right:1px;height:calc(50% - 1px);background:#ececec;border-bottom:1px solid #999"></div><div style="position:absolute;left:0;bottom:1px;right:1px;height:calc(50% - 1px);background:#ececec"></div><svg style="position:absolute;left:0;top:0" width="16" height="21"><path d="M5.5 6.8 L8 4.2 L10.5 6.8 Z M5.5 15.8 L8 18.2 L10.5 15.8 Z" fill="#000"/></svg></div></div>
<div style="position:absolute;left:883px;top:1071.0px;line-height:20px;font-size:16px;color:#000;white-space:pre;">Show Chart Details</div>
<div style="position:absolute;left:1031px;top:1069px;width:19px;height:19px;box-sizing:border-box;background:#f4f4f4;border-top:2px solid #6a6a6a;border-left:2px solid #6a6a6a;border-bottom:2px solid #fafafa;border-right:2px solid #fafafa"></div><svg style="position:absolute;left:1031px;top:1069px" width="19" height="19"><path d="M4.5 8 L7 13.5 L12.5 4.5 L11.5 4 L7 10.5 L5.5 7.5 Z" fill="#000" stroke="#000" stroke-width="1.6" stroke-linejoin="round"/></svg>
<div style="position:absolute;left:224px;top:1132.0px;line-height:20px;font-size:16px;color:#000;white-space:pre;">Delta Line</div>
<div style="position:absolute;left:305px;top:1131px;width:19px;height:19px;box-sizing:border-box;background:#f4f4f4;border-top:2px solid #6a6a6a;border-left:2px solid #6a6a6a;border-bottom:2px solid #fafafa;border-right:2px solid #fafafa"></div><svg style="position:absolute;left:305px;top:1131px" width="19" height="19"><path d="M4.5 8 L7 13.5 L12.5 4.5 L11.5 4 L7 10.5 L5.5 7.5 Z" fill="#000" stroke="#000" stroke-width="1.6" stroke-linejoin="round"/></svg>
<div style="position:absolute;left:398px;top:1132.0px;line-height:20px;font-size:16px;color:#000;white-space:pre;">Volume Graph</div>
<div style="position:absolute;left:511px;top:1131px;width:19px;height:19px;box-sizing:border-box;background:#f4f4f4;border-top:2px solid #6a6a6a;border-left:2px solid #6a6a6a;border-bottom:2px solid #fafafa;border-right:2px solid #fafafa"></div><svg style="position:absolute;left:511px;top:1131px" width="19" height="19"><path d="M4.5 8 L7 13.5 L12.5 4.5 L11.5 4 L7 10.5 L5.5 7.5 Z" fill="#000" stroke="#000" stroke-width="1.6" stroke-linejoin="round"/></svg>
<div style="position:absolute;left:617px;top:1132.0px;line-height:20px;font-size:16px;color:#000;white-space:pre;">Delta Graph</div>
<div style="position:absolute;left:713px;top:1131px;width:19px;height:19px;box-sizing:border-box;background:#f4f4f4;border-top:2px solid #6a6a6a;border-left:2px solid #6a6a6a;border-bottom:2px solid #fafafa;border-right:2px solid #fafafa"></div>
<div style="position:absolute;left:826px;top:1132.0px;line-height:20px;font-size:16px;color:#000;white-space:pre;">ATS Graph</div>
<div style="position:absolute;left:915px;top:1131px;width:19px;height:19px;box-sizing:border-box;background:#f4f4f4;border-top:2px solid #6a6a6a;border-left:2px solid #6a6a6a;border-bottom:2px solid #fafafa;border-right:2px solid #fafafa"></div>
<div style="position:absolute;left:1026px;top:1132.0px;line-height:20px;font-size:16px;color:#000;white-space:pre;">AVB Graph</div>
<div style="position:absolute;left:1116px;top:1131px;width:19px;height:19px;box-sizing:border-box;background:#f4f4f4;border-top:2px solid #6a6a6a;border-left:2px solid #6a6a6a;border-bottom:2px solid #fafafa;border-right:2px solid #fafafa"></div>
<div style="position:absolute;left:157px;top:1165px;width:172px;height:35px;background:#00f4f4;border:1px solid #000;box-sizing:border-box;color:#000;font-size:16px;display:flex;align-items:center;justify-content:center;white-space:pre">Pos delta line color</div>
<div style="position:absolute;left:360px;top:1165px;width:172px;height:35px;background:#00f080;border:1px solid #000;box-sizing:border-box;color:#000;font-size:16px;display:flex;align-items:center;justify-content:center;white-space:pre">Buy Volume color</div>
<div style="position:absolute;left:564px;top:1165px;width:172px;height:35px;background:#208820;border:1px solid #000;box-sizing:border-box;color:#000;font-size:16px;display:flex;align-items:center;justify-content:center;white-space:pre">Pos delta color</div>
<div style="position:absolute;left:766px;top:1165px;width:172px;height:35px;background:#f4f400;border:1px solid #000;box-sizing:border-box;color:#000;font-size:16px;display:flex;align-items:center;justify-content:center;white-space:pre">ATS Graph color</div>
<div style="position:absolute;left:967px;top:1165px;width:172px;height:35px;background:#f4a000;border:1px solid #000;box-sizing:border-box;color:#000;font-size:16px;display:flex;align-items:center;justify-content:center;white-space:pre">AVB Graph color</div>
<div style="position:absolute;left:157px;top:1209px;width:172px;height:35px;background:#f000f0;border:1px solid #000;box-sizing:border-box;color:#000;font-size:16px;display:flex;align-items:center;justify-content:center;white-space:pre">Neg delta line color</div>
<div style="position:absolute;left:360px;top:1209px;width:172px;height:35px;background:#f44000;border:1px solid #000;box-sizing:border-box;color:#000;font-size:16px;display:flex;align-items:center;justify-content:center;white-space:pre">Sell Volume color</div>
<div style="position:absolute;left:564px;top:1209px;width:172px;height:35px;background:#8c00c8;border:1px solid #000;box-sizing:border-box;color:#000;font-size:16px;display:flex;align-items:center;justify-content:center;white-space:pre">Neg delta color</div>
<div style="position:absolute;left:363px;top:1257.0px;line-height:20px;font-size:16px;color:#000;white-space:pre;">Min delta %</div>
<div style="position:absolute;left:470px;top:1253px;width:61px;height:25px;box-sizing:border-box;border-top:2px solid #6e6e6e;border-left:2px solid #6e6e6e;border-bottom:1.5px solid #f4f4f4;border-right:1.5px solid #f4f4f4;background:#f0f0dc"><div style="position:absolute;left:3px;top:0;bottom:0;display:flex;align-items:center;font-size:16px;color:#000">60</div><div style="position:absolute;right:1px;top:0px;width:17px;bottom:0;background:#707070"><div style="position:absolute;left:0;top:0;right:1px;height:calc(50% - 1px);background:#ececec;border-bottom:1px solid #999"></div><div style="position:absolute;left:0;bottom:1px;right:1px;height:calc(50% - 1px);background:#ececec"></div><svg style="position:absolute;left:0;top:0" width="16" height="21"><path d="M5.5 6.8 L8 4.2 L10.5 6.8 Z M5.5 15.8 L8 18.2 L10.5 15.8 Z" fill="#000"/></svg></div></div>
<div style="position:absolute;left:159px;top:1309.0px;line-height:20px;font-size:16px;color:#2020c0;white-space:pre;">ICF Market Group</div>
<div style="position:absolute;left:298px;top:1309.0px;line-height:20px;font-size:16px;color:#1414d0;white-space:pre;"><u>www.icf-market.com</u></div>
<div style="position:absolute;left:542px;top:1306.0px;line-height:20px;font-size:16px;color:#e81020;white-space:pre;">Multiple Prices In Per Row</div>
<div style="position:absolute;left:745px;top:1301px;width:60px;height:24px;box-sizing:border-box;border-top:2px solid #6e6e6e;border-left:2px solid #6e6e6e;border-bottom:1.5px solid #f4f4f4;border-right:1.5px solid #f4f4f4;background:#f08080"><div style="position:absolute;left:3px;top:0;bottom:0;display:flex;align-items:center;font-size:16px;color:#000">1</div><div style="position:absolute;right:1px;top:0px;width:17px;bottom:0;background:#707070"><div style="position:absolute;left:0;top:0;right:1px;height:calc(50% - 1px);background:#ececec;border-bottom:1px solid #999"></div><div style="position:absolute;left:0;bottom:1px;right:1px;height:calc(50% - 1px);background:#ececec"></div><svg style="position:absolute;left:0;top:0" width="16" height="20"><path d="M5.5 6.5 L8 4.0 L10.5 6.5 Z M5.5 15.1 L8 17.6 L10.5 15.1 Z" fill="#000"/></svg></div></div>
<div style="position:absolute;left:816px;top:1306.0px;line-height:20px;font-size:16px;color:#e81020;white-space:pre;">--&gt;</div>
<div style="position:absolute;left:847px;top:1299px;width:146px;height:35px;background:#0000c0;border:1px solid #e0e0e0;box-sizing:border-box;color:#fff;font-size:16px;display:flex;align-items:center;justify-content:center;white-space:pre">Reload Indicator</div>
<div style="position:absolute;left:1012px;top:1299px;width:146px;height:35px;background:#f4d000;border:1px solid #000;box-sizing:border-box;color:#000;font-size:16px;display:flex;align-items:center;justify-content:center;white-space:pre">Default Setting</div>
<svg style="position:absolute;left:0;top:0" width="2165" height="1641"><path d="M155,608 C155.5,604.2 153.8,590.8 158,585 C162.2,579.2 171.2,572.5 180,573 C188.8,573.5 199.0,583.7 211,588 C223.0,592.3 224.3,597.8 252,599 C279.7,600.2 333.0,596.0 377,595 C421.0,594.0 470.5,595.2 516,593 C561.5,590.8 601.8,584.5 650,582 C698.2,579.5 761.8,576.3 805,578 C848.2,579.7 875.5,590.3 909,592 C942.5,593.7 979.2,586.8 1006,588 C1032.8,589.2 1051.2,595.3 1070,599 C1088.8,602.7 1108.2,600.3 1119,610 C1129.8,619.7 1129.8,643.8 1135,657 C1140.2,670.2 1147.5,678.2 1150,689 C1152.5,699.8 1149.0,705.8 1150,722 C1151.0,738.2 1155.8,759.2 1156,786 C1156.2,812.8 1155.0,864.2 1151,883 C1147.0,901.8 1140.0,897.8 1132,899 C1124.0,900.2 1116.0,893.5 1103,890 C1090.0,886.5 1075.7,880.5 1054,878 C1032.3,875.5 993.5,879.0 973,875 C952.5,871.0 941.7,858.5 931,854 C920.3,849.5 920.8,848.8 909,848 C897.2,847.2 876.2,851.5 860,849 C843.8,846.5 847.0,840.8 812,833 C777.0,825.2 690.2,805.0 650,802 C609.8,799.0 598.0,811.0 571,815 C544.0,819.0 520.3,827.2 488,826 C455.7,824.8 409.3,812.2 377,808 C344.7,803.8 321.7,799.0 294,801 C266.3,803.0 230.3,817.0 211,820 C191.7,823.0 186.5,822.2 178,819 C169.5,815.8 165.7,811.8 160,801 C154.3,790.2 148.8,766.5 144,754 C139.2,741.5 134.3,737.5 131,726 C127.7,714.5 124.8,696.5 124,685 C123.2,673.5 120.8,669.8 126,657 C131.2,644.2 150.2,616.2 155,608" fill="none" stroke="#ff0000" stroke-width="3.3" stroke-linecap="round" stroke-linejoin="round"/><path d="M1137,659 C1142.0,659.5 1151.5,658.5 1167,662 C1182.5,665.5 1202.7,670.3 1230,680 C1257.3,689.7 1304.2,707.8 1331,720 C1357.8,732.2 1370.8,741.5 1391,753 C1411.2,764.5 1431.8,774.3 1452,789 C1472.2,803.7 1492.0,822.3 1512,841 C1532.0,859.7 1555.3,882.2 1572,901 C1588.7,919.8 1600.5,938.5 1612,954 C1623.5,969.5 1630.8,979.3 1641,994 C1651.2,1008.7 1665.0,1028.7 1673,1042 C1681.0,1055.3 1686.3,1068.7 1689,1074" fill="none" stroke="#ff0000" stroke-width="3.3" stroke-linecap="round" stroke-linejoin="round"/><path d="M1663,1064 C1667.3,1065.7 1684.7,1072.3 1689,1074" fill="none" stroke="#ff0000" stroke-width="3.3" stroke-linecap="round" stroke-linejoin="round"/><path d="M1695,1024 C1694.3,1028.3 1692.0,1041.7 1691,1050 C1690.0,1058.3 1689.3,1070.0 1689,1074" fill="none" stroke="#ff0000" stroke-width="3.3" stroke-linecap="round" stroke-linejoin="round"/><path d="M1151,710 C1157.5,717.2 1176.8,727.2 1190,753 C1203.2,778.8 1220.0,831.5 1230,865 C1240.0,898.5 1244.5,933.2 1250,954 C1255.5,974.8 1254.2,975.3 1263,990 C1271.8,1004.7 1293.0,1023.3 1303,1042 C1313.0,1060.7 1319.0,1084.3 1323,1102 C1327.0,1119.7 1326.3,1140.3 1327,1148" fill="none" stroke="#ff0000" stroke-width="3.3" stroke-linecap="round" stroke-linejoin="round"/><path d="M1301,1129 C1305.7,1132.0 1324.3,1144.0 1329,1147" fill="none" stroke="#ff0000" stroke-width="3.3" stroke-linecap="round" stroke-linejoin="round"/><path d="M1339,1147 C1341.7,1141.7 1352.3,1120.3 1355,1115" fill="none" stroke="#ff0000" stroke-width="3.3" stroke-linecap="round" stroke-linejoin="round"/><path d="M1335,1159 C1340.3,1160.3 1357.0,1158.3 1367,1167 C1377.0,1175.7 1388.7,1197.0 1395,1211 C1401.3,1225.0 1407.0,1242.3 1405,1251 C1403.0,1259.7 1392.0,1264.3 1383,1263 C1374.0,1261.7 1361.0,1251.7 1351,1243 C1341.0,1234.3 1328.3,1221.7 1323,1211 C1317.7,1200.3 1317.0,1187.7 1319,1179 C1321.0,1170.3 1332.3,1162.3 1335,1159" fill="none" stroke="#ff0000" stroke-width="3.3" stroke-linecap="round" stroke-linejoin="round"/><path d="M1323,1231 C1329.7,1233.3 1356.3,1242.7 1363,1245" fill="none" stroke="#ff0000" stroke-width="3.3" stroke-linecap="round" stroke-linejoin="round"/><path d="M1652,1104 C1657.5,1101.7 1673.7,1093.8 1685,1090 C1696.3,1086.2 1708.5,1082.5 1720,1081 C1731.5,1079.5 1742.7,1080.5 1754,1081 C1765.3,1081.5 1779.5,1082.3 1788,1084 C1796.5,1085.7 1799.3,1087.0 1805,1091 C1810.7,1095.0 1817.5,1101.5 1822,1108 C1826.5,1114.5 1830.0,1124.8 1832,1130 C1834.0,1135.2 1834.8,1134.3 1834,1139 C1833.2,1143.7 1830.5,1154.0 1827,1158 C1823.5,1162.0 1819.5,1160.5 1813,1163 C1806.5,1165.5 1796.5,1170.2 1788,1173 C1779.5,1175.8 1773.3,1179.3 1762,1180 C1750.7,1180.7 1732.8,1181.0 1720,1177 C1707.2,1173.0 1695.0,1163.5 1685,1156 C1675.0,1148.5 1665.0,1139.2 1660,1132 C1655.0,1124.8 1655.0,1117.5 1655,1113 C1655.0,1108.5 1659.2,1106.3 1660,1105" fill="none" stroke="#ff0000" stroke-width="3.3" stroke-linecap="round" stroke-linejoin="round"/><path d="M1842,1139 C1839.2,1142.5 1829.2,1150.8 1825,1160 C1820.8,1169.2 1818.8,1179.8 1817,1194 C1815.2,1208.2 1813.2,1231.7 1814,1245 C1814.8,1258.3 1819.0,1268.3 1822,1274 C1825.0,1279.7 1828.8,1276.5 1832,1279 C1835.2,1281.5 1837.0,1287.7 1841,1289 C1845.0,1290.3 1850.7,1288.7 1856,1287 C1861.3,1285.3 1868.5,1284.7 1873,1279 C1877.5,1273.3 1881.0,1261.5 1883,1253 C1885.0,1244.5 1886.3,1237.8 1885,1228 C1883.7,1218.2 1879.8,1205.3 1875,1194 C1870.2,1182.7 1860.8,1168.8 1856,1160 C1851.2,1151.2 1848.3,1144.5 1846,1141 C1843.7,1137.5 1842.7,1139.3 1842,1139" fill="none" stroke="#ff0000" stroke-width="3.3" stroke-linecap="round" stroke-linejoin="round"/><path d="M1832,1274 C1833.2,1274.7 1836.7,1279.0 1839,1278 C1841.3,1277.0 1844.8,1269.7 1846,1268" fill="none" stroke="#ff0000" stroke-width="3.3" stroke-linecap="round" stroke-linejoin="round"/><path d="M1839,1278 C1839.3,1279.8 1840.7,1287.2 1841,1289" fill="none" stroke="#ff0000" stroke-width="3.3" stroke-linecap="round" stroke-linejoin="round"/></svg>
</body></html>
